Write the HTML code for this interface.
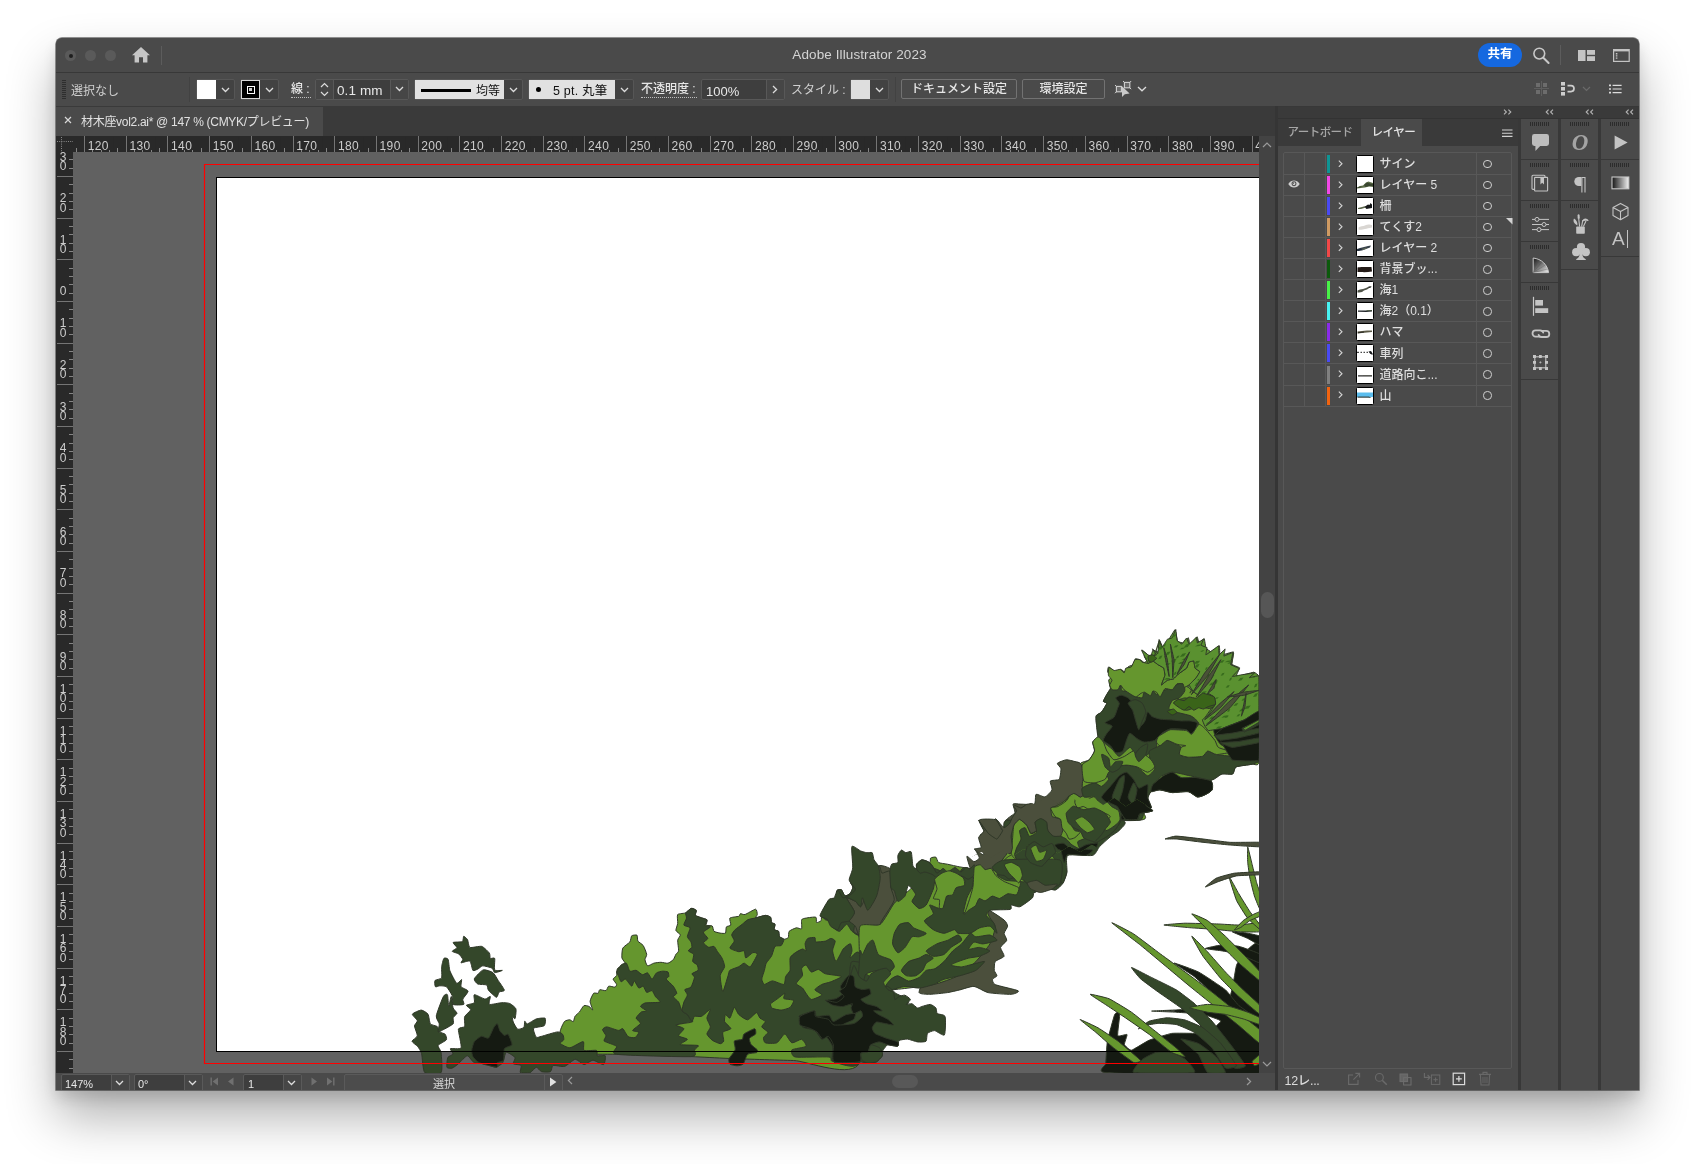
<!DOCTYPE html>
<html lang="ja"><head><meta charset="utf-8"><title>Adobe Illustrator 2023</title>
<style>
*{box-sizing:border-box;margin:0;padding:0}
html,body{width:1695px;height:1164px;overflow:hidden;background:#fff}
body{font-family:"Liberation Sans","Noto Sans CJK JP",sans-serif;color:#d8d8d8;font-size:12px;position:relative}
#win{position:absolute;left:56px;top:38px;width:1583px;height:1052px;border-radius:6px 6px 0 0;overflow:hidden;background:#4a4a4a}
#shadow{position:absolute;left:56px;top:38px;width:1583px;height:1052px;border-radius:6px 6px 0 0;box-shadow:0 27px 50px rgba(0,0,0,.31),0 8px 14px rgba(0,0,0,.12),0 0 0 .7px rgba(0,0,0,.55)}
#in{will-change:transform;position:absolute;left:-56px;top:-38px;width:1695px;height:1164px}
#in *{position:absolute}
.a{position:absolute}
/* title bar */
#title{left:56px;top:38px;width:1583px;height:34px;background:#4a4a4a}
#title .tl{width:11px;height:11px;border-radius:50%;background:#5a5a5a;top:12px}
#ttxt{left:12px;width:1583px;top:8.500px;text-align:center;font-size:13.500px;color:#d4d4d4;letter-spacing:.1px}
.hl{background:#383838;height:1px}
/* control bar */
#ctrl{left:56px;top:73px;width:1583px;height:33px;background:#4a4a4a}
.fld{border:1px solid #5c5c5c;border-radius:2px;background:#404040}
.lbl{color:#d2d2d2;font-size:12px;white-space:nowrap}
.btn{border:1px solid #727272;border-radius:2px;color:#e6e6e6;font-size:12px;text-align:center;font-weight:500}
/* doc tabs */
#tabs{left:56px;top:106px;width:1219px;height:30px;background:#3a3a3a}
#tab1{left:56px;top:107px;width:267px;height:29px;background:#4a4a4a}
/* rulers */
#hr{left:56px;top:136px;width:1203px;height:16px;background:#292929}
#vr{left:56px;top:152px;width:17px;height:921px;background:#292929}
.rt{font-family:"Liberation Sans",sans-serif;font-size:12px;fill:#cdcdcd;font-weight:400}
#canvas{left:73px;top:152px;width:1186px;height:921px;background:#616161;overflow:hidden}
#vs{left:1259px;top:136px;width:16px;height:954px;background:#434343}
#status{left:56px;top:1073px;width:1203px;height:17px;background:#4a4a4a}
/* dock */
#dock{left:1275px;top:106px;width:364px;height:984px;background:#383838}
.pn{background:#4a4a4a}
.lrow{left:1284px;width:228px;height:21.05px;border-bottom:1px solid #585858}
.lrow .eye{left:3.500px;top:5.300px}
.lrow .cb{left:42.900px;top:1px;width:3.400px;height:18px}
.lrow .chev{left:54px;top:5.900px}
.lrow .th{left:72px;top:1px;width:18px;height:18px;background:#fff;border:1px solid #000;border-radius:1.5px;overflow:hidden}
.lrow .th svg{left:0;top:0}
.lrow .ln{left:95.500px;top:1.100px;font-size:12px;color:#dedede;white-space:nowrap;line-height:18px;letter-spacing:0;font-weight:500}
.lrow .tc{left:199.300px;top:5.900px;width:8.400px;height:8.400px;border:1.100px solid #cfcfcf;border-radius:50%}
.grip{height:4px;width:19px;background:repeating-linear-gradient(90deg,#2c2c2c 0 1px,transparent 1px 2px)}

</style></head>
<body>
<div id="shadow"></div>
<div id="win"><div id="in">
<!-- title bar -->
<div id="title">
  <i class="tl" style="left:9px"></i><i class="tl" style="left:29px"></i><i class="tl" style="left:49px"></i>
  <i style="left:13px;top:16px;width:4px;height:4px;border-radius:50%;background:#1e1e1e"></i>
  <svg style="left:75px;top:8px" width="20" height="18" viewBox="0 0 20 18"><path d="M10 1L1 9.2H3.6V16.5H8V11.2H12V16.5H16.4V9.2H19Z" fill="#c6c6c6"/></svg>
  <i style="left:105px;top:8px;width:1px;height:19px;background:#5c5c5c"></i>
  <div id="ttxt">Adobe Illustrator 2023</div>
  <div style="left:1422px;top:5px;width:44px;height:24px;border-radius:12px;background:#1568e0;color:#fff;font-size:12.5px;font-weight:700;text-align:center;line-height:23px">共有</div>
  <svg style="left:1475px;top:8px" width="20" height="20" viewBox="0 0 20 20"><circle cx="8.3" cy="7.6" r="5.4" stroke="#c8c8c8" stroke-width="1.6" fill="none"/><path d="M12.3 11.7L17.6 17" stroke="#c8c8c8" stroke-width="2" stroke-linecap="round"/></svg>
  <i style="left:1504px;top:7px;width:1px;height:20px;background:#5c5c5c"></i>
  <svg style="left:1522px;top:12px" width="17" height="11" viewBox="0 0 17 11"><rect x="0" y="0" width="7.5" height="11" fill="#c4c4c4"/><rect x="9" y="0" width="8" height="4.8" fill="#c4c4c4"/><rect x="9" y="6.2" width="8" height="4.8" fill="#c4c4c4"/></svg>
  <svg style="left:1557px;top:11px" width="17" height="13" viewBox="0 0 17 13"><rect x=".6" y=".6" width="15.6" height="11.8" fill="none" stroke="#c4c4c4" stroke-width="1.2"/><path d="M.6 1.6H16" stroke="#c4c4c4" stroke-width="1.6"/><path d="M3.6 4v6" stroke="#c4c4c4" stroke-width="1.6" stroke-dasharray="1.4 .8"/></svg>
</div>
<div class="hl" style="left:56px;top:72px;width:1583px"></div>
<!-- control bar -->
<div id="ctrl">
<i style="left:6px;top:7px;width:4px;height:20px;background:repeating-linear-gradient(180deg,#2e2e2e 0 1px,transparent 1px 2px)"></i>
<div class="lbl" style="left:15px;top:8px;font-size:12px;color:#d0d0d0">選択なし</div>
<i style="left:133px;top:4px;width:1px;height:25px;background:#424242"></i>
<!-- fill -->
<div class="fld" style="left:140px;top:6px;width:39px;height:21px;background:#424242;border-color:#565656"></div>
<i style="left:141px;top:7px;width:19px;height:19px;background:#fff"></i>
<svg style="left:165px;top:14px" width="9" height="6" viewBox="0 0 9 6"><path d="M1 1L4.5 4.5L8 1" stroke="#dcdcdc" stroke-width="1.3" fill="none"/></svg>
<!-- stroke -->
<div class="fld" style="left:184px;top:6px;width:39px;height:21px;background:#424242;border-color:#565656"></div>
<i style="left:185px;top:7px;width:19px;height:19px;background:#000;border:1px solid #d8d8d8"></i>
<i style="left:190.5px;top:12.5px;width:8px;height:8px;border:1.5px solid #fff"></i>
<i style="left:193px;top:15px;width:3px;height:3px;background:#cfcfcf"></i>
<svg style="left:209px;top:14px" width="9" height="6" viewBox="0 0 9 6"><path d="M1 1L4.5 4.5L8 1" stroke="#dcdcdc" stroke-width="1.3" fill="none"/></svg>
<!-- stroke weight -->
<div class="lbl" style="left:235px;top:9px;font-size:12px;font-weight:500;color:#e6e6e6;border-bottom:1px dotted #bdbdbd;line-height:15px;width:19.500px">線 :</div>
<div class="fld" style="left:259px;top:6px;width:94px;height:21px;background:#3e3e3e;border-color:#585858"></div>
<i style="left:277px;top:7px;width:1px;height:19px;background:#585858"></i>
<i style="left:334px;top:7px;width:1px;height:19px;background:#585858"></i>
<i style="left:260px;top:7px;width:17px;height:19px;background:#464646"></i>
<i style="left:335px;top:7px;width:17px;height:19px;background:#464646"></i>
<svg style="left:264px;top:9px" width="9" height="15" viewBox="0 0 9 15"><path d="M1 5L4.5 1.5L8 5M1 10L4.5 13.5L8 10" stroke="#dcdcdc" stroke-width="1.2" fill="none"/></svg>
<div class="lbl" style="left:281px;top:10px;font-size:13.500px;color:#e8e8e8;letter-spacing:.1px">0.1 mm</div>
<svg style="left:339px;top:13px" width="9" height="6" viewBox="0 0 9 6"><path d="M1 1L4.5 4.5L8 1" stroke="#dcdcdc" stroke-width="1.3" fill="none"/></svg>
<!-- profile -->
<div class="fld" style="left:358px;top:6px;width:109px;height:21px;background:#424242;border-color:#565656"></div>
<i style="left:359px;top:7px;width:89px;height:19px;background:#e1e1e1"></i>
<i style="left:365px;top:15.500px;width:50px;height:3px;background:#000"></i>
<div class="lbl" style="left:420px;top:8px;font-size:12px;color:#111">均等</div>
<svg style="left:453px;top:14px" width="9" height="6" viewBox="0 0 9 6"><path d="M1 1L4.5 4.5L8 1" stroke="#dcdcdc" stroke-width="1.3" fill="none"/></svg>
<!-- brush -->
<div class="fld" style="left:472px;top:6px;width:106px;height:21px;background:#424242;border-color:#565656"></div>
<i style="left:473px;top:7px;width:86px;height:19px;background:#e1e1e1"></i>
<i style="left:480px;top:14px;width:5px;height:5px;border-radius:50%;background:#000"></i>
<div class="lbl" style="left:497px;top:7.300px;font-size:12.500px;color:#111;letter-spacing:.2px">5 pt. 丸筆</div>
<svg style="left:564px;top:14px" width="9" height="6" viewBox="0 0 9 6"><path d="M1 1L4.5 4.5L8 1" stroke="#dcdcdc" stroke-width="1.3" fill="none"/></svg>
<!-- opacity -->
<div class="lbl" style="left:585px;top:9px;font-size:12px;font-weight:500;color:#e6e6e6;border-bottom:1px dotted #bdbdbd;line-height:15px;width:55.500px">不透明度 :</div>
<div class="fld" style="left:645px;top:6px;width:84px;height:21px;background:#3e3e3e;border-color:#585858"></div>
<i style="left:710px;top:7px;width:1px;height:19px;background:#585858"></i>
<i style="left:711px;top:7px;width:17px;height:19px;background:#464646"></i>
<div class="lbl" style="left:650px;top:10.500px;font-size:13px;color:#e8e8e8">100%</div>
<svg style="left:716px;top:12px" width="6" height="9" viewBox="0 0 6 9"><path d="M1 1L4.6 4.5L1 8" stroke="#dcdcdc" stroke-width="1.3" fill="none"/></svg>
<!-- style -->
<div class="lbl" style="left:735px;top:7.300px;font-size:12px;color:#d0d0d0;letter-spacing:0">スタイル :</div>
<div class="fld" style="left:794px;top:6px;width:39px;height:21px;background:#424242;border-color:#565656"></div>
<i style="left:795px;top:7px;width:19px;height:19px;background:#dedede"></i>
<svg style="left:819px;top:14px" width="9" height="6" viewBox="0 0 9 6"><path d="M1 1L4.5 4.5L8 1" stroke="#dcdcdc" stroke-width="1.3" fill="none"/></svg>
<i style="left:839px;top:4px;width:1px;height:25px;background:#424242"></i>
<!-- buttons -->
<div class="btn" style="left:845px;top:6px;width:116px;height:20px;line-height:18px">ドキュメント設定</div>
<div class="btn" style="left:966px;top:6px;width:83px;height:20px;line-height:18px">環境設定</div>
<svg style="left:1058px;top:7px" width="18" height="18" viewBox="0 0 18 18"><rect x="2.4" y="6.4" width="5" height="5.4" fill="#6a6a6a" stroke="#d0d0d0" stroke-width="1.1"/><rect x="10.4" y="2.4" width="5.4" height="5.4" fill="#6a6a6a" stroke="#d0d0d0" stroke-width="1.1"/><path d="M1 5L2.4 6.4M1 13.2L2.4 11.8M9 1L10.4 2.4M17.2 1L15.8 2.4M17.2 9.2L15.8 7.8" stroke="#d0d0d0" stroke-width="1"/><path d="M8 6.2V17L10.8 14.2L15.6 13.4Z" fill="#c9c9c9"/></svg>
<svg style="left:1081px;top:13px" width="10" height="6" viewBox="0 0 10 6"><path d="M1 1L5 4.8L9 1" stroke="#dcdcdc" stroke-width="1.3" fill="none"/></svg>
<!-- right icons -->
<svg style="left:1478px;top:8px" width="15" height="15" viewBox="0 0 15 15"><path d="M7.5 0V15M0 7.5H15" stroke="#5e5e5e" stroke-width="1"/><rect x="2" y="2" width="4" height="4" fill="#6c6c6c"/><rect x="9" y="2" width="4" height="4" fill="#6c6c6c"/><rect x="2" y="9" width="4" height="4" fill="#6c6c6c"/><rect x="9" y="9" width="4" height="4" fill="#6c6c6c"/></svg>
<svg style="left:1504px;top:8px" width="16" height="16" viewBox="0 0 16 16"><rect x="1" y="1" width="4" height="3.6" fill="#cdcdcd"/><rect x="1" y="6" width="4" height="3.6" fill="#cdcdcd"/><rect x="1" y="11" width="4" height="3.6" fill="#cdcdcd"/><path d="M7.5 4.6H11A2.9 2.9 0 0 1 11 10.6H7.5" stroke="#cdcdcd" stroke-width="1.7" fill="none"/></svg>
<svg style="left:1526px;top:13px" width="9" height="6" viewBox="0 0 9 6"><path d="M1 1L4.5 4.5L8 1" stroke="#6a6a6a" stroke-width="1.2" fill="none"/></svg>
<svg style="left:1553px;top:11px" width="13" height="10" viewBox="0 0 13 10"><path d="M0 1.4H2M0 5H2M0 8.6H2" stroke="#dcdcdc" stroke-width="1.6"/><path d="M3.6 1.4H12.6M3.6 5H12.6M3.6 8.6H12.6" stroke="#dcdcdc" stroke-width="1.2"/></svg>

</div>
<div class="hl" style="left:56px;top:106px;width:1583px;background:#3a3a3a"></div>
<!-- doc tabs -->
<div id="tabs"></div>
<div id="tab1">
  <svg style="left:8px;top:9px" width="8" height="8" viewBox="0 0 8 8"><path d="M1 1L7 7M7 1L1 7" stroke="#d8d8d8" stroke-width="1.2"/></svg>
  <div style="left:25px;top:5px;font-size:12px;color:#e0e0e0;white-space:nowrap;letter-spacing:-.3px">材木座vol2.ai* @ 147 % (CMYK/プレビュー)</div>
</div>
<!-- rulers -->
<div id="hr"></div><div id="vr"></div>
<div id="canvas">
<svg style="left:0;top:0" width="1186" height="921" viewBox="73 152 1186 921">
<rect x="216" y="177" width="1100" height="875" fill="#000"/>
<rect x="217" y="178" width="1100" height="873" fill="#fff"/>
<path d="M560.0 1054.3C557.7 1052.1 559.6 1035.5 560.0 1032.2C560.4 1028.9 563.5 1022.8 564.4 1021.6C565.4 1020.4 568.8 1019.8 569.7 1019.8C570.6 1019.8 572.7 1021.9 573.3 1021.6C573.8 1021.2 574.4 1017.3 575.0 1016.3C575.7 1015.3 578.6 1012.9 579.5 1011.9C580.4 1010.8 582.9 1006.2 583.9 1005.7C584.9 1005.1 588.3 1006.1 589.2 1006.5C590.1 1007.0 592.7 1010.6 592.7 1010.1C592.8 1009.6 590.0 1002.9 590.1 1001.2C590.2 999.6 592.8 994.1 593.6 993.3C594.4 992.5 597.4 993.6 598.1 993.3C598.7 992.9 599.0 990.0 599.8 989.7C600.6 989.5 605.1 991.0 606.0 990.6C606.9 990.3 607.8 986.5 608.7 986.2C609.6 985.8 614.1 987.3 614.9 987.1C615.7 986.9 616.8 985.2 616.6 984.4C616.5 983.6 613.1 980.0 613.1 979.1C613.1 978.2 616.2 976.6 616.6 975.6C617.1 974.5 616.6 969.6 617.5 968.5C618.4 967.3 625.0 965.1 625.5 964.1C625.9 963.0 622.2 959.5 621.9 957.9C621.7 956.3 622.0 949.7 622.8 948.1C623.6 946.5 629.0 943.2 629.9 941.9C630.8 940.7 631.0 936.4 631.7 935.8C632.4 935.1 636.4 934.7 637.0 935.2C637.6 935.8 637.3 940.0 637.9 941.1C638.5 942.1 642.3 944.2 643.2 945.5C644.1 946.8 646.5 952.9 646.7 954.3C646.9 955.8 644.9 958.5 645.0 959.6C645.0 960.8 646.7 965.5 647.6 965.8C648.5 966.2 652.5 963.5 653.8 963.2C655.1 962.8 659.5 962.3 660.9 962.3C662.3 962.3 666.7 963.5 668.0 963.2C669.2 962.9 672.5 960.5 673.3 959.6C674.1 958.8 675.4 955.2 675.9 954.3C676.5 953.5 678.4 952.2 678.6 950.8C678.8 949.4 677.5 941.8 677.7 940.2C677.9 938.6 680.5 935.8 680.4 934.9C680.2 933.9 676.2 931.6 675.9 930.4C675.7 929.3 677.5 925.0 677.7 923.4C677.9 921.8 676.8 915.6 677.7 914.5C678.6 913.5 685.2 913.4 686.5 912.7C687.9 912.1 690.0 908.6 691.0 908.3C691.9 908.1 695.8 909.4 696.3 910.1C696.7 910.8 694.3 914.4 695.4 915.4C696.5 916.4 705.8 918.8 706.9 919.8C708.0 920.8 705.5 924.5 706.0 925.1C706.5 925.8 711.4 925.4 712.2 926.0C713.0 926.6 713.2 930.6 714.0 931.3C714.8 932.0 719.0 932.9 720.2 933.1C721.3 933.3 724.9 933.7 725.5 933.1C726.1 932.5 725.8 927.7 726.4 926.9C726.9 926.1 730.4 926.0 730.8 925.1C731.2 924.2 729.1 918.9 729.9 918.1C730.7 917.2 737.7 916.7 738.8 916.3C739.8 915.8 739.9 913.8 740.5 913.6C741.2 913.5 743.5 915.0 745.0 914.5C746.5 914.1 754.3 909.2 755.6 909.2C756.8 909.2 757.3 913.6 757.3 914.5C757.3 915.4 754.8 918.0 755.6 918.1C756.4 918.1 763.8 915.5 765.3 915.4C766.8 915.3 770.0 916.5 770.6 917.2C771.2 917.9 771.1 921.8 771.5 922.5C771.9 923.2 774.8 923.5 775.0 924.2C775.3 925.0 773.8 928.8 774.2 929.6C774.5 930.3 778.1 930.6 778.6 931.3C779.1 932.0 778.9 935.8 779.5 936.6C780.0 937.4 783.0 939.2 783.9 939.3C784.8 939.4 787.8 938.3 788.3 937.5C788.8 936.7 788.4 932.3 789.2 931.3C790.0 930.4 795.0 928.1 796.3 927.8C797.5 927.5 801.1 929.5 801.6 928.7C802.1 927.9 801.2 920.9 801.6 919.8C802.0 918.8 804.6 918.3 806.0 918.1C807.4 917.8 814.7 916.7 815.8 917.2C816.8 917.6 816.1 922.1 816.6 922.5C817.2 922.8 820.5 921.5 821.1 920.7C821.6 919.9 821.2 915.6 821.9 914.5C822.7 913.5 828.2 911.5 829.0 910.1C829.8 908.7 829.2 901.6 829.9 900.4C830.6 899.1 835.4 898.7 836.1 897.7C836.8 896.7 836.5 891.4 837.0 890.6C837.5 889.8 840.6 889.2 841.4 889.7C842.2 890.3 844.1 895.6 845.0 895.9C845.8 896.3 849.5 894.2 850.3 893.3C851.1 892.4 852.9 888.2 852.9 887.1C852.9 885.9 850.1 882.5 850.3 881.8C850.4 881.1 853.7 880.2 854.7 880.0C855.7 879.8 859.5 861.8 860.0 880.0C860.5 898.2 866.6 1043.9 860.0 1061.9C853.4 1080.0 806.8 1060.9 793.6 1060.5C780.4 1060.2 738.4 1058.8 728.1 1058.4C717.9 1058.0 702.1 1057.0 691.0 1056.6C679.8 1056.2 627.4 1054.6 616.6 1054.3C605.8 1054.1 588.7 1054.3 583.0 1054.3C577.3 1054.3 562.3 1056.5 560.0 1054.3Z" fill="#65962e" stroke="#2f3728" stroke-width="1"/>
<path d="M602.5 1029.6C602.6 1028.7 605.3 1026.8 606.9 1026.9C608.5 1027.0 616.8 1030.3 618.4 1030.4C620.0 1030.6 621.9 1028.1 622.8 1028.7C623.8 1029.3 626.9 1035.8 628.1 1036.6C629.4 1037.5 634.2 1038.0 635.2 1037.5C636.3 1037.1 639.0 1032.9 638.8 1032.2C638.5 1031.5 632.4 1031.3 632.6 1030.4C632.7 1029.6 640.2 1024.6 640.5 1023.4C640.9 1022.1 636.0 1019.2 636.1 1018.1C636.2 1016.9 640.4 1012.6 641.4 1011.9C642.5 1011.2 646.8 1011.5 646.7 1011.0C646.6 1010.4 640.7 1007.3 640.5 1006.5C640.4 1005.8 643.0 1003.5 645.0 1003.0C646.9 1002.6 658.9 1002.7 660.0 1002.1C661.1 1001.5 656.4 998.0 655.6 996.8C654.8 995.7 652.9 991.1 652.0 990.6C651.2 990.2 647.6 992.8 646.7 992.4C645.8 991.9 644.0 986.6 643.2 986.2C642.4 985.8 639.6 988.5 638.8 988.0C637.9 987.4 635.0 981.1 634.3 980.9C633.6 980.7 632.6 986.4 631.7 986.2C630.8 986.0 626.5 979.6 625.5 979.1C624.4 978.7 621.8 982.1 621.1 981.8C620.4 981.4 618.8 976.5 618.4 975.6C618.0 974.6 616.4 973.1 616.6 972.0C616.9 971.0 620.1 965.8 621.1 965.0C622.0 964.1 625.5 962.6 626.4 963.2C627.3 963.8 628.9 970.4 629.9 971.2C630.9 971.9 634.9 969.9 636.1 970.3C637.3 970.6 641.2 974.4 642.3 974.7C643.5 975.0 646.6 972.5 647.6 972.9C648.6 973.4 651.2 979.1 652.0 979.1C652.9 979.1 655.4 973.7 656.5 972.9C657.5 972.1 661.5 971.2 662.7 971.2C663.8 971.1 667.3 971.5 668.0 972.0C668.6 972.6 669.0 975.8 668.8 976.5C668.7 977.2 665.8 978.1 666.2 979.1C666.6 980.1 672.2 984.8 673.3 986.2C674.3 987.6 676.8 992.2 676.8 993.3C676.8 994.3 673.1 995.9 673.3 996.8C673.5 997.7 677.7 1000.7 678.6 1002.1C679.5 1003.5 681.2 1009.7 682.1 1011.0C683.0 1012.2 686.4 1013.5 687.4 1014.5C688.5 1015.6 693.1 1020.7 692.7 1021.6C692.4 1022.5 685.6 1023.0 683.9 1023.4C682.2 1023.7 675.9 1024.6 675.9 1025.1C675.9 1025.7 683.6 1027.6 683.9 1028.7C684.2 1029.7 678.2 1034.7 678.6 1035.8C678.9 1036.8 687.3 1038.4 687.4 1039.3C687.6 1040.2 679.3 1044.0 680.4 1044.6C681.4 1045.2 696.6 1045.0 698.1 1045.5C699.5 1046.0 695.2 1048.8 694.5 1049.9C693.8 1051.0 698.8 1056.2 691.0 1056.6C683.2 1057.1 624.1 1055.4 616.6 1054.3C609.2 1053.3 617.9 1047.7 616.6 1046.4C615.4 1045.0 605.3 1042.1 604.2 1041.1C603.2 1040.0 606.2 1036.9 606.0 1035.8C605.8 1034.6 602.4 1030.4 602.5 1029.6Z" fill="#34472a" stroke="#2f3728" stroke-width="1"/>
<path d="M682.1 1011.0C681.8 1009.7 683.4 1003.7 683.9 1002.1C684.4 1000.5 687.3 996.3 687.4 995.0C687.5 993.8 684.4 990.5 684.8 989.7C685.1 988.9 690.0 988.3 691.0 987.1C691.9 985.8 694.4 978.7 694.5 977.3C694.6 976.0 691.5 974.5 691.9 973.8C692.2 973.1 697.5 971.2 698.1 970.3C698.6 969.4 697.7 965.8 697.2 965.0C696.6 964.1 693.1 962.5 692.7 961.4C692.4 960.4 694.1 955.4 693.6 954.3C693.2 953.3 688.5 951.5 688.3 950.8C688.1 950.1 691.6 948.1 691.9 947.3C692.1 946.4 691.4 943.0 691.0 941.9C690.5 940.9 687.5 938.1 687.4 936.6C687.3 935.2 690.4 928.9 690.1 927.8C689.7 926.6 684.2 926.1 683.9 925.1C683.5 924.2 686.4 919.3 686.5 918.1C686.7 916.8 685.1 913.7 685.7 912.7C686.2 911.8 690.8 908.5 691.9 908.3C692.9 908.1 695.9 910.3 696.3 911.0C696.6 911.7 694.9 914.7 695.4 915.4C695.9 916.1 700.4 917.6 701.6 918.1C702.7 918.5 706.5 919.0 706.9 919.8C707.3 920.6 704.8 925.3 705.1 926.0C705.5 926.7 710.6 926.3 710.4 926.9C710.3 927.5 703.6 931.1 703.4 932.2C703.1 933.4 707.8 937.3 707.8 938.4C707.8 939.5 703.3 941.9 703.4 942.8C703.5 943.7 707.6 946.9 708.7 947.3C709.7 947.6 713.1 945.9 714.0 946.4C714.9 946.8 716.7 950.5 717.5 951.7C718.3 952.8 721.2 956.4 721.9 957.9C722.7 959.4 724.8 965.0 724.6 966.7C724.4 968.5 720.4 973.1 720.2 975.6C720.0 978.1 722.0 991.5 722.8 991.5C723.6 991.5 727.4 977.7 728.1 975.6C728.8 973.5 728.8 971.2 729.9 970.3C731.0 969.4 737.3 967.4 738.8 966.7C740.2 966.0 742.9 963.2 744.1 963.2C745.2 963.2 748.9 967.6 750.3 966.7C751.6 965.8 757.1 955.8 757.3 954.3C757.6 952.9 754.1 952.2 752.9 952.6C751.8 952.9 746.7 958.1 745.8 957.9C745.0 957.7 744.8 951.4 744.1 950.8C743.4 950.2 740.2 951.9 738.8 951.7C737.3 951.4 730.4 949.2 729.9 948.1C729.5 947.1 734.2 942.4 734.3 941.1C734.5 939.7 731.6 936.0 731.7 934.9C731.8 933.7 734.2 930.6 735.2 929.6C736.3 928.5 741.1 925.2 742.3 924.2C743.5 923.3 746.4 920.4 747.6 919.8C748.8 919.2 752.9 918.5 754.7 918.1C756.5 917.6 763.7 915.5 765.3 915.4C766.9 915.3 770.0 916.5 770.6 917.2C771.2 917.9 771.1 921.8 771.5 922.5C771.9 923.2 774.8 923.5 775.0 924.2C775.3 925.0 773.8 928.8 774.2 929.6C774.5 930.3 778.1 930.6 778.6 931.3C779.1 932.0 778.9 935.8 779.5 936.6C780.0 937.4 783.7 938.4 783.9 939.3C784.1 940.2 782.1 944.8 781.2 945.5C780.4 946.2 776.0 945.3 775.0 946.4C774.1 947.4 772.4 954.4 771.5 956.1C770.6 957.8 766.9 961.8 766.2 963.2C765.5 964.6 764.9 968.7 764.4 970.3C764.0 971.9 761.8 977.7 761.8 979.1C761.8 980.5 763.4 984.2 764.4 984.4C765.5 984.6 770.4 980.9 772.4 980.9C774.3 980.9 782.6 984.9 783.9 984.4C785.2 984.0 785.0 977.9 785.7 976.5C786.3 975.0 789.6 972.1 790.1 970.3C790.5 968.4 789.6 959.6 790.1 957.9C790.6 956.1 794.2 953.5 795.4 952.6C796.6 951.7 801.4 949.2 802.5 949.0C803.5 948.8 805.8 951.3 806.0 950.8C806.3 950.3 805.0 945.0 805.1 943.7C805.3 942.5 806.8 939.0 807.8 938.4C808.8 937.8 814.1 937.2 814.9 937.5C815.7 937.9 814.7 941.6 815.8 941.9C816.8 942.3 824.0 941.4 825.5 941.1C827.0 940.7 829.8 938.4 830.8 938.4C831.8 938.4 835.0 939.8 835.2 941.1C835.4 942.3 832.5 948.8 832.6 950.8C832.7 952.8 835.0 961.6 836.1 961.4C837.2 961.2 841.8 950.8 843.2 949.0C844.6 947.3 849.4 943.5 850.3 943.7C851.2 943.9 852.0 949.4 852.0 950.8C852.0 952.2 849.5 957.3 850.3 957.9C851.1 958.4 859.0 945.8 860.0 956.1C861.0 966.5 862.7 1050.9 860.0 1061.4C857.3 1071.9 835.7 1061.9 832.6 1061.4C829.5 1061.0 832.7 1057.4 829.0 1057.0C825.3 1056.5 799.1 1057.7 795.4 1057.0C791.7 1056.3 790.8 1051.0 791.9 1049.9C792.9 1048.8 805.0 1047.4 806.0 1046.4C807.0 1045.3 803.0 1039.6 801.6 1039.3C800.2 1038.9 793.5 1043.4 791.9 1042.8C790.2 1042.3 786.3 1034.0 784.8 1034.0C783.3 1034.0 778.8 1041.9 776.8 1042.8C774.9 1043.7 766.6 1043.4 765.3 1042.8C764.0 1042.3 763.3 1038.6 763.5 1037.5C763.8 1036.5 768.1 1033.3 768.0 1032.2C767.8 1031.2 762.0 1028.0 761.8 1026.9C761.5 1025.8 765.5 1022.5 765.3 1021.6C765.1 1020.7 760.9 1018.9 760.0 1018.1C759.1 1017.2 757.7 1012.6 756.5 1012.7C755.2 1012.9 749.4 1019.6 747.6 1019.8C745.8 1020.0 740.1 1015.8 738.8 1014.5C737.4 1013.3 735.2 1007.1 734.3 1007.4C733.5 1007.8 730.8 1017.3 729.9 1018.1C729.0 1018.8 726.0 1014.2 725.5 1014.5C725.0 1014.9 724.1 1020.2 724.6 1021.6C725.1 1023.0 731.0 1027.6 730.8 1028.7C730.6 1029.7 723.5 1031.0 722.8 1032.2C722.1 1033.5 724.0 1039.9 723.7 1041.1C723.5 1042.2 721.3 1043.8 720.2 1043.7C719.0 1043.6 713.5 1041.2 712.2 1040.2C710.9 1039.2 707.1 1035.3 706.9 1034.0C706.7 1032.7 710.4 1028.5 710.4 1026.9C710.4 1025.3 706.9 1019.8 706.9 1018.1C706.9 1016.3 711.0 1009.4 710.4 1009.2C709.9 1009.0 703.2 1015.6 701.6 1016.3C700.0 1017.0 695.5 1015.8 694.5 1016.3C693.5 1016.8 692.6 1021.8 691.9 1021.6C691.2 1021.4 688.4 1015.6 687.4 1014.5C686.5 1013.5 682.5 1012.2 682.1 1011.0Z" fill="#34472a" stroke="#2f3728" stroke-width="1"/>
<path d="M821.9 914.5C822.3 913.5 828.2 911.5 829.0 910.1C829.8 908.7 829.2 901.6 829.9 900.4C830.6 899.1 835.4 898.7 836.1 897.7C836.8 896.7 836.5 891.4 837.0 890.6C837.5 889.8 840.6 889.2 841.4 889.7C842.2 890.3 844.1 895.6 845.0 895.9C845.8 896.3 849.5 894.2 850.3 893.3C851.1 892.4 852.9 888.2 852.9 887.1C852.9 885.9 850.1 882.5 850.3 881.8C850.4 881.1 853.7 880.2 854.7 880.0C855.7 879.8 859.5 874.7 860.0 880.0C860.5 885.3 860.8 928.0 860.0 933.1C859.2 938.2 853.4 932.2 852.0 931.3C850.7 930.4 848.0 924.2 846.7 924.2C845.5 924.2 841.0 931.0 839.6 931.3C838.3 931.7 834.0 928.8 833.5 927.8C832.9 926.8 835.1 922.4 834.3 921.6C833.5 920.8 826.7 920.5 825.5 919.8C824.2 919.1 821.6 915.5 821.9 914.5Z" fill="#34472a" stroke="#2f3728" stroke-width="1"/>
<path d="M845.8 901.2C846.0 900.4 852.4 898.8 853.8 898.6C855.2 898.4 859.4 896.0 860.0 899.5C860.6 902.9 860.6 929.9 860.0 933.1C859.4 936.3 854.2 932.7 853.8 931.3C853.4 929.9 855.9 920.9 855.6 918.9C855.2 917.0 850.6 913.1 850.3 911.9C849.9 910.6 852.5 907.6 852.0 906.5C851.6 905.5 845.7 902.0 845.8 901.2Z" fill="#4b4f3c" stroke="#2f3728" stroke-width="1"/>
<path d="M796.3 983.5C796.3 982.3 801.9 977.1 802.5 975.6C803.0 974.1 801.2 969.6 801.6 968.5C801.9 967.4 805.0 964.6 806.0 965.0C807.0 965.3 810.1 971.6 811.3 972.0C812.6 972.5 817.0 969.2 818.4 969.4C819.8 969.6 823.2 973.1 825.5 973.8C827.8 974.5 840.9 975.7 841.4 976.5C841.9 977.3 832.7 981.0 830.8 981.8C828.8 982.6 823.5 983.6 821.9 984.4C820.4 985.2 814.9 988.7 814.9 989.7C814.9 990.8 822.3 994.1 821.9 995.0C821.6 996.0 812.9 999.6 811.3 999.5C809.7 999.3 806.9 994.4 806.0 993.3C805.1 992.1 803.5 988.9 802.5 988.0C801.5 987.0 796.3 984.8 796.3 983.5Z" fill="#65962e" stroke="#2f3728" stroke-width="1"/>
<path d="M770.6 1003.9C771.2 1002.9 776.3 999.6 777.7 998.6C779.1 997.5 784.2 993.3 784.8 993.3C785.4 993.3 783.0 997.9 783.9 998.6C784.8 999.3 793.0 999.5 793.6 1000.4C794.2 1001.2 791.3 1006.5 790.1 1007.4C788.8 1008.4 783.0 1010.0 781.2 1010.1C779.5 1010.2 773.5 1008.9 772.4 1008.3C771.3 1007.7 770.1 1004.9 770.6 1003.9Z" fill="#65962e" stroke="#2f3728" stroke-width="1"/>
<path d="M734.3 1041.1C735.0 1040.0 741.3 1040.0 742.3 1039.3C743.3 1038.6 742.8 1035.0 744.1 1034.0C745.3 1032.9 753.5 1028.7 754.7 1028.7C755.8 1028.7 756.1 1033.0 755.6 1034.0C755.0 1035.0 749.8 1037.3 749.4 1038.4C748.9 1039.5 750.4 1043.5 751.2 1044.6C751.9 1045.8 756.8 1049.1 757.3 1049.9C757.9 1050.7 757.4 1052.1 756.5 1052.6C755.5 1053.0 748.9 1053.2 747.6 1054.3C746.3 1055.5 744.2 1062.9 743.2 1064.1C742.1 1065.2 738.3 1065.8 737.0 1065.8C735.7 1065.8 730.7 1064.8 729.9 1064.1C729.1 1063.4 728.5 1060.2 729.0 1058.8C729.6 1057.3 734.7 1051.7 735.2 1049.9C735.8 1048.1 733.6 1042.1 734.3 1041.1Z" fill="#151a12" stroke="#2f3728" stroke-width="1"/>
<path d="M798.9 1016.3C798.9 1015.4 806.2 1013.3 807.8 1012.7C809.4 1012.2 814.0 1010.6 814.9 1011.0C815.8 1011.3 815.2 1015.8 816.6 1016.3C818.1 1016.7 827.3 1014.9 829.0 1015.4C830.7 1015.9 831.7 1021.7 833.5 1021.6C835.2 1021.5 844.1 1015.0 846.7 1014.5C849.4 1014.0 858.7 1011.6 860.0 1016.3C861.3 1021.0 862.7 1056.9 860.0 1061.4C857.3 1065.9 836.2 1062.9 833.5 1061.4C830.7 1059.9 833.4 1048.9 832.6 1046.4C831.8 1043.8 826.5 1036.5 825.5 1035.8C824.4 1035.0 823.0 1039.8 821.9 1039.3C820.9 1038.8 816.3 1031.5 814.9 1030.4C813.5 1029.4 809.0 1029.0 807.8 1028.7C806.5 1028.3 802.5 1027.6 802.5 1026.9C802.5 1026.2 808.1 1022.7 807.8 1021.6C807.4 1020.5 798.9 1017.2 798.9 1016.3Z" fill="#151a12" stroke="#2f3728" stroke-width="1"/>
<path d="M840.5 986.2C841.1 984.4 847.2 976.5 848.5 975.6C849.8 974.6 853.2 975.4 853.8 976.5C854.4 977.5 854.1 985.2 854.7 986.2C855.3 987.2 859.5 983.4 860.0 986.2C860.5 989.0 860.5 1011.9 860.0 1014.5C859.5 1017.2 855.7 1013.8 854.7 1012.7C853.7 1011.7 852.1 1004.8 850.3 1003.9C848.4 1003.0 838.4 1004.2 836.1 1003.9C833.8 1003.5 827.3 1000.9 827.3 1000.4C827.3 999.8 834.5 999.3 836.1 998.6C837.7 997.9 842.7 994.5 843.2 993.3C843.6 992.0 840.0 988.0 840.5 986.2Z" fill="#151a12" stroke="#2f3728" stroke-width="1"/>
<path d="M878.4 866.0C881.4 863.7 894.2 869.6 896.1 873.1C898.1 876.6 899.1 896.3 897.9 901.4C896.6 906.5 887.4 921.8 883.7 924.4C880.0 927.1 864.4 930.6 860.7 928.0C857.0 925.3 846.0 901.1 846.5 897.9C847.1 894.7 862.8 899.3 866.0 896.1C869.2 892.9 875.4 868.3 878.4 866.0Z" fill="#4b4f3c" stroke="#2f3728" stroke-width="1"/>
<path d="M851.9 961.6C854.2 960.4 870.8 964.6 873.1 966.9C875.4 969.2 876.3 982.5 874.9 984.6C873.5 986.7 861.4 988.7 858.9 988.1C856.5 987.6 850.8 981.9 850.1 979.3C849.4 976.6 849.6 962.8 851.9 961.6Z" fill="#34472a" stroke="#2f3728" stroke-width="1"/>
<path d="M966.9 856.3C967.3 855.6 972.7 861.4 974.0 861.6C975.2 861.8 979.1 859.2 979.3 858.1C979.5 856.9 975.3 850.4 975.8 850.1C976.2 849.7 983.3 856.0 983.7 854.5C984.2 853.0 980.0 837.1 980.2 835.0C980.4 833.0 985.6 835.7 985.5 834.2C985.4 832.7 978.1 821.4 979.3 820.0C980.4 818.6 994.7 818.9 997.0 820.0C999.3 821.1 1001.4 830.6 1002.3 830.6C1003.2 830.6 1004.6 821.1 1005.8 820.0C1007.1 818.9 1014.0 817.7 1014.7 820.0C1015.4 822.3 1013.8 839.5 1012.9 843.0C1012.0 846.5 1007.4 853.1 1005.8 855.4C1004.2 857.7 998.6 864.2 997.0 866.0C995.4 867.8 992.2 872.4 989.9 873.1C987.6 873.8 975.9 873.5 974.0 873.1C972.0 872.7 971.2 870.4 970.4 868.7C969.7 867.0 966.5 857.0 966.9 856.3Z" fill="#4b4f3c" stroke="#2f3728" stroke-width="1"/>
<path d="M986.4 909.4C988.3 908.8 1001.9 918.3 1004.1 920.0C1006.2 921.7 1007.6 924.9 1007.6 926.2C1007.6 927.5 1004.2 931.9 1004.1 933.3C1004.0 934.7 1007.1 938.9 1006.7 940.4C1006.4 941.8 1000.8 945.8 1000.5 947.4C1000.3 949.0 1004.6 954.9 1004.1 956.3C1003.5 957.7 996.2 960.2 995.2 961.6C994.2 963.0 994.2 969.0 994.3 970.4C994.5 971.9 997.2 974.9 997.0 975.8C996.8 976.6 992.7 978.4 992.6 979.3C992.4 980.2 992.7 983.5 995.2 984.6C997.8 985.8 1016.6 989.8 1018.2 990.8C1019.8 991.8 1014.2 994.2 1011.2 994.3C1008.1 994.5 991.9 993.4 988.1 992.6C984.4 991.8 976.8 986.6 974.0 986.4C971.2 986.1 962.5 989.3 959.8 989.9C957.2 990.5 950.4 992.1 947.4 992.6C944.4 993.0 932.6 994.3 929.7 994.3C926.9 994.3 919.5 994.1 919.1 992.6C918.8 991.1 921.9 981.5 926.2 979.3C930.4 977.1 956.3 974.0 961.6 970.4C966.9 966.9 977.0 948.3 979.3 943.9C981.6 939.5 983.9 929.6 984.6 926.2C985.3 922.7 984.4 910.0 986.4 909.4Z" fill="#4b4f3c" stroke="#2f3728" stroke-width="1"/>
<path d="M846.5 897.9C846.6 896.8 854.0 900.5 855.4 901.4C856.8 902.3 859.6 907.3 860.7 906.7C861.8 906.2 864.2 900.2 866.0 896.1C867.8 892.0 876.8 868.3 878.4 866.0C880.0 863.7 880.8 872.6 881.9 873.1C883.1 873.6 889.0 869.9 889.9 871.3C890.8 872.7 890.4 884.4 890.8 887.3C891.2 890.1 894.7 897.2 894.3 899.6C894.0 902.1 888.7 909.6 887.3 912.0C885.8 914.5 880.7 921.2 880.2 924.4C879.6 927.6 882.1 940.9 881.9 943.9C881.8 946.9 879.3 954.5 878.4 954.5C877.5 954.5 874.3 946.0 873.1 943.9C871.9 941.8 867.3 933.6 866.0 933.3C864.8 932.9 861.8 941.1 860.7 940.4C859.6 939.6 856.5 928.1 855.4 926.2C854.2 924.2 849.3 922.3 849.2 920.9C849.1 919.5 854.8 914.3 854.5 912.0C854.2 909.7 846.5 898.9 846.5 897.9Z" fill="#4b4f3c" stroke="#2f3728" stroke-width="1"/>
<path d="M1027.1 881.9C1027.8 880.9 1035.6 879.8 1037.7 880.2C1039.8 880.5 1046.5 884.5 1048.3 885.5C1050.1 886.5 1055.8 889.6 1055.4 889.9C1055.0 890.2 1046.9 887.9 1044.8 888.1C1042.7 888.4 1035.6 892.3 1034.2 892.6C1032.7 892.8 1031.3 891.9 1030.6 890.8C1029.9 889.7 1026.4 883.0 1027.1 881.9Z" fill="#4b4f3c" stroke="#2f3728" stroke-width="1"/>
<path d="M860.0 926.2C862.0 922.5 876.7 926.7 880.2 924.4C883.6 922.1 891.5 906.5 894.3 903.2C897.2 899.8 906.7 892.4 908.5 890.8C910.3 889.2 911.0 889.0 912.0 887.3C913.1 885.5 917.3 875.6 919.1 873.1C920.9 870.6 928.6 864.0 929.7 862.5C930.9 861.0 930.0 858.6 930.6 858.1C931.2 857.5 935.1 856.7 935.9 857.2C936.7 857.6 937.4 861.8 938.6 862.5C939.7 863.2 945.3 863.8 947.4 864.2C949.6 864.7 957.6 866.5 959.8 866.9C962.0 867.3 968.1 868.1 969.6 868.7C971.0 869.3 971.9 872.7 974.0 873.1C976.0 873.5 987.6 873.8 989.9 873.1C992.2 872.4 995.4 867.8 997.0 866.0C998.6 864.2 1004.2 857.7 1005.8 855.4C1007.4 853.1 1011.2 845.8 1012.9 843.0C1014.7 840.2 1020.7 828.8 1023.5 827.1C1026.4 825.3 1038.1 823.7 1041.2 825.3C1044.4 826.9 1053.6 840.0 1055.4 843.0C1057.2 846.0 1058.6 852.4 1058.9 855.4C1059.3 858.4 1062.8 869.6 1058.9 873.1C1055.0 876.6 1024.4 888.5 1020.0 890.8C1015.6 893.1 1017.9 894.0 1014.7 896.1C1011.5 898.2 990.1 909.0 988.1 912.0C986.2 915.0 995.0 923.0 995.2 926.2C995.4 929.4 991.9 940.4 989.9 943.9C988.0 947.4 978.9 958.4 975.8 961.6C972.6 964.8 962.3 973.5 958.1 975.8C953.8 978.1 940.0 983.2 933.3 984.6C926.5 986.0 895.8 989.7 890.8 989.9C885.8 990.1 886.4 988.1 883.7 986.4C881.1 984.6 866.6 974.7 864.2 972.2C861.9 969.7 860.4 966.2 860.0 961.6C859.6 957.0 858.0 929.9 860.0 926.2Z" fill="#65962e" stroke="#2f3728" stroke-width="1"/>
<path d="M820.0 915.6C820.2 913.6 827.4 901.4 828.8 899.6C830.3 897.9 833.3 898.8 834.2 897.9C835.0 896.9 836.8 889.9 837.7 889.9C838.6 889.9 841.7 897.4 843.0 897.9C844.3 898.3 849.7 895.2 851.0 894.3C852.2 893.5 855.6 890.4 855.4 889.0C855.2 887.6 849.5 882.3 849.2 880.2C848.9 878.1 852.5 871.2 852.7 867.8C853.0 864.4 851.1 848.2 851.9 846.5C852.7 844.9 859.2 850.4 860.7 851.0C862.2 851.6 865.8 852.6 866.9 852.7C868.1 852.9 871.5 852.0 872.2 852.7C872.9 853.5 873.4 858.5 874.0 859.8C874.6 861.2 877.8 864.2 878.4 866.0C879.0 867.9 880.4 875.4 880.2 878.4C880.0 881.4 877.9 892.9 876.6 896.1C875.4 899.3 869.2 910.1 867.8 910.3C866.4 910.4 863.2 898.2 862.5 897.9C861.8 897.5 861.4 906.4 860.7 906.7C860.0 907.1 856.8 902.3 855.4 901.4C854.0 900.5 846.6 896.8 846.5 897.9C846.5 898.9 854.2 909.7 854.5 912.0C854.8 914.3 850.5 919.8 849.2 920.9C847.9 921.9 842.4 921.8 841.2 922.7C840.1 923.5 838.8 929.4 837.7 929.7C836.6 930.1 831.7 927.3 830.6 926.2C829.6 925.1 828.1 920.2 827.1 919.1C826.0 918.1 819.8 917.5 820.0 915.6Z" fill="#34472a" stroke="#2f3728" stroke-width="1"/>
<path d="M889.9 871.3C890.0 869.0 890.9 865.1 891.7 864.2C892.5 863.4 897.3 863.4 897.9 862.5C898.5 861.6 897.5 856.6 897.9 855.4C898.2 854.2 900.6 850.4 901.4 850.1C902.2 849.8 904.9 852.6 905.8 852.7C906.8 852.9 910.4 850.5 911.2 851.9C911.9 853.2 912.4 864.3 912.9 866.0C913.5 867.7 916.1 868.8 916.5 868.7C916.8 868.5 915.9 865.1 916.5 864.2C917.0 863.4 920.4 860.0 921.8 859.8C923.1 859.6 928.6 861.7 929.7 862.5C930.9 863.3 932.2 866.9 933.3 867.8C934.3 868.7 940.2 870.1 940.4 871.3C940.5 872.6 935.8 878.4 935.0 880.2C934.3 881.9 934.2 886.5 933.3 889.0C932.4 891.5 927.6 903.0 926.2 905.0C924.8 906.9 920.5 908.8 919.1 908.5C917.7 908.1 912.4 902.8 912.0 901.4C911.7 900.0 915.9 895.9 915.6 894.3C915.2 892.7 909.6 885.3 908.5 885.5C907.4 885.7 906.0 894.5 905.0 896.1C903.9 897.7 898.9 901.9 897.9 901.4C896.8 900.9 895.0 892.2 894.3 890.8C893.6 889.4 891.2 889.2 890.8 887.3C890.4 885.3 889.8 873.6 889.9 871.3Z" fill="#34472a" stroke="#2f3728" stroke-width="1"/>
<path d="M924.4 920.9C924.4 919.3 932.7 915.4 933.3 913.8C933.8 912.2 929.0 905.5 929.7 905.0C930.4 904.4 938.9 909.2 940.4 908.5C941.8 907.8 942.8 899.3 943.9 897.9C945.0 896.5 949.9 895.4 951.0 894.3C952.0 893.3 953.1 888.5 954.5 887.3C955.9 886.0 964.6 883.4 965.1 881.9C965.7 880.5 960.0 874.5 959.8 873.1C959.6 871.7 962.4 868.2 963.4 867.8C964.3 867.3 968.5 867.8 969.6 868.7C970.6 869.6 973.7 874.8 974.0 876.6C974.2 878.5 972.9 885.1 972.2 887.3C971.5 889.4 967.8 895.2 966.9 897.9C966.0 900.5 962.7 913.6 963.4 913.8C964.1 914.0 972.4 901.6 974.0 899.6C975.6 897.7 978.1 895.0 979.3 894.3C980.5 893.6 985.0 893.3 986.4 892.6C987.8 891.9 991.7 887.6 993.5 887.3C995.2 886.9 1001.6 888.8 1004.1 889.0C1006.5 889.2 1016.6 889.7 1018.2 889.0C1019.8 888.3 1021.2 882.8 1020.0 881.9C1018.8 881.1 1008.1 880.9 1005.8 880.2C1003.5 879.5 997.2 875.9 997.0 874.9C996.8 873.8 1002.3 869.2 1004.1 869.6C1005.8 869.9 1012.7 877.2 1014.7 878.4C1016.6 879.6 1022.3 882.5 1023.5 881.9C1024.8 881.4 1027.1 874.9 1027.1 873.1C1027.1 871.3 1023.0 865.5 1023.5 864.2C1024.1 863.0 1030.3 860.2 1032.4 860.7C1034.5 861.2 1042.5 869.4 1044.8 869.6C1047.1 869.7 1054.0 863.9 1055.4 862.5C1056.8 861.1 1057.8 854.5 1058.9 855.4C1060.1 856.3 1066.5 868.5 1066.9 871.3C1067.3 874.2 1063.6 881.9 1062.5 883.7C1061.3 885.6 1057.2 889.5 1055.4 889.9C1053.6 890.4 1046.9 887.9 1044.8 888.1C1042.7 888.4 1035.4 891.6 1034.2 892.6C1032.9 893.5 1033.8 896.5 1032.4 897.9C1031.0 899.3 1022.1 906.0 1020.0 906.7C1017.9 907.4 1012.1 904.7 1011.2 905.0C1010.2 905.2 1012.4 908.8 1010.3 909.4C1008.1 909.9 992.3 909.6 989.9 910.3C987.5 910.9 986.0 914.3 986.4 915.6C986.7 916.8 992.4 920.9 993.5 922.7C994.5 924.4 997.3 932.9 997.0 933.3C996.6 933.6 991.7 926.7 989.9 926.2C988.1 925.7 981.2 927.3 979.3 928.0C977.3 928.7 972.6 932.7 970.4 933.3C968.3 933.8 959.6 933.6 958.1 933.3C956.5 932.9 955.9 929.7 954.5 929.7C953.1 929.7 946.0 933.3 943.9 933.3C941.8 933.3 935.2 931.0 933.3 929.7C931.3 928.5 924.4 922.5 924.4 920.9Z" fill="#34472a" stroke="#2f3728" stroke-width="1"/>
<path d="M970.4 933.3C971.9 932.6 973.8 936.6 975.8 936.8C977.7 937.0 987.8 934.7 989.9 935.0C992.0 935.4 997.7 939.5 997.0 940.4C996.3 941.2 985.1 943.7 982.8 943.9C980.5 944.1 975.4 941.6 974.0 942.1C972.6 942.7 968.1 948.7 968.7 949.2C969.2 949.7 977.2 947.3 979.3 947.4C981.4 947.6 989.9 950.1 989.9 951.0C989.9 951.9 981.4 955.6 979.3 956.3C977.2 957.0 970.8 957.5 968.7 958.1C966.5 958.6 959.8 960.9 958.1 961.6C956.3 962.3 950.6 964.6 951.0 965.1C951.3 965.7 959.1 967.1 961.6 966.9C964.1 966.7 973.5 963.9 975.8 963.4C978.1 962.8 984.6 960.9 984.6 961.6C984.6 962.3 978.2 969.0 975.8 970.4C973.3 971.9 963.0 974.9 959.8 975.8C956.6 976.6 946.5 978.4 943.9 979.3C941.2 980.2 935.8 983.7 933.3 984.6C930.8 985.5 921.9 988.0 919.1 988.1C916.3 988.3 907.8 986.2 905.0 986.4C902.1 986.5 892.7 989.9 890.8 989.9C888.8 989.9 885.5 987.4 885.5 986.4C885.5 985.3 889.6 980.4 890.8 979.3C892.0 978.2 896.1 975.6 897.9 975.8C899.6 975.9 906.4 980.9 908.5 981.1C910.6 981.2 917.3 978.6 919.1 977.5C920.9 976.5 924.6 971.3 926.2 970.4C927.8 969.6 933.3 969.6 935.0 968.7C936.8 967.8 942.1 963.4 943.9 961.6C945.7 959.8 951.0 952.7 952.7 951.0C954.5 949.2 959.8 945.7 961.6 943.9C963.4 942.1 969.0 934.0 970.4 933.3Z" fill="#34472a" stroke="#2f3728" stroke-width="1"/>
<path d="M892.6 943.9C892.2 941.9 893.6 935.2 894.3 933.3C895.0 931.3 898.2 925.5 899.6 924.4C901.1 923.4 907.1 922.3 908.5 922.7C909.9 923.0 912.0 926.9 913.8 928.0C915.6 929.0 925.7 932.4 926.2 933.3C926.7 934.2 920.5 936.5 919.1 936.8C917.7 937.2 913.5 935.8 912.0 936.8C910.6 937.9 906.4 945.8 905.0 947.4C903.5 949.0 899.1 953.1 897.9 952.7C896.6 952.4 892.9 945.8 892.6 943.9Z" fill="#34472a" stroke="#2f3728" stroke-width="1"/>
<path d="M860.0 952.7C860.2 946.2 861.7 955.4 862.5 954.5C863.3 953.6 866.7 945.3 867.8 943.9C868.8 942.5 872.0 939.3 873.1 940.4C874.2 941.4 876.6 952.6 878.4 954.5C880.2 956.5 889.2 958.6 890.8 959.8C892.4 961.1 894.7 965.5 894.3 966.9C894.0 968.3 888.8 973.6 887.3 974.0C885.7 974.3 880.5 970.4 878.4 970.4C876.3 970.4 867.4 972.7 866.0 974.0C864.6 975.2 863.5 981.2 864.2 982.8C865.0 984.4 870.8 989.6 873.1 989.9C875.4 990.3 885.0 986.0 887.3 986.4C889.6 986.7 894.5 992.4 896.1 993.5C897.7 994.5 901.9 996.1 903.2 997.0C904.4 997.9 908.3 1001.2 908.5 1002.3C908.7 1003.4 904.6 1006.7 905.0 1007.6C905.3 1008.5 911.0 1009.9 912.0 1011.2C913.1 1012.4 920.8 1019.1 915.6 1020.0C910.4 1020.9 865.6 1026.7 860.0 1020.0C854.4 1013.3 859.8 959.3 860.0 952.7Z" fill="#34472a" stroke="#2f3728" stroke-width="1"/>
<path d="M901.4 970.4C901.6 969.0 906.7 962.8 908.5 961.6C910.3 960.4 917.3 958.8 919.1 958.1C920.9 957.3 924.8 954.5 926.2 954.5C927.6 954.5 933.3 957.2 933.3 958.1C933.3 958.9 927.3 962.1 926.2 963.4C925.1 964.6 923.7 969.2 922.7 970.4C921.6 971.7 917.2 975.2 915.6 975.8C914.0 976.3 908.1 976.3 906.7 975.8C905.3 975.2 901.2 971.9 901.4 970.4Z" fill="#34472a" stroke="#2f3728" stroke-width="1"/>
<path d="M926.2 951.0C926.5 949.7 934.7 945.0 936.8 943.9C938.9 942.8 945.3 941.2 947.4 940.4C949.6 939.5 956.6 935.0 958.1 935.0C959.5 935.0 962.3 939.1 961.6 940.4C960.9 941.6 952.7 946.0 951.0 947.4C949.2 948.8 945.7 953.6 943.9 954.5C942.1 955.4 935.0 956.6 933.3 956.3C931.5 955.9 925.8 952.2 926.2 951.0Z" fill="#34472a" stroke="#2f3728" stroke-width="1"/>
<path d="M1007.6 820.0C1018.3 817.7 1108.8 819.0 1120.0 820.0C1131.2 821.0 1121.0 828.1 1120.0 829.7C1119.0 831.4 1112.3 835.1 1110.3 836.8C1108.2 838.5 1101.4 844.7 1099.6 846.5C1097.9 848.4 1095.8 854.5 1092.6 855.4C1089.4 856.3 1070.4 853.8 1067.8 855.4C1065.2 857.0 1067.4 868.5 1066.9 871.3C1066.4 874.2 1063.6 883.5 1062.5 883.7C1061.3 883.9 1058.4 873.6 1055.4 873.1C1052.4 872.6 1035.6 878.4 1032.4 878.4C1029.2 878.4 1025.3 875.4 1023.5 873.1C1021.8 870.8 1015.8 858.4 1014.7 855.4C1013.6 852.4 1013.6 846.5 1012.9 843.0C1012.2 839.5 996.9 822.3 1007.6 820.0Z" fill="#34472a" stroke="#2f3728" stroke-width="1"/>
<path d="M1025.3 846.5C1025.8 846.0 1030.8 849.9 1032.4 850.1C1034.0 850.3 1039.5 848.0 1041.2 848.3C1043.0 848.7 1048.7 852.4 1050.1 853.6C1051.5 854.9 1055.4 859.5 1055.4 860.7C1055.4 861.9 1051.2 865.8 1050.1 866.0C1049.0 866.2 1045.8 862.5 1044.8 862.5C1043.7 862.5 1040.7 866.2 1039.5 866.0C1038.2 865.8 1033.6 861.8 1032.4 860.7C1031.2 859.6 1027.8 856.8 1027.1 855.4C1026.4 854.0 1024.8 847.1 1025.3 846.5Z" fill="#65962e" stroke="#2f3728" stroke-width="1"/>
<path d="M1004.1 860.7C1004.4 859.3 1009.7 855.2 1011.2 855.4C1012.6 855.6 1017.0 860.9 1018.2 862.5C1019.5 864.1 1023.2 869.7 1023.5 871.3C1023.9 872.9 1022.7 878.2 1021.8 878.4C1020.9 878.6 1016.1 874.0 1014.7 873.1C1013.3 872.2 1008.7 870.8 1007.6 869.6C1006.5 868.3 1003.7 862.1 1004.1 860.7Z" fill="#65962e" stroke="#2f3728" stroke-width="1"/>
<path d="M1012.9 825.3C1013.9 823.7 1020.0 821.6 1021.8 821.8C1023.5 821.9 1030.1 825.7 1030.6 827.1C1031.2 828.5 1028.3 834.7 1027.1 835.9C1025.8 837.2 1019.5 838.2 1018.2 839.5C1017.0 840.7 1015.3 848.5 1014.7 848.3C1014.1 848.1 1012.2 840.0 1012.0 837.7C1011.9 835.4 1011.9 826.9 1012.9 825.3Z" fill="#65962e" stroke="#2f3728" stroke-width="1"/>
<path d="M1064.2 823.5C1065.0 822.8 1073.1 826.2 1074.9 827.1C1076.6 828.0 1081.9 831.3 1081.9 832.4C1081.9 833.5 1076.3 837.5 1074.9 837.7C1073.5 837.9 1068.8 835.6 1067.8 834.2C1066.7 832.7 1063.5 824.2 1064.2 823.5Z" fill="#65962e" stroke="#2f3728" stroke-width="1"/>
<path d="M1057.2 843.9C1057.9 843.4 1066.0 844.3 1067.8 844.8C1069.6 845.2 1072.4 847.8 1074.9 848.3C1077.3 848.8 1091.5 849.4 1092.6 850.1C1093.6 850.8 1088.0 855.0 1085.5 855.4C1083.0 855.8 1069.9 853.8 1067.8 854.5C1065.7 855.2 1065.0 862.9 1064.2 862.5C1063.5 862.0 1061.4 851.9 1060.7 850.1C1060.0 848.2 1056.5 844.4 1057.2 843.9Z" fill="#151a12" stroke="#2f3728" stroke-width="1"/>
<path d="M916.5 868.7C916.3 867.9 916.7 864.3 917.1 863.6C917.6 862.9 921.0 860.1 921.8 859.9C922.7 859.7 926.5 861.0 927.3 861.4C928.2 861.9 931.4 864.4 932.2 865.4C933.0 866.4 936.1 873.0 937.0 873.2C937.9 873.5 942.1 868.5 943.0 868.4C943.9 868.3 946.8 872.1 947.8 872.0C948.8 871.9 953.9 867.5 955.0 867.5C956.1 867.5 960.1 872.0 961.0 872.0C961.9 872.0 965.1 867.7 965.8 867.5C966.6 867.2 969.3 869.2 970.0 869.0C970.7 868.8 973.8 864.4 974.3 864.8C974.7 865.3 976.0 873.2 975.5 874.4C975.0 875.6 969.2 879.0 968.2 879.2C967.2 879.4 964.4 877.2 963.4 876.8C962.4 876.4 957.4 874.7 956.2 874.4C955.0 874.1 950.2 873.2 949.0 873.2C947.8 873.2 942.8 874.0 941.8 874.4C940.8 874.8 937.8 878.0 937.0 878.0C936.2 878.0 933.2 874.9 932.2 874.4C931.2 873.9 925.9 872.1 924.9 872.0C923.9 871.9 920.8 873.5 920.1 873.2C919.4 872.9 916.8 869.5 916.5 868.7Z" fill="#34472a" stroke="#2f3728" stroke-width="1"/>
<path d="M974.3 867.2C974.9 865.4 979.4 864.6 980.3 864.8C981.2 865.0 984.2 869.3 985.1 869.6C986.0 869.9 990.2 867.9 991.1 868.4C992.0 868.9 994.8 874.5 995.9 875.6C997.0 876.7 1002.4 880.6 1004.3 881.6C1006.2 882.6 1017.7 886.6 1018.7 887.7C1019.8 888.8 1017.2 894.4 1016.3 894.9C1015.4 895.4 1009.3 893.4 1007.9 893.7C1006.5 894.0 1000.8 898.3 999.5 898.5C998.2 898.7 993.5 895.9 992.3 896.1C991.1 896.3 986.2 900.7 985.1 900.9C984.0 901.1 979.9 898.1 979.1 898.5C978.3 898.9 976.4 904.7 975.5 905.7C974.6 906.7 969.1 909.8 968.2 910.5C967.3 911.2 964.5 915.0 964.6 914.1C964.7 913.2 968.7 902.0 969.4 899.7C970.1 897.4 972.6 889.2 973.0 886.5C973.4 883.8 973.7 869.0 974.3 867.2Z" fill="#65962e" stroke="#2f3728" stroke-width="1"/>
<path d="M934.6 879.2C935.0 877.9 940.6 873.9 941.8 873.2C943.0 872.5 947.8 870.8 949.0 870.8C950.2 870.8 955.0 872.6 956.2 873.2C957.4 873.8 962.7 877.0 963.4 878.0C964.1 879.0 965.2 884.5 964.6 885.3C964.0 886.1 957.2 886.9 956.2 887.7C955.2 888.5 953.4 894.2 952.6 894.9C951.8 895.6 947.4 895.0 946.6 896.1C945.8 897.2 943.6 907.1 943.0 908.1C942.4 909.1 939.7 908.8 939.4 908.1C939.1 907.4 939.9 900.5 939.4 899.7C938.9 898.9 933.6 899.4 933.4 898.5C933.2 897.6 936.9 890.5 937.0 888.9C937.1 887.3 934.2 880.5 934.6 879.2Z" fill="#65962e" stroke="#2f3728" stroke-width="1"/>
<path d="M992.3 867.2C992.8 866.0 998.7 860.6 1004.3 860.0C1010.0 859.4 1055.4 858.0 1060.0 860.0C1064.6 862.0 1061.0 881.7 1060.0 884.1C1059.0 886.4 1049.4 887.9 1047.6 887.7C1045.8 887.5 1039.6 881.9 1038.0 881.6C1036.4 881.3 1029.6 884.2 1028.4 884.1C1027.2 884.0 1024.6 881.0 1023.6 880.4C1022.6 879.8 1017.5 876.9 1016.3 876.8C1015.1 876.7 1010.1 879.3 1009.1 879.2C1008.1 879.1 1005.2 876.0 1004.3 875.6C1003.4 875.2 999.3 875.1 998.3 874.4C997.3 873.7 991.8 868.4 992.3 867.2Z" fill="#34472a" stroke="#2f3728" stroke-width="1"/>
<path d="M1004.3 864.8C1004.5 863.9 1010.2 862.2 1011.5 862.4C1012.8 862.6 1019.0 866.1 1020.0 867.2C1020.9 868.3 1022.5 874.3 1022.4 875.6C1022.3 876.9 1019.5 882.6 1018.7 882.9C1018.0 883.1 1014.7 878.8 1013.9 878.0C1013.1 877.2 1009.9 874.3 1009.1 873.2C1008.3 872.1 1004.1 865.7 1004.3 864.8Z" fill="#65962e" stroke="#2f3728" stroke-width="1"/>
<path d="M1027.2 882.9C1027.7 882.1 1035.3 880.2 1036.8 880.4C1038.3 880.6 1043.5 885.0 1045.2 885.3C1046.9 885.6 1056.6 883.8 1057.2 884.1C1057.8 884.4 1053.8 888.2 1052.4 888.9C1051.0 889.6 1042.2 892.5 1040.4 892.5C1038.6 892.5 1031.9 889.7 1030.8 888.9C1029.7 888.1 1026.7 883.6 1027.2 882.9Z" fill="#4b4f3c" stroke="#2f3728" stroke-width="1"/>
<path d="M853.8 965.5C854.9 964.5 858.2 975.3 859.5 976.8C860.7 978.4 865.4 981.3 866.5 981.1C867.7 980.8 869.5 975.1 870.8 974.0C872.1 972.8 877.7 970.3 879.3 969.7C880.8 969.2 885.2 967.9 886.4 968.3C887.5 968.7 890.9 972.6 890.6 974.0C890.3 975.4 883.8 980.9 883.5 982.5C883.3 984.0 886.8 988.6 887.8 989.6C888.8 990.5 892.7 991.4 893.5 992.4C894.2 993.4 894.3 999.0 894.9 999.5C895.4 999.9 898.1 997.1 899.1 996.6C900.1 996.2 903.6 994.9 904.8 995.2C905.9 995.5 910.3 998.5 910.4 999.5C910.6 1000.4 906.1 1004.0 906.2 1004.4C906.3 1004.8 910.7 1003.4 911.9 1003.7C913.0 1004.1 916.5 1007.7 917.5 1008.0C918.5 1008.2 920.5 1006.9 921.8 1006.5C923.0 1006.2 928.8 1004.3 930.3 1004.4C931.7 1004.6 935.2 1007.0 935.9 1008.0C936.6 1008.9 936.4 1012.8 937.3 1013.6C938.3 1014.5 944.4 1014.3 945.1 1016.5C945.8 1018.6 945.5 1033.5 944.4 1034.9C943.4 1036.3 936.2 1030.8 934.5 1030.6C932.8 1030.5 928.3 1032.4 927.4 1033.5C926.6 1034.5 927.0 1040.4 926.0 1041.2C925.0 1042.1 919.4 1042.2 917.5 1041.9C915.7 1041.7 909.5 1039.3 907.6 1039.1C905.8 1039.0 900.1 1039.8 899.1 1040.5C898.1 1041.2 898.8 1045.8 897.7 1046.2C896.6 1046.6 889.1 1044.6 887.8 1044.8C886.5 1044.9 885.5 1046.9 885.0 1047.6C884.4 1048.3 882.4 1051.0 882.1 1051.9C881.8 1052.7 882.7 1055.1 882.1 1056.1C881.6 1057.1 877.9 1061.1 876.5 1061.8C875.0 1062.5 869.7 1063.2 868.0 1063.2C866.3 1063.2 862.0 1061.8 859.5 1061.8C856.9 1061.8 845.0 1063.2 842.5 1063.2C839.9 1063.2 834.8 1064.2 834.0 1061.8C833.1 1059.4 833.1 1042.8 834.0 1039.1C834.8 1035.4 840.5 1026.9 842.5 1025.0C844.5 1023.0 852.4 1021.0 853.8 1019.3C855.2 1017.6 856.6 1010.2 856.6 1008.0C856.6 1005.7 854.7 998.8 853.8 996.6C853.0 994.5 848.1 989.8 848.1 986.7C848.1 983.6 852.7 966.5 853.8 965.5Z" fill="#34472a" stroke="#2f3728" stroke-width="1"/>
<path d="M849.6 975.4C850.4 974.4 853.2 975.7 853.8 976.8C854.4 977.9 854.4 985.5 855.2 986.7C856.1 988.0 860.9 989.3 862.3 989.6C863.7 989.8 868.5 988.4 869.4 988.8C870.2 989.3 871.1 993.0 870.8 993.8C870.5 994.6 867.5 996.1 866.5 996.6C865.6 997.2 860.9 998.8 860.9 999.5C860.9 1000.2 865.0 1003.0 866.5 1003.7C868.1 1004.4 874.9 1005.8 876.5 1006.5C878.0 1007.3 882.4 1010.4 882.1 1010.8C881.8 1011.2 873.9 1010.4 873.6 1010.8C873.3 1011.2 877.9 1014.2 879.3 1015.0C880.7 1015.9 886.4 1018.3 887.8 1019.3C889.2 1020.3 893.7 1024.5 893.5 1025.0C893.2 1025.4 886.7 1023.8 885.0 1023.5C883.3 1023.3 877.7 1021.7 876.5 1022.1C875.2 1022.5 872.4 1026.7 872.2 1027.8C872.1 1028.9 873.8 1032.5 875.0 1033.5C876.3 1034.4 882.7 1036.8 885.0 1037.7C887.2 1038.5 896.4 1041.1 897.7 1041.9C899.0 1042.8 898.7 1045.9 897.7 1046.2C896.7 1046.5 889.6 1045.2 887.8 1044.8C885.9 1044.4 881.0 1041.9 879.3 1041.9C877.6 1041.9 871.9 1043.8 870.8 1044.8C869.7 1045.8 869.0 1051.0 868.0 1051.9C867.0 1052.7 861.7 1052.3 860.9 1053.3C860.0 1054.3 862.2 1060.9 859.5 1061.8C856.8 1062.6 836.6 1063.5 834.0 1061.8C831.4 1060.1 833.8 1047.3 833.3 1044.8C832.7 1042.2 829.4 1036.8 828.3 1036.3C827.3 1035.7 823.8 1039.5 822.7 1039.1C821.5 1038.7 818.4 1033.2 817.0 1032.0C815.6 1030.9 810.2 1028.5 808.5 1027.8C806.8 1027.1 800.8 1026.1 800.0 1025.0C799.2 1023.8 798.6 1017.9 800.0 1016.5C801.4 1015.0 812.6 1010.8 814.2 1010.8C815.7 1010.8 814.2 1015.6 815.6 1016.5C817.0 1017.3 826.5 1018.4 828.3 1019.3C830.2 1020.1 831.4 1024.5 834.0 1025.0C836.5 1025.4 851.0 1024.4 853.8 1023.5C856.6 1022.7 861.6 1017.7 862.3 1016.5C863.0 1015.2 861.7 1011.1 860.9 1010.8C860.0 1010.5 854.8 1013.9 853.8 1013.6C852.8 1013.3 851.1 1009.0 851.0 1008.0C850.8 1007.0 853.2 1003.9 852.4 1003.7C851.5 1003.6 844.5 1006.4 842.5 1006.5C840.5 1006.7 834.3 1005.8 832.6 1005.1C830.9 1004.5 825.1 1000.5 825.5 1000.2C825.9 999.9 835.0 1002.7 836.8 1002.3C838.7 1001.9 843.6 997.8 843.9 996.6C844.2 995.5 839.5 992.0 839.6 991.0C839.8 990.0 844.3 988.3 845.3 986.7C846.3 985.2 848.7 976.4 849.6 975.4Z" fill="#151a12" stroke="#2f3728" stroke-width="1"/>
<path d="M860.9 1053.3C861.5 1052.4 867.0 1052.7 868.0 1051.9C869.0 1051.0 869.7 1045.2 870.8 1044.8C871.9 1044.4 878.2 1046.9 879.3 1047.6C880.4 1048.3 881.8 1051.0 882.1 1051.9C882.4 1052.7 882.7 1055.1 882.1 1056.1C881.6 1057.1 877.9 1061.1 876.5 1061.8C875.0 1062.5 869.4 1063.3 868.0 1063.2C866.5 1063.0 863.0 1061.3 862.3 1060.4C861.6 1059.4 860.3 1054.1 860.9 1053.3Z" fill="#34472a" stroke="#2f3728" stroke-width="1"/>
<path d="M1108.7 666.9C1109.4 666.8 1113.6 671.1 1114.9 671.3C1116.1 671.6 1119.9 669.4 1121.1 669.6C1122.2 669.7 1125.7 673.4 1126.4 673.1C1127.1 672.8 1127.3 667.8 1128.1 666.9C1128.9 666.0 1133.6 665.0 1134.3 664.2C1135.0 663.5 1134.6 659.4 1135.2 658.9C1135.8 658.5 1139.6 659.5 1140.5 659.8C1141.4 660.2 1143.4 662.4 1144.1 662.5C1144.8 662.6 1146.5 660.7 1147.6 660.7C1148.7 660.7 1153.3 662.1 1154.7 662.5C1156.1 662.8 1160.9 663.2 1161.8 664.2C1162.7 665.3 1162.5 671.9 1163.5 673.1C1164.6 674.3 1169.9 675.2 1172.4 676.6C1174.9 678.1 1184.8 685.8 1188.3 687.3C1191.9 688.7 1200.7 688.7 1207.8 690.8C1214.9 692.9 1254.0 701.4 1259.1 708.5C1264.2 715.6 1259.8 756.0 1259.1 761.6C1258.4 767.2 1254.3 763.7 1252.0 764.2C1249.7 764.8 1238.1 765.9 1236.1 766.9C1234.2 767.9 1234.0 773.3 1232.6 774.0C1231.2 774.7 1224.1 773.4 1221.9 774.0C1219.8 774.6 1212.3 778.6 1211.3 780.2C1210.4 781.8 1212.9 788.4 1212.2 789.9C1211.5 791.4 1205.8 794.5 1204.2 795.2C1202.7 795.9 1198.8 797.3 1197.2 797.0C1195.6 796.6 1190.8 792.1 1188.3 791.7C1185.8 791.2 1175.2 792.7 1172.4 792.6C1169.6 792.4 1162.1 790.0 1160.0 789.9C1157.9 789.8 1152.4 790.8 1151.2 791.7C1149.9 792.6 1147.6 797.2 1147.6 798.8C1147.6 800.4 1151.5 806.2 1151.2 807.6C1150.8 809.0 1145.1 811.7 1144.1 812.9C1143.0 814.2 1150.1 819.3 1140.5 820.0C1131.0 820.7 1056.6 821.6 1048.5 820.0C1040.4 818.4 1056.6 806.7 1059.1 804.1C1061.6 801.4 1071.2 794.2 1073.3 793.5C1075.4 792.7 1078.9 797.2 1080.4 797.0C1081.8 796.8 1087.3 792.7 1087.4 791.7C1087.6 790.6 1082.5 788.3 1082.1 786.4C1081.8 784.4 1084.1 774.5 1083.9 772.2C1083.7 769.9 1079.8 764.6 1080.4 763.4C1080.9 762.1 1087.8 761.1 1089.2 759.8C1090.6 758.6 1094.2 752.7 1094.5 751.0C1094.9 749.2 1092.4 743.5 1092.7 742.1C1093.1 740.7 1097.7 738.8 1098.1 736.8C1098.4 734.9 1096.5 724.8 1096.3 722.7C1096.1 720.5 1095.8 716.6 1096.3 715.6C1096.8 714.5 1100.5 713.3 1101.6 712.0C1102.7 710.8 1106.7 704.2 1106.9 703.2C1107.1 702.1 1103.4 702.3 1103.4 701.4C1103.4 700.5 1106.2 695.6 1106.9 694.3C1107.6 693.1 1110.3 690.4 1110.4 689.0C1110.6 687.6 1108.5 681.4 1108.7 680.2C1108.8 678.9 1112.3 677.4 1112.2 676.6C1112.1 675.8 1108.1 673.2 1107.8 672.2C1107.4 671.2 1108.0 667.0 1108.7 666.9Z" fill="#65962e" stroke="#2f3728" stroke-width="1"/>
<path d="M1013.1 804.1C1013.6 803.2 1018.1 804.1 1020.2 804.1C1022.3 804.1 1032.7 805.0 1034.3 804.1C1035.9 803.1 1035.0 795.0 1036.1 794.3C1037.2 793.6 1043.4 797.4 1045.0 797.0C1046.5 796.5 1051.5 791.5 1052.0 789.9C1052.6 788.3 1049.6 782.1 1050.3 781.1C1051.0 780.0 1058.1 780.5 1059.1 779.3C1060.2 778.1 1061.1 770.3 1060.9 768.7C1060.7 767.1 1056.8 764.2 1057.3 763.4C1057.9 762.5 1064.4 760.0 1066.2 759.8C1068.0 759.6 1073.6 761.2 1075.0 761.6C1076.5 761.9 1079.5 762.3 1080.4 763.4C1081.2 764.4 1083.7 769.9 1083.9 772.2C1084.1 774.5 1081.8 784.4 1082.1 786.4C1082.5 788.3 1087.6 790.6 1087.4 791.7C1087.3 792.7 1081.8 796.8 1080.4 797.0C1078.9 797.2 1075.4 792.7 1073.3 793.5C1071.2 794.2 1061.2 802.1 1059.1 804.1C1057.0 806.0 1053.1 811.3 1052.0 812.9C1051.0 814.5 1052.9 819.3 1048.5 820.0C1044.1 820.7 1011.2 820.7 1007.8 820.0C1004.4 819.3 1014.3 814.5 1014.9 812.9C1015.4 811.3 1012.6 805.0 1013.1 804.1Z" fill="#4b4f3c" stroke="#2f3728" stroke-width="1"/>
<path d="M1142.3 650.1C1142.4 650.0 1149.9 657.2 1150.3 657.2C1150.6 657.2 1152.7 650.3 1152.9 650.1C1153.2 649.9 1158.0 652.2 1158.2 651.9C1158.4 651.5 1158.9 639.6 1159.1 639.5C1159.3 639.4 1163.2 648.3 1163.5 648.3C1163.9 648.3 1168.5 640.1 1168.8 639.5C1169.2 638.8 1174.7 629.7 1175.0 629.7C1175.3 629.8 1177.4 640.8 1177.7 641.2C1178.0 641.7 1182.7 643.1 1183.0 643.0C1183.4 642.9 1188.1 637.6 1188.3 637.7C1188.6 637.8 1189.8 644.8 1190.1 644.8C1190.4 644.7 1196.9 636.9 1197.2 636.8C1197.5 636.8 1198.7 642.9 1198.9 643.0C1199.2 643.1 1204.0 638.4 1204.2 638.6C1204.5 638.8 1205.8 647.9 1206.0 648.3C1206.3 648.8 1210.9 651.9 1211.3 651.9C1211.8 651.8 1219.0 645.5 1219.3 645.7C1219.6 645.8 1219.7 655.2 1220.2 655.4C1220.6 655.6 1233.1 651.6 1233.5 651.9C1233.8 652.2 1231.5 663.7 1231.7 664.2C1231.9 664.8 1239.5 667.4 1239.6 667.8C1239.8 668.2 1235.6 676.5 1236.1 676.6C1236.6 676.8 1253.0 672.2 1253.8 672.2C1254.6 672.2 1258.9 675.1 1259.1 676.6C1259.3 678.2 1259.9 717.5 1259.1 719.1C1258.3 720.8 1237.6 725.9 1236.1 726.2C1234.6 726.5 1215.9 728.2 1214.9 728.0C1213.8 727.7 1204.4 719.8 1204.2 719.1C1204.1 718.5 1210.9 709.2 1211.3 708.5C1211.7 707.8 1216.8 698.5 1216.6 697.9C1216.5 697.3 1208.4 690.9 1207.8 690.8C1207.1 690.7 1197.8 694.5 1197.2 694.3C1196.5 694.2 1188.8 688.0 1188.3 687.3C1187.8 686.5 1181.8 673.5 1181.2 673.1C1180.7 672.7 1173.0 676.6 1172.4 676.6C1171.8 676.6 1163.9 673.5 1163.5 673.1C1163.2 672.7 1162.1 664.6 1161.8 664.2C1161.5 663.9 1155.2 662.6 1154.7 662.5C1154.2 662.4 1148.0 661.1 1147.6 660.7C1147.2 660.3 1142.2 650.2 1142.3 650.1Z" fill="#5a9130" stroke="#2f3728" stroke-width="1"/>
<path d="M1163.5 673.1L1168.8 643.0M1168.0 674.0L1175.0 632.4M1179.5 671.3L1190.1 650.1M1193.6 690.8L1216.6 655.4M1190.1 692.6L1211.3 658.9M1207.8 719.1L1236.1 678.4M1221.9 722.7L1259.1 687.3M1239.6 708.5L1259.1 696.1M1214.9 726.2L1243.2 697.9M1204.2 694.3L1218.4 666.0M1229.0 678.4L1233.5 653.6M1152.9 660.7L1159.1 641.2M1183.0 669.6L1197.2 639.5" stroke="#3a4a2a" stroke-width="1.3" fill="none" stroke-linecap="round"/>
<path d="M1175.9 701.4C1176.5 700.5 1182.8 698.1 1184.8 697.9C1186.7 697.7 1193.6 700.0 1195.4 699.6C1197.2 699.3 1201.2 695.0 1202.5 694.3C1203.7 693.6 1206.5 692.4 1207.8 692.6C1209.0 692.7 1214.1 694.9 1214.9 696.1C1215.7 697.3 1216.3 703.7 1215.8 705.0C1215.2 706.2 1211.2 708.3 1209.6 708.5C1207.9 708.7 1201.2 706.5 1198.9 706.7C1196.6 706.9 1188.5 710.3 1186.5 710.3C1184.6 710.3 1180.5 707.6 1179.5 706.7C1178.4 705.8 1175.4 702.3 1175.9 701.4Z" fill="#3a6419" stroke="#2f3728" stroke-width="1"/>
<path d="M1144.1 655.4C1144.4 655.0 1150.1 657.3 1151.2 658.1C1152.2 658.8 1155.0 662.1 1154.7 662.5C1154.3 662.8 1148.7 662.3 1147.6 661.6C1146.5 660.9 1143.7 655.8 1144.1 655.4Z" fill="#3a6419" stroke="#2f3728" stroke-width="1"/>
<path d="M1110.4 689.0C1111.8 688.0 1119.0 683.5 1120.2 683.7C1121.3 683.9 1121.0 690.1 1121.9 690.8C1122.9 691.5 1128.7 690.3 1129.9 690.8C1131.2 691.3 1133.1 695.4 1134.3 696.1C1135.6 696.8 1141.3 698.2 1142.3 697.9C1143.3 697.5 1143.0 693.3 1144.1 692.6C1145.1 691.9 1151.7 690.6 1152.9 690.8C1154.2 691.0 1155.4 694.3 1156.5 694.3C1157.5 694.3 1161.8 691.7 1163.5 690.8C1165.3 689.9 1172.2 686.3 1174.2 685.5C1176.1 684.7 1181.9 682.3 1183.0 682.8C1184.1 683.4 1185.1 689.3 1184.8 690.8C1184.4 692.3 1180.7 696.9 1179.5 697.9C1178.2 698.8 1173.5 699.5 1172.4 700.5C1171.3 701.6 1168.5 707.3 1168.8 708.5C1169.2 709.6 1173.8 711.3 1175.9 712.0C1178.1 712.7 1188.1 714.9 1190.1 715.6C1192.0 716.3 1194.5 718.2 1195.4 719.1C1196.3 720.0 1199.3 723.0 1198.9 724.4C1198.6 725.8 1193.1 732.7 1191.9 733.3C1190.6 733.8 1188.7 730.1 1186.5 729.7C1184.4 729.4 1172.9 729.4 1170.6 729.7C1168.3 730.1 1165.0 732.2 1163.5 733.3C1162.1 734.3 1157.2 738.9 1156.5 740.4C1155.8 741.8 1157.3 746.0 1156.5 747.4C1155.6 748.8 1149.2 753.1 1147.6 754.5C1146.0 755.9 1141.8 761.6 1140.5 761.6C1139.3 761.6 1136.3 755.9 1135.2 754.5C1134.2 753.1 1131.5 747.3 1129.9 747.4C1128.3 747.6 1121.1 756.1 1119.3 756.3C1117.5 756.5 1113.8 750.6 1112.2 749.2C1110.6 747.8 1104.8 743.4 1103.4 742.1C1101.9 740.9 1098.8 738.8 1098.1 736.8C1097.3 734.9 1096.5 724.8 1096.3 722.7C1096.1 720.5 1095.8 716.6 1096.3 715.6C1096.8 714.5 1100.5 713.3 1101.6 712.0C1102.7 710.8 1106.7 704.2 1106.9 703.2C1107.1 702.1 1103.4 702.3 1103.4 701.4C1103.4 700.5 1106.2 695.6 1106.9 694.3C1107.6 693.1 1109.1 690.1 1110.4 689.0Z" fill="#34472a" stroke="#2f3728" stroke-width="1"/>
<path d="M1115.8 697.9C1115.9 697.1 1119.8 695.2 1121.1 695.2C1122.3 695.2 1127.0 697.1 1128.1 697.9C1129.3 698.7 1131.9 701.8 1132.6 703.2C1133.3 704.6 1134.6 710.4 1135.2 712.0C1135.8 713.6 1138.2 717.7 1138.8 719.1C1139.3 720.5 1139.9 726.0 1140.5 726.2C1141.2 726.4 1144.2 722.3 1145.0 720.9C1145.7 719.5 1146.9 712.5 1147.6 712.0C1148.3 711.6 1150.8 715.8 1152.0 716.5C1153.3 717.2 1158.0 718.8 1160.0 719.1C1162.0 719.5 1170.3 719.8 1172.4 720.0C1174.5 720.2 1179.5 720.8 1181.2 720.9C1183.0 721.0 1188.5 720.7 1190.1 720.9C1191.7 721.1 1196.6 721.8 1197.2 722.7C1197.7 723.5 1196.1 728.6 1195.4 729.7C1194.7 730.9 1191.0 734.2 1190.1 734.2C1189.2 734.2 1188.5 730.3 1186.5 729.7C1184.6 729.2 1173.1 728.5 1170.6 728.8C1168.1 729.2 1163.4 732.1 1161.8 733.3C1160.2 734.4 1156.5 739.5 1154.7 740.4C1152.9 741.2 1145.8 742.3 1144.1 742.1C1142.3 741.9 1138.4 739.5 1137.0 738.6C1135.6 737.7 1131.0 733.1 1129.9 733.3C1128.8 733.5 1127.1 738.6 1126.4 740.4C1125.7 742.1 1123.9 749.7 1122.8 751.0C1121.8 752.2 1117.0 753.3 1115.8 752.7C1114.5 752.2 1111.7 746.9 1110.4 745.7C1109.2 744.4 1103.7 741.6 1103.4 740.4C1103.0 739.1 1106.0 734.7 1106.9 733.3C1107.8 731.9 1112.4 727.3 1112.2 726.2C1112.0 725.1 1105.0 723.5 1105.1 722.7C1105.3 721.8 1112.7 718.8 1114.0 717.3C1115.2 715.9 1117.0 709.9 1117.5 708.5C1118.1 707.1 1119.5 704.2 1119.3 703.2C1119.1 702.1 1115.6 698.7 1115.8 697.9Z" fill="#151a12" stroke="#2f3728" stroke-width="1"/>
<path d="M1128.1 703.2C1128.4 702.1 1133.8 699.6 1135.2 699.6C1136.6 699.6 1141.2 701.9 1142.3 703.2C1143.4 704.4 1145.8 710.3 1145.8 712.0C1145.8 713.8 1143.0 719.1 1142.3 720.9C1141.6 722.7 1139.5 729.9 1138.8 729.7C1138.1 729.6 1135.8 721.1 1135.2 719.1C1134.6 717.2 1133.3 711.9 1132.6 710.3C1131.9 708.7 1127.9 704.2 1128.1 703.2Z" fill="#34472a" stroke="#2f3728" stroke-width="1"/>
<path d="M1149.4 751.0C1150.4 749.6 1158.2 746.7 1160.0 745.7C1161.8 744.6 1165.5 740.5 1167.1 740.4C1168.7 740.2 1174.5 743.2 1175.9 743.9C1177.3 744.6 1180.9 746.4 1181.2 747.4C1181.6 748.5 1178.8 753.5 1179.5 754.5C1180.2 755.5 1186.0 757.0 1188.3 757.2C1190.6 757.3 1200.5 756.9 1202.5 756.3C1204.4 755.7 1206.4 751.2 1207.8 751.0C1209.2 750.8 1214.2 754.0 1216.6 754.5C1219.1 755.0 1229.9 756.3 1232.6 756.3C1235.2 756.3 1240.5 754.2 1243.2 754.5C1245.8 754.9 1257.5 759.1 1259.1 759.8C1260.7 760.5 1259.8 761.2 1259.1 761.6C1258.4 762.0 1254.3 763.7 1252.0 764.2C1249.7 764.8 1238.1 765.9 1236.1 766.9C1234.2 767.9 1234.0 773.3 1232.6 774.0C1231.2 774.7 1224.1 773.4 1221.9 774.0C1219.8 774.6 1214.5 780.0 1211.3 780.2C1208.1 780.4 1194.0 776.5 1190.1 775.8C1186.2 775.0 1175.2 772.2 1172.4 772.2C1169.6 772.2 1163.5 774.7 1161.8 775.8C1160.0 776.8 1155.8 781.4 1154.7 782.8C1153.6 784.2 1151.9 788.3 1151.2 789.9C1150.4 791.5 1147.6 797.0 1147.6 798.8C1147.6 800.5 1151.5 806.2 1151.2 807.6C1150.8 809.0 1145.1 811.7 1144.1 812.9C1143.0 814.2 1143.0 819.3 1140.5 820.0C1138.1 820.7 1122.3 820.9 1119.3 820.0C1116.3 819.1 1112.2 812.6 1110.4 811.2C1108.7 809.7 1103.2 807.3 1101.6 805.8C1100.0 804.4 1096.3 797.9 1094.5 797.0C1092.7 796.1 1085.1 797.9 1083.9 797.0C1082.7 796.1 1081.1 789.6 1082.1 788.1C1083.2 786.7 1092.6 783.0 1094.5 782.8C1096.5 782.7 1100.2 786.7 1101.6 786.4C1103.0 786.0 1108.3 780.7 1108.7 779.3C1109.0 777.9 1104.6 773.5 1105.1 772.2C1105.7 771.0 1112.0 767.6 1114.0 766.9C1115.9 766.2 1122.3 765.1 1124.6 765.1C1126.9 765.1 1134.7 765.8 1137.0 766.9C1139.3 768.0 1145.8 775.6 1147.6 775.8C1149.4 775.9 1154.4 770.3 1154.7 768.7C1155.0 767.1 1150.8 761.6 1150.3 759.8C1149.7 758.1 1148.4 752.4 1149.4 751.0Z" fill="#34472a" stroke="#2f3728" stroke-width="1"/>
<path d="M1152.9 784.6C1154.2 783.0 1161.6 777.0 1163.5 775.8C1165.5 774.5 1170.6 772.0 1172.4 772.2C1174.2 772.4 1178.9 777.0 1181.2 777.5C1183.5 778.1 1192.4 777.2 1195.4 777.5C1198.4 777.9 1209.6 779.8 1211.3 781.1C1213.0 782.3 1212.9 788.5 1212.2 789.9C1211.5 791.3 1205.8 794.5 1204.2 795.2C1202.7 795.9 1198.8 797.3 1197.2 797.0C1195.6 796.6 1190.8 792.1 1188.3 791.7C1185.8 791.2 1175.2 792.7 1172.4 792.6C1169.6 792.4 1162.1 790.0 1160.0 789.9C1157.9 789.8 1151.9 792.2 1151.2 791.7C1150.4 791.2 1151.7 786.2 1152.9 784.6Z" fill="#151a12" stroke="#2f3728" stroke-width="1"/>
<path d="M1101.6 797.0C1101.8 795.2 1108.7 788.5 1110.4 786.4C1112.2 784.2 1117.7 777.2 1119.3 775.8C1120.9 774.3 1125.0 771.9 1126.4 772.2C1127.8 772.6 1132.2 777.7 1133.5 779.3C1134.7 780.9 1137.3 787.6 1138.8 788.1C1140.2 788.7 1146.7 783.7 1147.6 784.6C1148.5 785.5 1147.3 794.7 1147.6 797.0C1148.0 799.3 1151.5 806.0 1151.2 807.6C1150.8 809.2 1145.5 812.9 1144.1 812.9C1142.7 812.9 1138.4 807.6 1137.0 807.6C1135.6 807.6 1131.3 811.7 1129.9 812.9C1128.5 814.2 1124.2 820.2 1122.8 820.0C1121.4 819.8 1117.2 812.7 1115.8 811.2C1114.3 809.6 1110.1 805.5 1108.7 804.1C1107.3 802.7 1101.4 798.8 1101.6 797.0Z" fill="#151a12" stroke="#2f3728" stroke-width="1"/>
<path d="M1112.2 797.0C1112.4 794.5 1118.1 781.4 1119.3 779.3C1120.5 777.2 1124.2 774.7 1124.6 775.8C1125.0 776.8 1123.5 787.1 1122.8 789.9C1122.1 792.7 1118.6 803.4 1117.5 804.1C1116.5 804.8 1112.0 799.5 1112.2 797.0Z" fill="#34472a" stroke="#2f3728" stroke-width="1"/>
<path d="M1128.1 797.0C1128.1 794.9 1132.6 783.5 1133.5 782.8C1134.3 782.1 1137.0 787.8 1137.0 789.9C1137.0 792.0 1134.3 803.4 1133.5 804.1C1132.6 804.8 1128.1 799.1 1128.1 797.0Z" fill="#34472a" stroke="#2f3728" stroke-width="1"/>
<path d="M1158.2 736.8C1158.9 735.9 1162.3 734.0 1163.5 733.3C1164.8 732.6 1168.3 730.0 1170.6 729.7C1172.9 729.5 1184.4 730.2 1186.5 730.6C1188.7 731.1 1190.6 734.8 1191.9 734.2C1193.1 733.5 1197.5 724.9 1198.9 724.4C1200.4 724.0 1204.4 728.1 1206.0 729.7C1207.6 731.3 1213.6 738.6 1214.9 740.4C1216.1 742.1 1216.8 746.3 1218.4 747.4C1220.0 748.6 1231.0 751.2 1230.8 751.9C1230.6 752.6 1218.9 754.6 1216.6 754.5C1214.3 754.4 1209.2 750.8 1207.8 751.0C1206.4 751.2 1204.4 755.7 1202.5 756.3C1200.5 756.9 1190.6 757.3 1188.3 757.2C1186.0 757.0 1180.2 755.5 1179.5 754.5C1178.8 753.5 1180.6 748.3 1181.2 747.4C1181.9 746.5 1185.8 745.9 1185.7 745.7C1185.5 745.4 1180.4 745.0 1179.5 744.8C1178.5 744.6 1177.2 744.3 1175.9 743.9C1174.7 743.5 1168.7 740.2 1167.1 740.4C1165.5 740.5 1161.1 745.5 1160.0 745.7C1158.9 745.8 1156.6 743.0 1156.5 742.1C1156.3 741.2 1157.5 737.7 1158.2 736.8Z" fill="#65962e" stroke="#2f3728" stroke-width="1"/>
<path d="M1082.1 765.1C1082.7 763.0 1088.0 761.2 1089.2 759.8C1090.4 758.4 1094.2 752.7 1094.5 751.0C1094.9 749.2 1092.4 743.5 1092.7 742.1C1093.1 740.7 1097.0 736.8 1098.1 736.8C1099.1 736.8 1102.5 740.7 1103.4 742.1C1104.2 743.5 1105.8 749.2 1106.9 751.0C1108.0 752.7 1112.2 759.3 1114.0 759.8C1115.8 760.4 1122.7 757.2 1124.6 756.3C1126.5 755.4 1132.2 750.8 1133.5 751.0C1134.7 751.2 1135.9 757.7 1137.0 758.1C1138.1 758.4 1142.7 754.3 1144.1 754.5C1145.5 754.7 1150.1 758.6 1151.2 759.8C1152.2 761.1 1155.0 765.7 1154.7 766.9C1154.3 768.1 1149.4 772.2 1147.6 772.2C1145.8 772.2 1139.1 767.6 1137.0 766.9C1134.9 766.2 1128.5 765.1 1126.4 765.1C1124.2 765.1 1117.5 766.2 1115.8 766.9C1114.0 767.6 1109.7 771.0 1108.7 772.2C1107.6 773.5 1106.5 778.2 1105.1 779.3C1103.7 780.4 1096.6 782.7 1094.5 782.8C1092.4 783.0 1085.1 782.8 1083.9 781.1C1082.7 779.3 1081.6 767.3 1082.1 765.1Z" fill="#65962e" stroke="#2f3728" stroke-width="1"/>
<path d="M1101.6 754.5C1101.9 753.6 1107.8 756.8 1108.7 758.1C1109.6 759.3 1109.7 766.5 1110.4 766.9C1111.2 767.3 1114.5 762.1 1115.8 761.6C1117.0 761.1 1122.5 760.9 1122.8 761.6C1123.2 762.3 1120.4 767.6 1119.3 768.7C1118.2 769.7 1113.6 772.4 1112.2 772.2C1110.8 772.0 1106.2 768.7 1105.1 766.9C1104.1 765.1 1101.2 755.4 1101.6 754.5Z" fill="#34472a" stroke="#2f3728" stroke-width="1"/>
<path d="M1135.2 754.5C1135.4 753.1 1139.3 748.5 1140.5 747.4C1141.8 746.4 1147.1 743.2 1147.6 743.9C1148.1 744.6 1146.7 752.7 1145.8 754.5C1145.0 756.3 1139.8 761.6 1138.8 761.6C1137.7 761.6 1135.0 755.9 1135.2 754.5Z" fill="#34472a" stroke="#2f3728" stroke-width="1"/>
<path d="M1214.9 728.0C1217.0 726.4 1231.7 720.7 1236.1 719.1C1240.5 717.5 1256.8 708.0 1259.1 712.0C1261.4 716.1 1260.7 755.6 1259.1 759.8C1257.5 764.1 1245.8 755.4 1243.2 754.5C1240.5 753.6 1234.9 752.0 1232.6 751.0C1230.3 749.9 1221.9 745.5 1220.2 743.9C1218.4 742.3 1215.4 736.6 1214.9 735.0C1214.3 733.5 1212.7 729.6 1214.9 728.0Z" fill="#151a12" stroke="#2f3728" stroke-width="1"/>
<path d="M1216.6 733.3C1217.0 732.9 1234.7 730.0 1236.1 729.7C1237.5 729.5 1258.3 726.1 1259.1 726.2C1259.9 726.3 1259.8 732.9 1259.1 733.3C1258.5 733.6 1240.8 736.6 1239.6 736.8C1238.5 737.1 1226.3 740.5 1225.5 740.4C1224.7 740.2 1216.3 733.6 1216.6 733.3Z" fill="#34472a" stroke="#2f3728" stroke-width="1"/>
<path d="M1221.9 743.9C1221.9 743.7 1241.9 742.2 1243.2 742.1C1244.4 742.0 1258.6 740.2 1259.1 740.4C1259.6 740.5 1259.6 747.1 1259.1 747.4C1258.6 747.7 1244.4 749.3 1243.2 749.2C1241.9 749.1 1221.9 744.1 1221.9 743.9Z" fill="#34472a" stroke="#2f3728" stroke-width="1"/>
<path d="M1204.2 719.1C1204.6 718.6 1224.1 712.7 1225.5 712.0C1226.9 711.3 1245.6 698.5 1246.7 697.9C1247.8 697.3 1258.7 693.9 1259.1 694.3C1259.5 694.8 1259.9 711.2 1259.1 712.0C1258.3 712.9 1237.6 718.6 1236.1 719.1C1234.6 719.6 1215.9 728.0 1214.9 728.0C1213.8 728.0 1203.9 719.6 1204.2 719.1Z" fill="#5a9130" stroke="#2f3728" stroke-width="1"/>
<path d="M1207.8 724.4L1259.1 699.6M1211.3 719.1L1250.3 690.8" stroke="#3a4a2a" stroke-width="1.2" fill="none" stroke-linecap="round"/>
<path d="M1109.0 667.5C1109.4 667.2 1113.7 670.4 1114.4 670.5C1115.2 670.6 1119.8 669.2 1120.5 669.3C1121.1 669.5 1123.7 673.0 1124.1 672.9C1124.4 672.9 1125.4 668.5 1125.9 668.1C1126.3 667.7 1130.7 667.5 1131.3 666.9C1131.9 666.4 1134.3 660.2 1134.9 659.7C1135.4 659.2 1139.2 659.5 1139.7 659.7C1140.2 659.9 1141.5 661.9 1142.1 662.1C1142.7 662.3 1147.4 663.4 1148.1 663.3C1148.8 663.2 1152.3 660.8 1152.9 660.9C1153.6 661.0 1157.0 664.0 1157.7 664.5C1158.5 665.0 1163.3 667.4 1163.8 668.1C1164.2 668.8 1165.1 674.2 1165.0 675.3C1164.8 676.5 1161.2 684.6 1161.4 685.0C1161.5 685.3 1166.6 680.6 1167.4 680.2C1168.2 679.7 1172.7 679.3 1173.4 678.9C1174.1 678.5 1177.3 674.9 1178.2 674.1C1179.1 673.4 1185.9 668.9 1186.6 668.1C1187.3 667.3 1188.5 662.6 1189.0 662.1C1189.5 661.6 1193.4 660.5 1193.8 660.9C1194.2 661.3 1194.6 667.4 1195.0 668.1C1195.4 668.8 1199.8 671.1 1199.8 671.7C1199.9 672.4 1197.0 676.9 1196.2 677.7C1195.5 678.6 1189.8 684.3 1189.0 685.0C1188.2 685.6 1184.6 687.4 1184.2 687.4C1183.8 687.3 1183.5 684.0 1183.0 683.8C1182.5 683.5 1177.7 683.4 1177.0 683.8C1176.3 684.2 1173.0 689.5 1172.2 689.8C1171.4 690.1 1165.8 688.1 1165.0 688.6C1164.2 689.1 1160.7 696.8 1160.2 697.0C1159.6 697.2 1157.0 692.6 1156.5 692.2C1156.1 691.8 1153.3 690.7 1152.9 691.0C1152.5 691.2 1151.1 695.7 1150.5 695.8C1150.0 695.9 1145.2 692.3 1144.5 692.2C1143.9 692.0 1141.5 693.1 1140.9 693.4C1140.3 693.7 1136.7 696.9 1136.1 697.0C1135.4 697.1 1132.1 695.1 1131.3 694.6C1130.5 694.1 1124.8 690.4 1124.1 689.8C1123.3 689.1 1120.9 685.0 1120.5 685.0C1120.1 685.0 1118.6 689.5 1118.0 689.8C1117.5 690.1 1112.6 690.1 1112.0 689.8C1111.5 689.5 1109.6 685.6 1109.6 685.0C1109.6 684.3 1112.1 680.8 1112.0 680.2C1111.9 679.5 1108.6 676.2 1108.4 675.3C1108.2 674.5 1108.6 667.8 1109.0 667.5Z" fill="#65962e" stroke="#2f3728" stroke-width="1"/>
<path d="M1141.5 650.1C1141.5 649.9 1147.9 654.8 1148.1 654.9C1148.3 655.0 1151.6 656.1 1151.7 656.1C1151.9 656.1 1156.5 655.0 1156.5 654.9C1156.6 654.8 1152.3 648.9 1152.3 648.9C1152.4 648.9 1157.6 653.8 1157.7 653.7C1157.9 653.5 1159.5 640.6 1159.5 640.5C1159.6 640.4 1161.8 647.7 1162.0 647.7C1162.1 647.6 1167.2 639.4 1167.4 639.2C1167.5 639.1 1172.0 638.2 1172.2 638.0C1172.3 637.9 1175.7 629.6 1175.8 629.6C1175.9 629.7 1176.9 640.2 1177.0 640.5C1177.1 640.7 1181.6 644.1 1181.8 644.1C1182.0 644.0 1186.5 638.0 1186.6 638.0C1186.7 638.0 1188.9 644.1 1189.0 644.1C1189.2 644.1 1196.1 637.5 1196.2 637.4C1196.4 637.4 1197.3 642.8 1197.4 642.9C1197.6 642.9 1203.4 639.2 1203.5 639.2C1203.5 639.3 1201.0 645.1 1201.1 645.3C1201.1 645.4 1207.0 647.5 1207.1 647.7C1207.1 647.8 1205.7 654.9 1205.9 654.9C1206.1 654.9 1218.3 645.9 1218.5 645.9C1218.7 645.9 1219.0 654.8 1219.1 654.9C1219.2 654.9 1225.0 648.9 1225.1 648.9C1225.2 648.9 1223.8 656.0 1223.9 656.1C1224.0 656.2 1232.8 652.3 1232.9 652.5C1233.0 652.6 1230.4 664.2 1230.5 664.5C1230.6 664.8 1239.5 668.5 1239.5 668.7C1239.6 668.9 1232.3 676.4 1232.3 676.5C1232.4 676.6 1241.6 674.8 1242.0 674.7C1242.3 674.7 1254.5 672.9 1254.6 672.9C1254.7 673.0 1249.1 677.7 1249.2 677.7C1249.2 677.8 1258.6 675.4 1258.8 675.9C1259.0 676.5 1259.0 710.7 1258.8 711.4C1258.6 712.2 1245.0 719.6 1244.4 719.8C1243.8 720.1 1223.3 728.1 1222.7 728.3C1222.1 728.5 1208.6 730.7 1208.3 730.7C1208.0 730.6 1204.8 726.0 1204.7 725.9C1204.6 725.7 1202.2 720.0 1202.3 719.8C1202.3 719.7 1208.1 715.3 1208.3 715.0C1208.5 714.8 1215.4 704.5 1215.5 704.2C1215.6 703.9 1214.4 697.2 1214.3 697.0C1214.2 696.8 1208.5 693.4 1208.3 693.4C1208.1 693.4 1202.5 697.0 1202.3 697.0C1202.0 697.0 1194.1 692.4 1193.8 692.2C1193.6 692.0 1189.0 685.2 1189.0 685.0C1189.1 684.7 1196.1 678.0 1196.2 677.7C1196.4 677.5 1199.9 671.9 1199.8 671.7C1199.8 671.6 1195.1 668.3 1195.0 668.1C1194.9 667.9 1193.9 661.0 1193.8 660.9C1193.7 660.8 1189.1 662.0 1189.0 662.1C1188.9 662.2 1186.8 667.9 1186.6 668.1C1186.4 668.3 1178.4 674.0 1178.2 674.1C1178.0 674.3 1173.6 678.8 1173.4 678.9C1173.2 679.0 1167.6 680.1 1167.4 680.2C1167.2 680.3 1161.4 685.0 1161.4 685.0C1161.3 684.9 1164.9 675.6 1165.0 675.3C1165.0 675.1 1163.9 668.3 1163.8 668.1C1163.6 667.9 1157.9 664.6 1157.7 664.5C1157.6 664.4 1153.1 660.9 1152.9 660.9C1152.8 660.9 1148.3 663.5 1148.1 663.3C1147.9 663.1 1141.5 650.2 1141.5 650.1Z" fill="#5a9130" stroke="#2f3728" stroke-width="1"/>
<clipPath id="ctuft"><path d="M1141.5 650.1L1148.1 654.9L1151.7 656.1L1156.5 654.9L1152.3 648.9L1157.7 653.7L1159.5 640.5L1162.0 647.7L1167.4 639.2L1172.2 638.0L1175.8 629.6L1177.0 640.5L1181.8 644.1L1186.6 638.0L1189.0 644.1L1196.2 637.4L1197.4 642.9L1203.5 639.2L1201.1 645.3L1207.1 647.7L1205.9 654.9L1218.5 645.9L1219.1 654.9L1225.1 648.9L1223.9 656.1L1232.9 652.5L1230.5 664.5L1239.5 668.7L1232.3 676.5L1242.0 674.7L1254.6 672.9L1249.2 677.7L1258.8 675.9L1258.8 711.4L1244.4 719.8L1222.7 728.3L1208.3 730.7L1204.7 725.9L1202.3 719.8L1208.3 715.0L1215.5 704.2L1214.3 697.0L1208.3 693.4L1202.3 697.0L1193.8 692.2L1189.0 685.0L1196.2 677.7L1199.8 671.7L1195.0 668.1L1193.8 660.9L1189.0 662.1L1186.6 668.1L1178.2 674.1L1173.4 678.9L1167.4 680.2L1161.4 685.0L1165.0 675.3L1163.8 668.1L1157.7 664.5L1152.9 660.9L1148.1 663.3Z"/></clipPath><g clip-path="url(#ctuft)">
<path d="M1179.5 649.4L1181.8 647.8L1185.1 647.4L1183.1 649.1Z" fill="#376b1d"/>
<path d="M1205.0 669.9L1206.0 667.5L1207.7 667.0L1206.7 669.4Z" fill="#376b1d"/>
<path d="M1148.6 675.9L1149.7 674.4L1151.4 674.0L1150.4 675.6Z" fill="#376b1d"/>
<path d="M1192.3 713.0L1193.5 711.1L1195.3 710.7L1194.2 712.6Z" fill="#376b1d"/>
<path d="M1214.0 724.4L1216.1 722.3L1219.2 721.8L1217.4 724.1Z" fill="#376b1d"/>
<path d="M1252.9 639.8L1255.4 637.8L1259.4 637.4L1257.1 639.4Z" fill="#376b1d"/>
<path d="M1160.0 646.9L1161.6 643.9L1164.0 643.3L1162.6 646.3Z" fill="#376b1d"/>
<path d="M1163.4 690.1L1165.6 688.0L1168.9 687.5L1167.0 689.7Z" fill="#376b1d"/>
<path d="M1206.3 641.3L1207.4 639.4L1209.0 639.0L1208.0 640.9Z" fill="#376b1d"/>
<path d="M1220.7 675.8L1222.2 673.3L1224.6 672.8L1223.2 675.3Z" fill="#376b1d"/>
<path d="M1193.8 663.9L1196.4 661.1L1200.1 660.7L1197.9 663.4Z" fill="#376b1d"/>
<path d="M1170.9 689.9L1172.8 686.8L1175.8 686.2L1174.1 689.3Z" fill="#376b1d"/>
<path d="M1224.6 662.3L1227.5 660.7L1231.7 660.3L1229.3 662.0Z" fill="#376b1d"/>
<path d="M1191.4 706.6L1192.6 704.3L1194.6 703.8L1193.5 706.3Z" fill="#376b1d"/>
<path d="M1147.2 698.4L1149.6 695.9L1153.2 695.3L1151.0 698.0Z" fill="#376b1d"/>
<path d="M1241.8 665.1L1244.1 662.6L1247.6 662.1L1245.6 664.6Z" fill="#376b1d"/>
<path d="M1208.0 678.8L1210.7 675.6L1214.5 675.0L1212.2 678.2Z" fill="#376b1d"/>
<path d="M1197.9 698.2L1199.0 695.3L1200.7 694.8L1199.7 697.6Z" fill="#376b1d"/>
<path d="M1215.7 728.6L1218.3 726.6L1222.1 726.2L1219.8 728.3Z" fill="#376b1d"/>
<path d="M1188.1 698.3L1189.1 696.0L1190.6 695.5L1189.7 697.8Z" fill="#376b1d"/>
<path d="M1163.4 646.8L1164.5 643.9L1166.0 643.3L1165.1 646.3Z" fill="#376b1d"/>
<path d="M1158.2 659.2L1159.9 656.1L1162.4 655.5L1161.0 658.6Z" fill="#376b1d"/>
<path d="M1152.3 678.1L1154.4 675.0L1157.4 674.4L1155.6 677.5Z" fill="#376b1d"/>
<path d="M1236.5 716.6L1238.0 714.4L1240.3 714.0L1238.9 716.2Z" fill="#376b1d"/>
<path d="M1182.8 718.3L1185.5 716.5L1189.7 716.2L1187.3 717.9Z" fill="#376b1d"/>
<path d="M1163.9 657.4L1165.3 655.0L1167.4 654.5L1166.2 656.9Z" fill="#376b1d"/>
<path d="M1211.2 660.2L1212.1 658.0L1213.6 657.5L1212.7 659.8Z" fill="#376b1d"/>
<path d="M1184.0 688.9L1186.7 686.2L1190.9 685.7L1188.5 688.5Z" fill="#376b1d"/>
<path d="M1201.2 693.1L1203.5 691.6L1206.8 691.3L1204.9 692.9Z" fill="#376b1d"/>
<path d="M1244.1 709.1L1246.8 706.1L1250.7 705.5L1248.5 708.5Z" fill="#376b1d"/>
<path d="M1188.7 673.2L1189.7 670.5L1191.5 670.0L1190.5 672.7Z" fill="#376b1d"/>
<path d="M1151.0 641.7L1152.5 639.8L1154.5 639.5L1153.3 641.3Z" fill="#376b1d"/>
<path d="M1183.0 640.2L1184.0 638.5L1185.4 638.2L1184.6 639.8Z" fill="#376b1d"/>
<path d="M1155.9 670.2L1156.9 667.0L1158.5 666.3L1157.6 669.4Z" fill="#376b1d"/>
<path d="M1213.3 649.5L1214.8 647.3L1216.9 646.9L1215.7 649.0Z" fill="#376b1d"/>
<path d="M1183.6 647.7L1186.3 644.3L1190.1 643.6L1187.8 646.9Z" fill="#376b1d"/>
<path d="M1197.0 680.6L1198.2 679.1L1199.8 678.7L1198.9 680.3Z" fill="#376b1d"/>
<path d="M1181.3 660.2L1183.8 658.4L1187.7 658.0L1185.4 659.8Z" fill="#376b1d"/>
<path d="M1145.8 724.5L1147.9 722.9L1150.8 722.5L1149.1 724.2Z" fill="#376b1d"/>
<path d="M1204.7 638.6L1206.6 635.3L1209.6 634.7L1207.9 637.9Z" fill="#376b1d"/>
<path d="M1241.5 700.8L1242.9 698.7L1245.2 698.3L1243.9 700.4Z" fill="#376b1d"/>
<path d="M1162.1 708.3L1164.1 705.4L1167.1 704.8L1165.3 707.7Z" fill="#376b1d"/>
<path d="M1179.9 657.1L1182.4 653.7L1186.1 653.1L1184.0 656.3Z" fill="#376b1d"/>
<path d="M1238.9 711.5L1241.5 708.7L1245.3 708.1L1243.0 710.9Z" fill="#376b1d"/>
<path d="M1169.3 683.8L1171.0 682.3L1173.4 682.0L1171.9 683.4Z" fill="#376b1d"/>
<path d="M1147.0 662.0L1148.5 659.2L1150.6 658.7L1149.4 661.5Z" fill="#376b1d"/>
<path d="M1250.4 678.1L1253.1 674.7L1257.4 674.0L1254.9 677.4Z" fill="#376b1d"/>
<path d="M1251.9 669.6L1253.4 667.8L1255.4 667.3L1254.2 669.2Z" fill="#376b1d"/>
<path d="M1165.2 655.2L1167.4 652.0L1170.6 651.4L1168.8 654.5Z" fill="#376b1d"/>
<path d="M1238.0 680.9L1240.2 678.0L1243.5 677.4L1241.6 680.3Z" fill="#376b1d"/>
<path d="M1151.8 698.0L1154.6 694.9L1158.7 694.3L1156.3 697.4Z" fill="#376b1d"/>
<path d="M1229.0 680.8L1230.2 677.9L1232.2 677.3L1231.0 680.2Z" fill="#376b1d"/>
<path d="M1179.8 710.7L1182.6 708.4L1186.9 708.1L1184.3 710.2Z" fill="#376b1d"/>
<path d="M1188.2 724.2L1190.5 722.4L1194.1 722.0L1192.0 723.8Z" fill="#376b1d"/>
<path d="M1156.7 650.1L1159.4 647.1L1163.5 646.5L1161.1 649.5Z" fill="#376b1d"/>
<path d="M1158.7 713.4L1161.5 710.6L1165.8 710.1L1163.3 712.8Z" fill="#376b1d"/>
<path d="M1183.8 686.6L1185.1 685.2L1186.9 684.8L1185.8 686.4Z" fill="#376b1d"/>
<path d="M1253.0 697.0L1255.1 693.7L1258.0 693.1L1256.3 696.4Z" fill="#376b1d"/>
<path d="M1191.5 717.2L1194.1 715.3L1197.9 714.9L1195.8 716.8Z" fill="#376b1d"/>
<path d="M1172.4 663.2L1173.9 660.7L1176.0 660.2L1174.7 662.7Z" fill="#376b1d"/>
<path d="M1173.5 675.3L1174.7 672.2L1176.5 671.5L1175.5 674.7Z" fill="#376b1d"/>
<path d="M1183.1 679.1L1185.2 675.8L1188.3 675.2L1186.5 678.3Z" fill="#376b1d"/>
<path d="M1190.8 721.8L1192.8 719.4L1195.6 718.8L1194.0 721.3Z" fill="#376b1d"/>
<path d="M1202.6 637.1L1204.4 635.3L1207.2 634.9L1205.6 636.7Z" fill="#376b1d"/>
<path d="M1144.5 710.6L1145.8 708.3L1147.8 707.8L1146.7 710.1Z" fill="#376b1d"/>
<path d="M1225.7 687.8L1227.3 685.4L1229.7 685.0L1228.4 687.4Z" fill="#376b1d"/>
<path d="M1207.1 709.3L1208.3 706.7L1210.0 706.3L1209.0 708.8Z" fill="#376b1d"/>
<path d="M1170.7 661.6L1173.1 659.2L1176.9 658.7L1174.7 661.1Z" fill="#376b1d"/>
<path d="M1205.9 706.9L1208.5 704.6L1212.6 704.1L1210.3 706.5Z" fill="#376b1d"/>
<path d="M1212.6 683.3L1214.5 680.5L1217.4 679.9L1215.7 682.7Z" fill="#376b1d"/>
<path d="M1194.6 686.0L1196.4 682.8L1199.2 682.2L1197.6 685.4Z" fill="#376b1d"/>
<path d="M1221.3 717.7L1224.0 715.8L1228.2 715.3L1225.8 717.3Z" fill="#376b1d"/>
<path d="M1205.7 723.8L1208.4 722.1L1212.2 721.8L1210.0 723.5Z" fill="#376b1d"/>
<path d="M1158.1 676.9L1159.2 675.0L1160.9 674.6L1159.9 676.5Z" fill="#376b1d"/>
<path d="M1150.9 698.8L1153.4 695.7L1157.0 695.1L1154.9 698.2Z" fill="#376b1d"/>
<path d="M1160.4 702.5L1162.7 700.7L1165.9 700.5L1164.0 702.2Z" fill="#376b1d"/>
<path d="M1243.8 726.8L1245.2 723.6L1247.2 723.0L1246.0 726.2Z" fill="#376b1d"/>
<path d="M1187.2 681.7L1190.0 678.6L1194.3 678.0L1191.8 681.1Z" fill="#376b1d"/>
<path d="M1161.5 675.9L1163.5 673.9L1166.4 673.4L1164.7 675.6Z" fill="#376b1d"/>
<path d="M1165.0 665.1L1167.2 663.5L1170.7 663.3L1168.7 664.8Z" fill="#376b1d"/>
<path d="M1207.1 676.8L1208.2 674.7L1209.6 674.3L1208.8 676.4Z" fill="#376b1d"/>
<path d="M1214.9 684.1L1216.0 680.9L1217.7 680.2L1216.7 683.5Z" fill="#376b1d"/>
<path d="M1233.4 726.6L1234.6 724.7L1236.3 724.3L1235.3 726.2Z" fill="#376b1d"/>
<path d="M1148.4 708.4L1149.8 706.7L1152.1 706.4L1150.8 708.1Z" fill="#376b1d"/>
<path d="M1190.3 720.9L1192.9 719.0L1196.6 718.6L1194.4 720.6Z" fill="#376b1d"/>
<path d="M1160.0 722.1L1162.1 719.2L1165.2 718.8L1163.4 721.5Z" fill="#376b1d"/>
<path d="M1152.9 640.9L1155.2 638.6L1158.7 638.3L1156.7 640.6Z" fill="#376b1d"/>
<path d="M1151.1 723.9L1153.4 720.9L1156.7 720.5L1154.7 723.3Z" fill="#376b1d"/>
<path d="M1153.8 716.4L1154.9 713.2L1156.5 712.6L1155.6 715.8Z" fill="#376b1d"/>
<path d="M1194.4 667.9L1196.5 664.6L1199.6 664.0L1197.8 667.3Z" fill="#376b1d"/>
<path d="M1173.5 647.5L1175.5 645.6L1178.4 645.3L1176.8 647.2Z" fill="#376b1d"/>
<path d="M1156.8 650.6L1157.9 648.6L1159.4 648.3L1158.5 650.1Z" fill="#376b1d"/>
<path d="M1178.0 664.0L1180.4 662.1L1184.0 661.6L1181.9 663.7Z" fill="#376b1d"/>
<path d="M1200.2 651.9L1201.9 650.4L1204.3 650.1L1202.9 651.5Z" fill="#376b1d"/>
<path d="M1171.1 637.1L1173.4 634.7L1177.0 634.1L1174.9 636.6Z" fill="#376b1d"/>
<path d="M1163.6 679.8L1166.4 678.1L1170.6 677.9L1168.2 679.4Z" fill="#376b1d"/>
<path d="M1235.9 676.5L1237.9 673.4L1240.8 672.8L1239.1 675.9Z" fill="#376b1d"/>
<path d="M1187.3 683.6L1189.6 680.3L1193.0 679.7L1191.1 683.0Z" fill="#376b1d"/>
<path d="M1181.6 713.8L1183.8 711.2L1187.3 710.7L1185.3 713.4Z" fill="#376b1d"/>
<path d="M1190.1 667.9L1191.2 666.2L1192.9 665.8L1191.9 667.5Z" fill="#376b1d"/>
<path d="M1151.8 704.8L1153.3 703.1L1155.6 702.8L1154.3 704.5Z" fill="#376b1d"/>
<path d="M1152.0 714.8L1154.6 712.0L1158.6 711.4L1156.3 714.2Z" fill="#376b1d"/>
<path d="M1175.7 658.4L1177.2 656.0L1179.5 655.5L1178.2 657.9Z" fill="#376b1d"/>
<path d="M1161.7 677.9L1163.2 674.6L1165.3 674.0L1164.1 677.3Z" fill="#376b1d"/>
<path d="M1253.9 687.4L1255.3 684.1L1257.5 683.5L1256.3 686.8Z" fill="#376b1d"/>
<path d="M1179.5 669.0L1180.5 666.8L1181.9 666.3L1181.1 668.6Z" fill="#376b1d"/>
<path d="M1197.7 682.8L1199.0 680.4L1201.1 679.9L1199.8 682.3Z" fill="#376b1d"/>
<path d="M1144.9 660.3L1146.0 658.1L1147.6 657.7L1146.7 659.9Z" fill="#376b1d"/>
<path d="M1148.5 637.4L1150.0 635.6L1152.3 635.3L1151.0 637.1Z" fill="#376b1d"/>
<path d="M1208.9 685.4L1211.3 682.8L1214.9 682.2L1212.8 685.0Z" fill="#376b1d"/>
<path d="M1224.5 717.9L1226.2 715.9L1228.8 715.5L1227.3 717.6Z" fill="#376b1d"/>
<path d="M1254.1 649.8L1256.5 647.1L1260.0 646.6L1258.0 649.2Z" fill="#376b1d"/>
<path d="M1147.3 714.2L1150.0 711.5L1154.0 710.9L1151.7 713.6Z" fill="#376b1d"/>
<path d="M1227.2 711.9L1228.4 709.4L1230.3 708.9L1229.2 711.4Z" fill="#376b1d"/>
<path d="M1199.6 714.3L1202.1 711.3L1205.9 710.7L1203.7 713.7Z" fill="#376b1d"/>
<path d="M1208.9 719.6L1211.2 716.8L1214.6 716.2L1212.6 719.0Z" fill="#376b1d"/>
<path d="M1170.1 638.4L1171.5 636.2L1173.3 635.9L1172.2 638.0Z" fill="#376b1d"/>
<path d="M1155.0 714.2L1157.0 711.5L1160.2 711.1L1158.3 713.7Z" fill="#376b1d"/>
<path d="M1214.2 699.0L1216.1 697.6L1218.9 697.2L1217.3 698.8Z" fill="#376b1d"/>
<path d="M1233.5 705.9L1235.5 703.4L1238.3 702.9L1236.7 705.4Z" fill="#376b1d"/>
<path d="M1217.3 641.7L1219.7 639.7L1223.2 639.2L1221.1 641.2Z" fill="#376b1d"/>
<path d="M1151.1 660.3L1153.5 658.4L1157.1 658.0L1155.0 659.9Z" fill="#376b1d"/>
<path d="M1227.0 727.1L1228.8 724.9L1231.7 724.4L1230.0 726.7Z" fill="#376b1d"/>
<path d="M1196.8 699.9L1199.2 697.2L1203.0 696.8L1200.8 699.4Z" fill="#376b1d"/>
<path d="M1216.8 642.6L1218.1 640.7L1219.9 640.3L1218.9 642.3Z" fill="#376b1d"/>
<path d="M1227.2 663.8L1229.2 662.2L1232.3 662.0L1230.5 663.4Z" fill="#376b1d"/>
<path d="M1149.8 661.0L1152.0 658.3L1155.3 657.7L1153.4 660.5Z" fill="#376b1d"/>
<path d="M1219.7 662.9L1221.6 660.5L1224.5 660.1L1222.8 662.5Z" fill="#376b1d"/>
<path d="M1195.0 646.5L1197.8 644.7L1201.8 644.3L1199.5 646.1Z" fill="#376b1d"/>
<path d="M1255.1 723.5L1256.0 721.2L1257.6 720.7L1256.8 723.0Z" fill="#376b1d"/>
</g>
<path d="M1163.8 647.7C1163.7 647.7 1165.4 658.7 1165.6 659.7C1165.7 660.7 1169.1 676.5 1169.2 676.5C1169.2 676.5 1167.5 660.7 1167.4 659.7C1167.2 658.7 1163.8 647.7 1163.8 647.7Z" fill="#4a5138" stroke="#2f3728" stroke-width="1"/>
<path d="M1170.4 644.1C1170.3 644.1 1172.1 658.6 1172.2 659.7C1172.3 660.8 1172.7 677.7 1172.8 677.7C1172.8 677.7 1174.1 660.8 1174.0 659.7C1173.9 658.6 1170.4 644.1 1170.4 644.1Z" fill="#4a5138" stroke="#2f3728" stroke-width="1"/>
<path d="M1177.0 674.1C1177.0 674.1 1182.6 662.8 1183.0 662.1C1183.4 661.4 1189.6 651.8 1189.6 651.9C1189.7 652.0 1184.6 663.8 1184.2 664.5C1183.8 665.3 1177.0 674.2 1177.0 674.1Z" fill="#4a5138" stroke="#2f3728" stroke-width="1"/>
<path d="M1191.4 694.6C1191.3 694.5 1203.7 674.3 1204.7 672.9C1205.6 671.6 1219.6 654.2 1219.7 654.3C1219.8 654.4 1208.0 675.2 1207.1 676.5C1206.1 677.9 1191.5 694.7 1191.4 694.6Z" fill="#4a5138" stroke="#2f3728" stroke-width="1"/>
<path d="M1196.2 697.0C1196.2 696.9 1207.4 677.8 1208.3 676.5C1209.1 675.3 1220.8 659.6 1220.9 659.7C1221.0 659.8 1211.5 678.9 1210.7 680.2C1209.9 681.4 1196.3 697.1 1196.2 697.0Z" fill="#4a5138" stroke="#2f3728" stroke-width="1"/>
<path d="M1207.7 693.4C1207.6 693.3 1211.6 686.6 1211.9 686.2C1212.2 685.7 1216.0 679.5 1216.1 679.5C1216.2 679.6 1214.0 688.1 1213.7 688.6C1213.4 689.0 1207.7 693.5 1207.7 693.4Z" fill="#4a5138" stroke="#2f3728" stroke-width="1"/>
<path d="M1204.7 719.8C1204.6 719.7 1218.1 705.2 1219.1 704.2C1220.1 703.3 1234.1 691.5 1234.1 691.6C1234.2 691.7 1221.3 706.9 1220.3 707.8C1219.3 708.8 1204.7 720.0 1204.7 719.8Z" fill="#4a5138" stroke="#2f3728" stroke-width="1"/>
<path d="M1205.9 725.9C1205.7 725.7 1224.9 705.6 1226.3 704.2C1227.7 702.8 1248.5 684.8 1248.6 685.0C1248.7 685.1 1231.3 706.5 1229.9 707.8C1228.5 709.2 1206.0 726.0 1205.9 725.9Z" fill="#4a5138" stroke="#2f3728" stroke-width="1"/>
<path d="M1227.5 697.0C1227.5 696.9 1242.1 692.4 1243.2 692.2C1244.2 692.0 1258.8 690.3 1258.8 690.4C1258.8 690.5 1245.4 695.0 1244.4 695.2C1243.3 695.4 1227.6 697.1 1227.5 697.0Z" fill="#4a5138" stroke="#2f3728" stroke-width="1"/>
<path d="M1241.4 716.2C1241.3 716.2 1243.6 705.0 1243.8 704.2C1243.9 703.4 1246.1 693.3 1246.2 693.4C1246.2 693.5 1245.1 705.9 1245.0 706.6C1244.8 707.4 1241.4 716.3 1241.4 716.2Z" fill="#4a5138" stroke="#2f3728" stroke-width="1"/>
<path d="M1242.0 728.3C1241.9 728.2 1249.8 722.6 1250.4 722.3C1250.9 721.9 1258.8 718.0 1258.8 718.0C1258.8 718.1 1252.1 724.3 1251.6 724.7C1251.0 725.0 1242.0 728.4 1242.0 728.3Z" fill="#4a5138" stroke="#2f3728" stroke-width="1"/>
<path d="M1173.4 703.0C1173.3 702.3 1177.3 699.6 1178.2 699.4C1179.1 699.2 1183.3 700.8 1184.2 700.6C1185.1 700.4 1188.0 697.2 1189.0 697.0C1190.0 696.8 1195.1 698.5 1196.2 698.2C1197.3 697.9 1201.3 693.7 1202.3 693.4C1203.3 693.1 1207.3 694.3 1208.3 694.6C1209.3 694.9 1213.7 696.2 1214.3 697.0C1214.9 697.8 1216.0 703.4 1215.5 704.2C1215.0 705.0 1209.3 706.2 1208.3 706.6C1207.3 707.0 1204.3 708.9 1203.5 709.0C1202.7 709.1 1199.4 707.7 1198.6 707.8C1197.8 707.9 1194.6 710.3 1193.8 710.2C1193.0 710.1 1189.8 706.6 1189.0 706.6C1188.2 706.6 1185.0 710.1 1184.2 710.2C1183.4 710.3 1180.3 708.4 1179.4 707.8C1178.5 707.2 1173.5 703.7 1173.4 703.0Z" fill="#3a6419" stroke="#2f3728" stroke-width="1"/>
<path d="M1148.1 656.1C1148.5 655.6 1152.2 654.7 1152.9 654.9C1153.6 655.1 1156.6 657.9 1156.5 658.5C1156.4 659.1 1152.4 661.9 1151.7 662.1C1151.1 662.3 1149.0 661.4 1148.7 660.9C1148.4 660.4 1147.8 656.6 1148.1 656.1Z" fill="#3a6419" stroke="#2f3728" stroke-width="1"/>
<path d="M1167.4 711.4C1167.5 710.9 1172.6 708.9 1173.4 709.0C1174.2 709.1 1177.1 712.1 1177.0 712.6C1176.9 713.1 1173.0 715.1 1172.2 715.0C1171.4 714.9 1167.3 711.9 1167.4 711.4Z" fill="#3a6419" stroke="#2f3728" stroke-width="1"/>
<path d="M1222.7 728.3C1223.7 727.7 1243.2 720.4 1244.4 719.8C1245.6 719.3 1258.3 710.1 1258.8 711.4C1259.3 712.8 1259.7 758.4 1258.8 760.0C1257.9 761.7 1233.6 760.7 1232.3 760.0C1231.0 759.4 1220.9 741.1 1220.3 740.3C1219.7 739.5 1214.2 735.9 1214.3 735.5C1214.4 735.1 1221.7 728.8 1222.7 728.3Z" fill="#151a12" stroke="#2f3728" stroke-width="1"/>
<path d="M1214.3 735.5C1214.7 735.2 1230.8 733.3 1232.3 733.1C1233.8 732.8 1257.9 728.3 1258.8 728.3C1259.7 728.3 1259.5 732.8 1258.8 733.1C1258.1 733.4 1239.6 737.7 1238.3 737.9C1237.1 738.1 1221.1 740.4 1220.3 740.3C1219.5 740.2 1213.9 735.7 1214.3 735.5Z" fill="#34472a" stroke="#2f3728" stroke-width="1"/>
<path d="M1220.3 742.7C1220.5 742.5 1237.1 741.7 1238.3 741.5C1239.6 741.3 1258.1 737.9 1258.8 737.9C1259.5 737.9 1259.7 742.4 1258.8 742.7C1257.9 743.0 1233.6 747.5 1232.3 747.5C1231.0 747.5 1220.1 742.9 1220.3 742.7Z" fill="#34472a" stroke="#2f3728" stroke-width="1"/>
<path d="M1242.0 728.3C1242.4 727.9 1258.2 721.2 1258.8 721.1C1259.4 720.9 1259.3 724.3 1258.8 724.7C1258.3 725.0 1244.9 731.8 1244.4 731.9C1243.8 732.0 1241.5 728.6 1242.0 728.3Z" fill="#34472a" stroke="#2f3728" stroke-width="1"/>
<path d="M1243.2 728.3C1243.6 727.9 1258.3 720.1 1258.8 719.8C1259.3 719.6 1259.2 721.9 1258.8 722.3C1258.4 722.6 1246.1 729.9 1245.6 730.1C1245.0 730.3 1242.7 728.6 1243.2 728.3Z" fill="#5a9130" stroke="#2f3728" stroke-width="1"/>
<clipPath id="c6"><path d="M970.0 806.5L981.3 800.9L991.2 808.0L1002.6 799.5L1012.5 806.5L1023.8 798.1L1035.1 805.1L1046.5 796.6L1057.8 803.7L1069.1 795.2L1080.4 803.7L1091.8 796.6L1103.1 805.1L1114.4 798.1L1125.8 806.5L1137.1 799.5L1148.4 806.5L1159.7 800.9L1171.1 808.0L1182.4 802.3L1196.5 806.5L1210.0 802.3L1210.0 839.1L1196.5 844.8L1182.4 839.1L1171.1 846.2L1159.7 840.5L1148.4 847.6L1137.1 841.9L1125.8 849.0L1114.4 843.4L1103.1 850.4L1091.8 844.8L1080.4 851.9L1069.1 846.2L1057.8 853.3L1046.5 847.6L1035.1 854.7L1023.8 849.0L1012.5 856.1L1002.6 850.4L991.2 857.5L981.3 851.9L970.0 857.5Z"/></clipPath><g clip-path="url(#c6)">
<path d="M970.0 867.4C970.8 863.8 975.9 863.6 978.5 863.2C981.0 862.8 992.4 863.8 995.5 863.2C998.6 862.6 1007.9 859.9 1009.6 857.5C1011.3 855.1 1012.1 842.4 1012.5 839.1C1012.9 835.9 1013.2 826.9 1013.9 825.0C1014.6 823.0 1018.3 819.3 1019.6 819.3C1020.8 819.3 1025.5 823.5 1026.6 825.0C1027.8 826.4 1029.9 832.9 1030.9 833.5C1031.9 834.0 1034.6 833.2 1036.5 830.6C1038.5 828.1 1047.7 811.1 1050.7 808.0C1053.7 804.8 1063.3 801.3 1066.3 799.5C1069.3 797.6 1078.7 792.1 1080.4 789.6C1082.1 787.0 1083.4 776.3 1083.3 774.0C1083.1 771.6 1078.3 767.5 1079.0 766.2C1079.7 764.9 1089.1 762.5 1090.4 761.2C1091.6 760.0 1091.1 754.7 1091.8 753.5C1092.5 752.2 1097.3 749.4 1097.4 748.5C1097.6 747.6 1093.5 745.1 1093.2 744.2C1092.9 743.4 1082.9 740.4 1094.6 740.0C1106.3 739.6 1198.5 734.8 1210.0 740.0C1221.5 745.2 1211.1 786.0 1210.0 791.7C1208.9 797.3 1201.7 796.6 1199.4 796.6C1197.0 796.7 1189.0 792.7 1186.6 792.4C1184.2 792.1 1177.4 793.8 1175.3 793.8C1173.2 793.8 1167.7 792.4 1165.4 792.4C1163.1 792.4 1154.5 793.4 1152.7 793.8C1150.8 794.2 1147.1 795.9 1147.0 796.6C1146.8 797.3 1151.4 800.0 1151.2 800.9C1151.1 801.7 1145.4 804.1 1145.6 805.1C1145.7 806.1 1153.2 809.9 1152.7 810.8C1152.1 811.6 1141.5 812.8 1139.9 813.6C1138.4 814.5 1138.5 818.7 1137.1 819.3C1135.7 819.9 1127.3 819.9 1125.8 819.3C1124.2 818.7 1122.1 813.3 1121.5 813.6C1120.9 813.9 1120.8 820.4 1120.1 822.1C1119.4 823.8 1115.7 829.2 1114.4 830.6C1113.2 832.0 1109.0 835.2 1107.3 836.3C1105.6 837.4 1098.7 840.5 1097.4 841.9C1096.2 843.4 1095.7 849.2 1094.6 850.4C1093.5 851.7 1088.2 854.4 1086.1 854.7C1084.0 855.0 1075.3 853.0 1073.4 853.3C1071.4 853.6 1067.0 856.2 1066.3 857.5C1065.6 858.8 1066.6 864.5 1066.3 866.0C1066.0 867.6 1063.5 872.1 1063.5 873.1C1063.5 874.1 1066.6 874.9 1066.3 875.9C1066.0 876.9 1064.6 882.3 1060.6 883.0C1056.7 883.7 1029.9 882.3 1026.6 883.0C1023.4 883.7 1027.5 888.7 1028.1 890.1C1028.6 891.5 1032.4 896.2 1032.3 897.2C1032.2 898.2 1032.9 899.7 1026.6 900.0C1020.4 900.3 975.7 903.3 970.0 900.0C964.3 896.7 969.2 871.1 970.0 867.4Z" fill="#65962e" stroke="#2f3728" stroke-width="1"/>
<path d="M970.0 858.9C970.4 858.2 978.3 853.8 978.5 853.3C978.7 852.8 974.1 849.3 974.2 849.0C974.4 848.7 981.1 848.2 981.3 847.6C981.5 847.0 978.4 838.5 978.5 837.7C978.6 836.8 984.2 831.5 984.2 830.6C984.2 829.7 978.3 819.9 978.5 820.0C978.7 820.1 987.5 832.5 988.4 833.5C989.3 834.4 996.2 839.3 996.9 839.1C997.6 839.0 1002.6 831.6 1002.6 830.6C1002.5 829.6 995.4 818.7 995.5 818.6C995.6 818.4 1003.3 827.5 1004.0 827.8C1004.7 828.0 1009.2 824.1 1009.6 823.5C1010.1 823.0 1012.1 817.8 1012.5 817.2C1012.8 816.5 1016.7 811.4 1016.7 810.8C1016.7 810.2 1012.3 804.6 1012.5 804.4C1012.7 804.3 1020.3 808.0 1021.0 808.0C1021.7 808.0 1025.9 804.7 1026.6 804.4C1027.4 804.1 1036.1 802.8 1036.5 802.3C1037.0 801.8 1034.8 794.8 1035.1 794.5C1035.4 794.2 1041.6 796.6 1042.2 796.6C1042.8 796.7 1046.7 795.6 1047.2 795.2C1047.6 794.8 1050.6 788.8 1050.7 788.1C1050.8 787.5 1049.1 782.9 1049.3 782.5C1049.5 782.1 1054.4 779.6 1055.0 779.6C1055.5 779.6 1060.3 782.7 1060.6 782.5C1061.0 782.3 1062.1 776.7 1062.0 776.1C1061.9 775.5 1058.7 771.0 1058.5 770.4C1058.3 769.8 1057.5 764.6 1057.8 764.1C1058.1 763.5 1064.0 760.0 1064.9 759.8C1065.7 759.7 1074.1 760.9 1074.8 761.2C1075.5 761.6 1078.6 765.6 1079.0 766.2C1079.5 766.8 1083.1 773.2 1083.3 774.0C1083.5 774.8 1083.4 781.7 1083.3 782.5C1083.1 783.3 1081.0 789.1 1080.4 789.6C1079.9 790.1 1072.7 791.9 1071.9 792.4C1071.2 792.9 1066.8 798.9 1066.3 799.5C1065.7 800.0 1061.2 803.4 1060.6 803.7C1060.1 804.1 1055.5 806.3 1055.0 806.5C1054.5 806.8 1050.8 807.5 1050.7 808.0C1050.6 808.5 1051.6 815.9 1052.1 816.5C1052.6 817.0 1060.1 818.7 1060.6 819.3C1061.2 819.9 1063.5 826.9 1063.5 827.8C1063.5 828.6 1061.1 835.9 1060.6 836.3C1060.1 836.7 1054.2 836.6 1053.5 836.3C1052.9 836.0 1048.2 831.3 1047.9 830.6C1047.5 829.9 1046.8 822.7 1046.5 822.1C1046.1 821.6 1041.4 819.3 1040.8 819.3C1040.2 819.3 1035.3 821.6 1035.1 822.1C1034.9 822.7 1036.8 830.1 1036.5 830.6C1036.3 831.2 1031.4 833.7 1030.9 833.5C1030.4 833.2 1027.2 825.7 1026.6 825.0C1026.1 824.2 1020.2 819.3 1019.6 819.3C1018.9 819.3 1014.3 824.1 1013.9 825.0C1013.5 825.8 1011.1 835.2 1011.1 836.3C1011.0 837.4 1012.5 846.5 1012.5 847.6C1012.4 848.7 1010.1 856.8 1009.6 857.5C1009.2 858.2 1003.3 861.5 1002.6 861.8C1001.9 862.1 996.3 863.0 995.5 863.2C994.7 863.3 987.8 864.6 987.0 864.6C986.1 864.6 979.2 863.0 978.5 863.2C977.8 863.3 973.3 867.2 972.8 867.4C972.4 867.6 970.1 867.9 970.0 867.4C969.9 867.0 969.6 859.6 970.0 858.9Z" fill="#4b4f3c" stroke="#2f3728" stroke-width="1"/>
<path d="M1026.6 883.0C1027.3 882.2 1033.7 881.2 1035.1 881.6C1036.5 882.0 1039.4 886.5 1040.8 887.3C1042.2 888.0 1047.9 889.0 1049.3 888.7C1050.7 888.4 1053.8 885.0 1055.0 884.4C1056.1 883.9 1060.9 882.4 1060.6 883.0C1060.3 883.6 1053.8 889.0 1052.1 890.1C1050.4 891.2 1045.3 894.1 1043.6 894.3C1041.9 894.6 1036.7 893.3 1035.1 892.9C1033.6 892.5 1028.9 891.1 1028.1 890.1C1027.2 889.1 1025.9 883.9 1026.6 883.0Z" fill="#4b4f3c" stroke="#2f3728" stroke-width="1"/>
<path d="M1016.7 847.6C1017.4 845.9 1020.7 840.8 1021.0 839.1C1021.3 837.4 1019.1 831.8 1019.6 830.6C1020.0 829.5 1024.2 827.2 1025.2 827.8C1026.2 828.4 1028.3 835.9 1029.5 836.3C1030.6 836.7 1036.0 833.5 1036.5 832.0C1037.1 830.6 1034.7 823.5 1035.1 822.1C1035.6 820.8 1039.7 818.6 1040.8 818.6C1041.9 818.6 1045.8 820.9 1046.5 822.1C1047.2 823.3 1047.2 829.2 1047.9 830.6C1048.6 832.0 1052.3 835.7 1053.5 836.3C1054.8 836.8 1059.3 836.0 1060.6 836.3C1061.9 836.6 1065.2 838.3 1066.3 839.1C1067.4 840.0 1070.5 843.8 1071.9 844.8C1073.4 845.8 1078.7 849.0 1080.4 849.0C1082.1 849.0 1087.2 845.5 1088.9 844.8C1090.6 844.1 1096.9 841.4 1097.4 841.9C1098.0 842.5 1095.7 849.2 1094.6 850.4C1093.5 851.7 1088.2 854.4 1086.1 854.7C1084.0 855.0 1075.3 853.0 1073.4 853.3C1071.4 853.6 1067.0 856.2 1066.3 857.5C1065.6 858.8 1066.6 864.5 1066.3 866.0C1066.0 867.6 1063.5 872.1 1063.5 873.1C1063.5 874.1 1066.6 874.9 1066.3 875.9C1066.0 876.9 1061.8 882.2 1060.6 883.0C1059.5 883.9 1056.1 883.9 1055.0 884.4C1053.8 885.0 1050.7 888.4 1049.3 888.7C1047.9 889.0 1042.2 888.0 1040.8 887.3C1039.4 886.5 1036.5 882.0 1035.1 881.6C1033.7 881.2 1027.8 883.6 1026.6 883.0C1025.5 882.4 1024.7 877.1 1023.8 875.9C1023.0 874.8 1019.3 872.5 1018.1 871.7C1017.0 870.8 1013.8 867.6 1012.5 867.4C1011.2 867.3 1006.8 869.4 1005.4 870.3C1004.0 871.1 999.6 874.8 998.3 875.9C997.0 877.1 992.7 880.5 992.7 881.6C992.7 882.7 996.9 886.8 998.3 887.3C999.7 887.7 1005.0 885.7 1006.8 885.8C1008.7 886.0 1014.7 888.2 1016.7 888.7C1018.7 889.1 1025.1 889.2 1026.6 890.1C1028.2 890.9 1032.3 896.2 1032.3 897.2C1032.3 898.2 1028.1 899.7 1026.6 900.0C1025.2 900.3 1019.6 900.6 1018.1 900.0C1016.7 899.4 1013.9 894.8 1012.5 894.3C1011.1 893.9 1005.1 896.2 1004.0 895.8C1002.8 895.3 1002.1 890.9 1001.2 890.1C1000.2 889.2 995.1 888.2 994.1 887.3C993.1 886.3 991.1 881.6 991.2 880.2C991.4 878.8 994.4 874.4 995.5 873.1C996.6 871.8 1001.2 868.6 1002.6 867.4C1004.0 866.3 1008.5 862.9 1009.6 861.8C1010.8 860.6 1013.2 857.5 1013.9 856.1C1014.6 854.7 1016.0 849.3 1016.7 847.6Z" fill="#34472a" stroke="#2f3728" stroke-width="1"/>
<path d="M1066.3 825.0C1066.7 823.8 1071.7 820.7 1071.9 819.3C1072.2 817.9 1068.8 812.1 1069.1 810.8C1069.4 809.5 1073.9 806.3 1074.8 806.5C1075.6 806.8 1076.8 812.6 1077.6 813.6C1078.5 814.6 1082.0 816.5 1083.3 816.5C1084.5 816.5 1088.9 813.6 1090.4 813.6C1091.8 813.6 1096.2 815.3 1097.4 816.5C1098.7 817.6 1102.2 823.5 1103.1 825.0C1103.9 826.4 1105.1 830.3 1105.9 830.6C1106.8 830.9 1110.5 828.5 1111.6 827.8C1112.7 827.1 1116.4 824.4 1117.3 823.5C1118.1 822.7 1119.9 820.6 1120.1 819.3C1120.2 818.0 1119.5 812.1 1118.7 810.8C1117.8 809.5 1112.9 807.5 1111.6 806.5C1110.3 805.6 1107.1 801.3 1105.9 800.9C1104.8 800.5 1101.4 802.7 1100.3 802.3C1099.1 801.9 1095.7 797.1 1094.6 796.6C1093.5 796.2 1090.1 798.6 1088.9 798.1C1087.8 797.5 1083.4 792.2 1083.3 791.0C1083.1 789.7 1086.4 785.7 1087.5 785.3C1088.7 784.9 1093.0 787.0 1094.6 786.7C1096.2 786.4 1101.5 783.3 1103.1 782.5C1104.7 781.6 1108.8 778.9 1110.2 778.2C1111.6 777.5 1115.7 776.0 1117.3 775.4C1118.8 774.8 1124.1 773.3 1125.8 772.6C1127.5 771.9 1132.5 767.9 1134.2 768.3C1135.9 768.7 1141.0 775.4 1142.7 776.8C1144.4 778.2 1150.1 782.8 1151.2 782.5C1152.4 782.2 1153.2 775.4 1154.1 774.0C1154.9 772.6 1158.3 769.2 1159.7 768.3C1161.2 767.5 1166.5 766.5 1168.2 765.5C1169.9 764.5 1174.7 759.3 1176.7 758.4C1178.7 757.6 1185.8 757.4 1188.1 757.0C1190.3 756.6 1197.2 754.3 1199.4 754.2C1201.6 754.0 1208.9 753.3 1210.0 755.6C1211.1 757.8 1211.3 774.7 1210.0 776.8C1208.7 778.9 1199.3 777.0 1196.5 776.8C1193.8 776.7 1184.7 775.8 1182.4 775.4C1180.1 775.0 1175.6 772.6 1173.9 772.6C1172.2 772.6 1167.4 774.3 1165.4 775.4C1163.4 776.5 1155.5 782.6 1154.1 783.9C1152.7 785.2 1151.9 786.9 1151.2 788.1C1150.5 789.4 1147.0 795.4 1147.0 796.6C1147.0 797.9 1151.4 800.0 1151.2 800.9C1151.1 801.7 1145.4 804.1 1145.6 805.1C1145.7 806.1 1153.2 809.9 1152.7 810.8C1152.1 811.6 1141.5 812.8 1139.9 813.6C1138.4 814.5 1138.5 818.7 1137.1 819.3C1135.7 819.9 1127.3 819.9 1125.8 819.3C1124.2 818.7 1122.1 813.3 1121.5 813.6C1120.9 813.9 1120.8 820.4 1120.1 822.1C1119.4 823.8 1115.7 829.2 1114.4 830.6C1113.2 832.0 1109.0 835.2 1107.3 836.3C1105.6 837.4 1099.3 841.1 1097.4 841.9C1095.6 842.8 1090.6 844.1 1088.9 844.8C1087.2 845.5 1081.6 849.3 1080.4 849.0C1079.3 848.7 1077.3 842.9 1077.6 841.9C1077.9 841.0 1082.1 839.7 1083.3 839.1C1084.4 838.5 1088.9 837.1 1088.9 836.3C1088.9 835.4 1084.4 831.2 1083.3 830.6C1082.1 830.1 1078.7 830.3 1077.6 830.6C1076.5 830.9 1072.9 833.5 1071.9 833.5C1071.0 833.5 1068.3 831.5 1067.7 830.6C1067.1 829.8 1065.9 826.1 1066.3 825.0Z" fill="#34472a" stroke="#2f3728" stroke-width="1"/>
<path d="M1101.7 758.4C1102.0 757.3 1107.2 754.3 1108.8 754.2C1110.3 754.0 1115.6 757.0 1117.3 757.0C1119.0 757.0 1124.1 755.0 1125.8 754.2C1127.5 753.3 1132.5 749.5 1134.2 748.5C1135.9 747.5 1141.0 744.4 1142.7 744.2C1144.4 744.1 1149.5 747.2 1151.2 747.1C1152.9 746.9 1158.0 743.4 1159.7 742.8C1161.4 742.3 1166.5 741.1 1168.2 741.4C1169.9 741.7 1175.0 745.4 1176.7 745.7C1178.4 745.9 1184.7 743.7 1185.2 744.2C1185.8 744.8 1183.2 749.9 1182.4 751.3C1181.5 752.7 1178.1 757.0 1176.7 758.4C1175.3 759.8 1169.9 764.5 1168.2 765.5C1166.5 766.5 1161.2 767.5 1159.7 768.3C1158.3 769.2 1155.2 774.0 1154.1 774.0C1152.9 774.0 1149.8 769.2 1148.4 768.3C1147.0 767.5 1141.3 765.5 1139.9 765.5C1138.5 765.5 1135.7 767.6 1134.2 768.3C1132.8 769.0 1127.5 771.9 1125.8 772.6C1124.1 773.3 1118.8 774.8 1117.3 775.4C1115.7 776.0 1111.5 778.5 1110.2 778.2C1108.9 777.9 1104.9 773.8 1104.5 772.6C1104.1 771.3 1106.2 766.9 1105.9 765.5C1105.6 764.1 1101.4 759.5 1101.7 758.4Z" fill="#34472a" stroke="#2f3728" stroke-width="1"/>
<path d="M1101.7 740.0C1106.9 739.4 1151.7 739.4 1156.9 740.0C1162.1 740.6 1155.2 745.2 1154.1 745.7C1152.9 746.1 1147.0 744.0 1145.6 744.2C1144.2 744.5 1141.3 748.2 1139.9 748.5C1138.5 748.8 1132.8 746.7 1131.4 747.1C1130.0 747.5 1126.9 752.5 1125.8 752.7C1124.6 753.0 1121.2 749.8 1120.1 749.9C1119.0 750.1 1115.6 754.3 1114.4 754.2C1113.3 754.0 1109.8 749.3 1108.8 748.5C1107.8 747.6 1105.2 746.5 1104.5 745.7C1103.8 744.8 1096.4 740.6 1101.7 740.0Z" fill="#151a12" stroke="#2f3728" stroke-width="1"/>
<path d="M1151.2 788.1C1151.4 787.2 1152.7 785.2 1154.1 783.9C1155.5 782.6 1163.4 776.5 1165.4 775.4C1167.4 774.3 1172.2 772.6 1173.9 772.6C1175.6 772.6 1180.1 775.0 1182.4 775.4C1184.7 775.8 1193.8 776.2 1196.5 776.8C1199.3 777.4 1208.7 779.6 1210.0 781.1C1211.3 782.5 1211.1 790.1 1210.0 791.7C1208.9 793.2 1201.7 796.6 1199.4 796.6C1197.0 796.7 1189.0 792.7 1186.6 792.4C1184.2 792.1 1177.4 793.8 1175.3 793.8C1173.2 793.8 1167.7 792.4 1165.4 792.4C1163.1 792.4 1154.1 794.2 1152.7 793.8C1151.2 793.4 1151.1 789.1 1151.2 788.1Z" fill="#151a12" stroke="#2f3728" stroke-width="1"/>
<path d="M1097.4 796.6C1097.6 795.9 1101.7 793.2 1103.1 792.4C1104.5 791.5 1110.2 789.4 1111.6 788.1C1113.0 786.9 1116.1 779.8 1117.3 779.6C1118.4 779.5 1122.1 787.0 1122.9 786.7C1123.8 786.4 1125.0 777.2 1125.8 776.8C1126.5 776.4 1129.2 782.8 1130.0 782.5C1130.8 782.2 1133.5 774.0 1134.2 774.0C1135.0 774.0 1135.9 781.9 1137.1 782.5C1138.2 783.0 1145.0 779.1 1145.6 779.6C1146.1 780.2 1143.6 786.7 1142.7 788.1C1141.9 789.6 1136.9 793.0 1137.1 793.8C1137.2 794.7 1142.7 795.9 1144.2 796.6C1145.6 797.3 1151.1 800.0 1151.2 800.9C1151.4 801.7 1145.4 804.1 1145.6 805.1C1145.7 806.1 1153.2 809.9 1152.7 810.8C1152.1 811.6 1141.5 812.8 1139.9 813.6C1138.4 814.5 1138.5 818.7 1137.1 819.3C1135.7 819.9 1127.3 819.9 1125.8 819.3C1124.2 818.7 1122.4 814.9 1121.5 813.6C1120.7 812.4 1118.2 807.5 1117.3 806.5C1116.3 805.6 1112.7 804.3 1111.6 803.7C1110.5 803.2 1106.9 801.3 1105.9 800.9C1104.9 800.5 1102.5 799.9 1101.7 799.5C1100.8 799.0 1097.3 797.3 1097.4 796.6Z" fill="#151a12" stroke="#2f3728" stroke-width="1"/>
<path d="M1055.0 844.8C1055.5 844.2 1062.0 843.1 1063.5 843.4C1064.9 843.6 1067.7 847.0 1069.1 847.6C1070.5 848.2 1075.9 849.3 1077.6 849.0C1079.3 848.7 1084.1 845.3 1086.1 844.8C1088.1 844.2 1096.6 842.8 1097.4 843.4C1098.3 843.9 1095.7 849.3 1094.6 850.4C1093.5 851.6 1088.2 854.4 1086.1 854.7C1084.0 855.0 1075.3 853.0 1073.4 853.3C1071.4 853.6 1067.3 857.7 1066.3 857.5C1065.3 857.4 1064.3 852.7 1063.5 851.9C1062.6 851.0 1058.6 849.7 1057.8 849.0C1056.9 848.3 1054.4 845.3 1055.0 844.8Z" fill="#151a12" stroke="#2f3728" stroke-width="1"/>
<path d="M1050.7 808.0C1051.0 807.0 1056.2 807.3 1057.8 806.5C1059.3 805.8 1064.9 802.3 1066.3 800.9C1067.7 799.5 1071.0 793.1 1071.9 792.4C1072.9 791.7 1075.9 792.8 1076.2 793.8C1076.5 794.8 1074.6 800.9 1074.8 802.3C1074.9 803.7 1076.8 807.5 1077.6 808.0C1078.5 808.4 1082.1 806.4 1083.3 806.5C1084.4 806.7 1087.5 809.0 1088.9 809.4C1090.4 809.8 1095.7 810.4 1097.4 810.8C1099.1 811.2 1104.7 813.1 1105.9 813.6C1107.2 814.2 1110.2 815.6 1110.2 816.5C1110.2 817.3 1106.6 821.0 1105.9 822.1C1105.2 823.3 1103.7 827.8 1103.1 827.8C1102.5 827.8 1101.1 823.0 1100.3 822.1C1099.4 821.3 1095.7 819.9 1094.6 819.3C1093.5 818.7 1090.1 816.5 1088.9 816.5C1087.8 816.5 1084.4 818.7 1083.3 819.3C1082.1 819.9 1078.7 821.6 1077.6 822.1C1076.5 822.7 1072.2 824.1 1071.9 825.0C1071.7 825.8 1073.9 829.9 1074.8 830.6C1075.6 831.3 1080.4 831.3 1080.4 832.0C1080.4 832.7 1075.9 837.0 1074.8 837.7C1073.6 838.4 1070.0 839.5 1069.1 839.1C1068.3 838.7 1067.0 834.6 1066.3 833.5C1065.6 832.3 1062.6 829.2 1062.0 827.8C1061.5 826.4 1061.3 820.4 1060.6 819.3C1059.9 818.2 1055.9 817.6 1055.0 816.5C1054.0 815.3 1050.4 809.0 1050.7 808.0Z" fill="#65962e" stroke="#2f3728" stroke-width="1"/>
<path d="M1026.6 847.6C1026.8 846.3 1028.6 844.2 1029.5 844.8C1030.3 845.3 1033.7 852.6 1035.1 853.3C1036.5 854.0 1042.2 852.4 1043.6 851.9C1045.0 851.3 1048.4 847.5 1049.3 847.6C1050.1 847.8 1052.4 852.1 1052.1 853.3C1051.8 854.4 1046.7 857.5 1046.5 858.9C1046.2 860.4 1049.6 866.3 1049.3 867.4C1049.0 868.6 1044.5 870.7 1043.6 870.3C1042.8 869.8 1041.6 864.0 1040.8 863.2C1039.9 862.3 1036.1 861.6 1035.1 861.8C1034.1 861.9 1031.6 865.0 1030.9 864.6C1030.2 864.2 1028.5 859.2 1028.1 857.5C1027.6 855.8 1026.5 848.9 1026.6 847.6Z" fill="#65962e" stroke="#2f3728" stroke-width="1"/>
<path d="M970.0 870.3C970.8 866.7 977.1 864.3 978.5 864.6C979.9 864.9 982.7 872.0 984.2 873.1C985.6 874.2 991.2 875.1 992.7 875.9C994.1 876.8 997.0 880.9 998.3 881.6C999.6 882.3 1005.4 882.3 1005.4 883.0C1005.4 883.7 997.0 888.2 998.3 888.7C999.6 889.1 1016.3 887.0 1018.1 887.3C1020.0 887.5 1017.9 890.8 1016.7 891.5C1015.6 892.2 1008.7 893.5 1006.8 894.3C1005.0 895.2 1002.0 899.4 998.3 900.0C994.6 900.6 972.8 903.0 970.0 900.0C967.2 897.0 969.2 873.8 970.0 870.3Z" fill="#65962e" stroke="#2f3728" stroke-width="1"/>
<path d="M1005.4 856.1C1006.1 855.0 1010.2 852.7 1011.1 853.3C1011.9 853.8 1013.0 860.4 1013.9 861.8C1014.7 863.2 1018.6 866.3 1019.6 867.4C1020.5 868.6 1023.8 872.0 1023.8 873.1C1023.8 874.2 1020.4 877.9 1019.6 878.8C1018.7 879.6 1016.0 882.0 1015.3 881.6C1014.6 881.2 1013.2 875.9 1012.5 874.5C1011.8 873.1 1009.1 868.4 1008.2 867.4C1007.4 866.4 1004.3 865.7 1004.0 864.6C1003.7 863.5 1004.7 857.2 1005.4 856.1Z" fill="#65962e" stroke="#2f3728" stroke-width="1"/>
<path d="M1111.6 762.7C1112.2 761.7 1118.2 759.4 1120.1 758.4C1121.9 757.4 1128.7 752.6 1130.0 752.7C1131.3 752.9 1131.8 759.4 1132.8 759.8C1133.8 760.2 1138.4 757.4 1139.9 757.0C1141.5 756.6 1147.3 754.9 1148.4 755.6C1149.5 756.3 1150.5 762.9 1151.2 764.1C1151.9 765.2 1155.2 765.9 1155.5 766.9C1155.8 767.9 1154.5 773.8 1154.1 774.0C1153.6 774.1 1152.2 769.0 1151.2 768.3C1150.2 767.6 1145.3 766.5 1144.2 766.9C1143.0 767.3 1140.9 772.4 1139.9 772.6C1138.9 772.7 1135.7 768.7 1134.2 768.3C1132.8 767.9 1127.2 768.0 1125.8 768.3C1124.3 768.6 1121.2 771.2 1120.1 771.2C1119.0 771.2 1115.3 769.2 1114.4 768.3C1113.6 767.5 1111.0 763.6 1111.6 762.7Z" fill="#65962e" stroke="#2f3728" stroke-width="1"/>
</g>
<path d="M1066.2 813.3C1066.6 811.9 1071.8 806.5 1073.3 806.2C1074.7 805.9 1082.1 809.6 1083.9 809.7C1085.7 809.9 1092.7 807.7 1094.5 808.0C1096.3 808.3 1103.8 812.1 1105.1 813.3C1106.5 814.5 1110.4 820.8 1110.4 822.1C1110.4 823.5 1105.9 828.2 1105.1 829.2C1104.4 830.2 1102.5 833.5 1101.6 834.5C1100.7 835.5 1096.0 841.3 1094.5 841.6C1093.0 841.9 1085.1 838.9 1083.9 838.1C1082.7 837.2 1081.2 831.9 1080.4 831.0C1079.5 830.1 1074.3 828.2 1073.3 827.4C1072.2 826.7 1068.6 823.3 1068.0 822.1C1067.4 820.9 1065.8 814.6 1066.2 813.3Z" fill="#34472a" stroke="#2f3728" stroke-width="1"/>
<path d="M1027.3 846.9C1028.0 845.7 1033.0 841.6 1034.3 841.6C1035.7 841.6 1041.7 846.8 1043.2 846.9C1044.7 847.1 1051.0 842.9 1052.0 843.4C1053.1 843.8 1055.9 850.9 1055.6 852.2C1055.3 853.5 1049.7 858.1 1048.5 859.3C1047.3 860.5 1042.9 866.1 1041.4 866.4C1039.9 866.7 1032.1 863.7 1030.8 862.8C1029.5 861.9 1025.8 857.1 1025.5 855.8C1025.2 854.4 1026.5 848.1 1027.3 846.9Z" fill="#34472a" stroke="#2f3728" stroke-width="1"/>
<path d="M1030.8 848.7C1030.8 847.3 1035.4 844.8 1036.1 845.1C1036.8 845.4 1038.8 851.8 1039.6 852.2C1040.5 852.7 1046.4 849.9 1046.7 850.4C1047.0 851.0 1044.1 858.4 1043.2 859.3C1042.3 860.2 1037.1 861.9 1036.1 861.1C1035.1 860.2 1030.8 850.0 1030.8 848.7Z" fill="#65962e" stroke="#2f3728" stroke-width="1"/>
<path d="M1075.0 820.4C1075.2 819.5 1080.9 816.7 1082.1 816.8C1083.3 817.0 1088.2 821.1 1089.2 822.1C1090.2 823.2 1094.7 828.3 1094.5 829.2C1094.4 830.1 1088.6 832.9 1087.4 832.7C1086.3 832.6 1081.4 828.5 1080.4 827.4C1079.3 826.4 1074.9 821.2 1075.0 820.4Z" fill="#65962e" stroke="#2f3728" stroke-width="1"/>
<path d="M1105.8 1063.6C1105.9 1061.5 1106.8 1044.5 1107.4 1041.2C1108.0 1038.0 1113.9 1016.3 1114.7 1014.4C1115.6 1012.5 1119.7 1011.2 1119.9 1012.6C1120.1 1014.0 1117.2 1034.2 1117.7 1035.6C1118.1 1037.1 1126.6 1033.9 1127.0 1034.5C1127.5 1035.1 1124.1 1043.5 1124.4 1044.6C1124.7 1045.6 1129.8 1050.5 1131.5 1050.2C1133.2 1049.9 1146.7 1041.2 1149.4 1040.1C1152.1 1039.0 1168.8 1033.9 1171.7 1033.4C1174.7 1033.0 1191.8 1033.3 1194.1 1033.4C1196.3 1033.5 1203.5 1035.3 1205.3 1034.5C1207.0 1033.7 1221.0 1022.5 1220.9 1021.1C1220.7 1019.8 1206.0 1015.0 1203.0 1014.4C1200.0 1013.8 1179.6 1012.4 1176.2 1012.2C1172.8 1012.0 1151.6 1011.2 1151.6 1011.1C1151.6 1010.9 1172.8 1010.2 1176.2 1009.9C1179.6 1009.7 1199.4 1008.6 1203.0 1007.7C1206.6 1006.8 1227.6 999.4 1229.8 996.5C1232.1 993.7 1235.5 968.2 1236.5 965.3C1237.6 962.3 1243.9 953.2 1245.5 951.8C1247.0 950.5 1259.0 937.1 1260.0 945.1C1261.0 953.2 1270.3 1064.0 1260.0 1072.5C1249.7 1081.0 1116.1 1073.1 1105.8 1072.5C1095.5 1071.9 1105.7 1065.7 1105.8 1063.6Z" fill="#151a12" stroke="#2f3728" stroke-width="1"/>
<path d="M1174.0 963.0C1174.3 962.7 1195.1 970.2 1198.5 972.0C1202.0 973.7 1222.7 987.6 1225.4 989.8C1228.0 992.1 1236.5 1003.4 1238.8 1005.5C1241.1 1007.6 1258.6 1019.2 1260.0 1021.1C1261.4 1023.1 1261.7 1035.1 1260.0 1034.5C1258.3 1033.9 1237.2 1014.7 1234.3 1012.2C1231.4 1009.6 1219.1 998.9 1216.4 996.5C1213.7 994.2 1196.9 978.7 1194.1 976.4C1191.2 974.2 1173.7 963.3 1174.0 963.0Z" fill="#151a12" stroke="#2f3728" stroke-width="1"/>
<path d="M1205.3 948.5C1205.3 948.1 1218.7 945.3 1220.9 945.1C1223.1 945.0 1236.2 945.7 1238.8 946.3C1241.4 946.9 1258.6 953.0 1260.0 954.1C1261.4 955.2 1261.4 963.0 1260.0 963.0C1258.6 963.0 1241.4 954.9 1238.8 954.1C1236.2 953.3 1223.1 951.1 1220.9 950.7C1218.7 950.4 1205.3 948.9 1205.3 948.5Z" fill="#151a12" stroke="#2f3728" stroke-width="1"/>
<path d="M1232.1 931.7C1231.9 931.4 1243.6 932.6 1245.5 932.8C1247.3 933.1 1259.0 935.4 1260.0 936.2C1261.0 937.0 1260.8 945.0 1260.0 945.1C1259.2 945.3 1249.6 939.3 1247.7 938.4C1245.8 937.5 1232.2 932.1 1232.1 931.7Z" fill="#151a12" stroke="#2f3728" stroke-width="1"/>
<path d="M1131.5 967.5C1132.1 967.3 1146.4 974.9 1149.4 976.4C1152.4 977.9 1173.2 988.0 1176.2 989.8C1179.2 991.6 1191.7 1001.2 1194.1 1003.2C1196.5 1005.3 1209.6 1018.4 1212.0 1021.1C1214.3 1023.8 1227.6 1040.5 1229.8 1043.5C1232.1 1046.4 1245.2 1064.2 1245.5 1065.8C1245.8 1067.4 1236.2 1069.5 1234.3 1068.0C1232.4 1066.6 1218.8 1046.4 1216.4 1043.5C1214.0 1040.5 1200.9 1025.7 1198.5 1023.4C1196.2 1021.0 1183.4 1009.8 1180.7 1007.7C1178.0 1005.6 1161.0 994.0 1158.3 992.1C1155.6 990.1 1142.2 980.3 1140.4 978.7C1138.7 977.0 1130.9 967.6 1131.5 967.5Z" fill="#34472a" stroke="#2f3728" stroke-width="1"/>
<path d="M1138.2 1028.9C1138.5 1028.6 1147.4 1021.9 1149.4 1021.1C1151.3 1020.4 1164.9 1017.8 1167.3 1017.8C1169.6 1017.7 1182.8 1019.3 1185.1 1020.0C1187.5 1020.7 1200.6 1026.3 1203.0 1027.8C1205.4 1029.4 1218.7 1040.9 1220.9 1043.5C1223.1 1046.0 1236.2 1064.2 1236.5 1065.8C1236.8 1067.4 1227.0 1069.2 1225.4 1068.0C1223.7 1066.9 1214.0 1050.3 1212.0 1047.9C1209.9 1045.5 1196.5 1033.9 1194.1 1032.3C1191.7 1030.7 1178.6 1025.1 1176.2 1024.5C1173.8 1023.9 1160.4 1023.3 1158.3 1023.4C1156.2 1023.4 1146.3 1025.2 1144.9 1025.6C1143.6 1026.0 1137.9 1029.2 1138.2 1028.9Z" fill="#34472a" stroke="#2f3728" stroke-width="1"/>
<path d="M1133.7 1072.5C1130.3 1071.6 1141.2 1060.4 1142.7 1059.1C1144.2 1057.8 1154.2 1052.8 1156.1 1052.4C1158.0 1052.0 1169.8 1052.0 1171.7 1052.4C1173.7 1052.8 1183.6 1057.8 1185.1 1059.1C1186.6 1060.4 1197.5 1071.6 1194.1 1072.5C1190.7 1073.4 1137.2 1073.4 1133.7 1072.5Z" fill="#34472a" stroke="#2f3728" stroke-width="1"/>
<path d="M1180.7 1039.0C1180.7 1038.2 1196.2 1042.3 1198.5 1043.5C1200.9 1044.7 1214.6 1054.9 1216.4 1056.9C1218.2 1058.8 1226.0 1071.5 1225.4 1072.5C1224.8 1073.6 1209.3 1073.7 1207.5 1072.5C1205.7 1071.3 1200.3 1056.9 1198.5 1054.6C1196.8 1052.4 1180.7 1039.7 1180.7 1039.0Z" fill="#34472a" stroke="#2f3728" stroke-width="1"/>
<path d="M1111.8 922.8C1111.4 922.0 1130.5 931.9 1133.7 934.0C1137.0 936.1 1157.1 951.5 1160.6 954.1C1164.0 956.6 1181.7 969.4 1185.1 972.0C1188.6 974.5 1208.7 989.5 1212.0 992.1C1215.2 994.6 1231.1 1007.4 1234.3 1009.9C1237.5 1012.5 1258.3 1027.8 1260.0 1030.1C1261.7 1032.3 1261.4 1043.8 1260.0 1043.5C1258.6 1043.2 1241.7 1028.0 1238.8 1025.6C1235.9 1023.2 1219.4 1010.1 1216.4 1007.7C1213.4 1005.3 1197.4 992.5 1194.1 989.8C1190.8 987.2 1170.8 970.5 1167.3 967.5C1163.7 964.5 1144.1 948.1 1140.4 945.1C1136.8 942.2 1112.3 923.5 1111.8 922.8Z" fill="#65962e" stroke="#2f3728" stroke-width="1"/>
<path d="M1090.2 994.3C1090.3 993.9 1106.4 997.6 1109.2 998.8C1111.9 1000.0 1128.5 1010.1 1131.5 1012.2C1134.5 1014.3 1150.9 1027.7 1153.9 1030.1C1156.8 1032.4 1174.1 1046.1 1176.2 1047.9C1178.3 1049.7 1185.4 1056.6 1185.1 1056.9C1184.8 1057.2 1174.1 1053.9 1171.7 1052.4C1169.3 1050.9 1152.4 1036.8 1149.4 1034.5C1146.4 1032.3 1129.9 1020.8 1127.0 1018.9C1124.2 1016.9 1109.4 1007.1 1106.9 1005.5C1104.5 1003.8 1090.0 994.7 1090.2 994.3Z" fill="#65962e" stroke="#2f3728" stroke-width="1"/>
<path d="M1080.1 1019.6C1080.3 1019.3 1095.5 1026.4 1098.0 1027.8C1100.5 1029.3 1115.3 1039.1 1118.1 1041.2C1120.9 1043.4 1139.4 1058.8 1140.4 1060.2C1141.5 1061.6 1135.5 1063.3 1133.7 1062.5C1132.0 1061.6 1116.2 1049.9 1113.6 1047.9C1111.1 1045.9 1098.0 1034.2 1095.8 1032.3C1093.5 1030.4 1080.0 1019.9 1080.1 1019.6Z" fill="#65962e" stroke="#2f3728" stroke-width="1"/>
<path d="M1163.9 925.0C1163.6 924.7 1181.6 923.3 1185.1 923.2C1188.6 923.2 1212.8 923.8 1216.4 923.9C1220.0 924.0 1235.9 925.1 1238.8 925.0C1241.7 925.0 1258.6 922.3 1260.0 922.8C1261.4 923.2 1261.4 931.1 1260.0 931.7C1258.6 932.3 1241.7 931.9 1238.8 931.7C1235.9 931.6 1219.7 929.8 1216.4 929.5C1213.1 929.2 1193.1 928.0 1189.6 927.7C1186.1 927.4 1164.2 925.3 1163.9 925.0Z" fill="#65962e" stroke="#2f3728" stroke-width="1"/>
<path d="M1191.8 913.9C1192.0 913.4 1205.3 919.1 1207.5 920.6C1209.7 922.0 1223.0 934.0 1225.4 936.2C1227.7 938.4 1240.9 951.7 1243.2 954.1C1245.5 956.5 1258.9 970.2 1260.0 972.0C1261.1 973.7 1261.4 981.5 1260.0 980.9C1258.6 980.3 1241.4 965.4 1238.8 963.0C1236.2 960.6 1223.1 947.5 1220.9 945.1C1218.7 942.8 1207.2 929.3 1205.3 927.3C1203.3 925.2 1191.7 914.3 1191.8 913.9Z" fill="#65962e" stroke="#2f3728" stroke-width="1"/>
<path d="M1191.8 936.2C1192.1 935.9 1205.3 949.5 1207.5 951.8C1209.7 954.2 1223.0 969.4 1225.4 972.0C1227.7 974.5 1240.9 987.6 1243.2 989.8C1245.5 992.1 1258.9 1003.8 1260.0 1005.5C1261.1 1007.1 1261.4 1015.0 1260.0 1014.4C1258.6 1013.8 1241.4 998.9 1238.8 996.5C1236.2 994.2 1223.3 981.3 1220.9 978.7C1218.5 976.0 1205.0 959.1 1203.0 956.3C1201.1 953.5 1191.5 936.5 1191.8 936.2Z" fill="#65962e" stroke="#2f3728" stroke-width="1"/>
<path d="M1189.6 1007.7C1189.6 1007.2 1204.8 1004.4 1207.5 1004.4C1210.2 1004.3 1227.2 1006.1 1229.8 1006.6C1232.5 1007.1 1245.7 1011.4 1247.7 1012.2C1249.7 1012.9 1259.2 1016.9 1260.0 1017.8C1260.8 1018.6 1261.1 1024.4 1260.0 1024.5C1258.9 1024.5 1245.5 1019.6 1243.2 1018.9C1240.9 1018.2 1227.7 1014.9 1225.4 1014.4C1223.0 1014.0 1209.9 1012.6 1207.5 1012.2C1205.1 1011.7 1189.6 1008.2 1189.6 1007.7Z" fill="#65962e" stroke="#2f3728" stroke-width="1"/>
<path d="M1247.7 846.8C1248.0 847.0 1251.6 862.3 1252.2 864.7C1252.8 867.1 1256.1 880.6 1256.6 882.6C1257.2 884.5 1259.8 892.0 1260.0 893.7C1260.2 895.5 1260.4 909.2 1260.0 909.4C1259.6 909.5 1255.1 898.1 1254.4 896.0C1253.7 893.9 1250.4 880.3 1249.9 878.1C1249.5 875.9 1247.9 864.5 1247.7 862.5C1247.6 860.4 1247.4 846.7 1247.7 846.8Z" fill="#65962e" stroke="#2f3728" stroke-width="1"/>
<path d="M1228.7 875.9C1228.9 875.4 1237.4 891.4 1238.8 893.7C1240.2 896.1 1248.5 909.5 1249.9 911.6C1251.4 913.7 1259.3 923.8 1260.0 925.0C1260.7 926.2 1260.8 929.9 1260.0 929.5C1259.2 929.1 1249.3 920.3 1247.7 918.3C1246.1 916.4 1237.8 903.3 1236.5 900.4C1235.3 897.6 1228.6 876.3 1228.7 875.9Z" fill="#65962e" stroke="#2f3728" stroke-width="1"/>
<path d="M1234.3 929.9C1234.5 929.5 1242.0 921.6 1243.2 920.6C1244.4 919.6 1251.1 915.6 1252.2 915.0C1253.3 914.4 1259.5 911.5 1260.0 911.6C1260.5 911.7 1260.7 915.5 1260.0 916.1C1259.3 916.7 1251.2 919.8 1249.9 920.6C1248.7 921.3 1242.0 926.6 1241.0 927.3C1240.0 927.9 1234.2 930.4 1234.3 929.9Z" fill="#65962e" stroke="#2f3728" stroke-width="1"/>
<path d="M1252.2 1061.3C1252.6 1060.6 1259.5 1054.5 1260.0 1054.6C1260.5 1054.8 1260.4 1062.8 1260.0 1063.6C1259.6 1064.3 1254.9 1066.0 1254.4 1065.8C1253.9 1065.7 1251.8 1062.1 1252.2 1061.3Z" fill="#65962e" stroke="#2f3728" stroke-width="1"/>
<path d="M1165.0 839.0C1165.0 838.8 1173.7 836.1 1176.2 836.1C1178.7 836.1 1199.4 838.6 1203.0 839.0C1206.6 839.4 1226.0 842.1 1229.8 842.3C1233.6 842.6 1258.0 842.0 1260.0 842.3C1262.0 842.6 1262.0 846.6 1260.0 846.8C1258.0 847.0 1233.6 845.3 1229.8 845.0C1226.0 844.7 1206.6 842.7 1203.0 842.3C1199.4 841.9 1178.7 839.2 1176.2 839.0C1173.7 838.8 1165.0 839.2 1165.0 839.0Z" fill="#4b4f3c" stroke="#2f3728" stroke-width="1"/>
<path d="M1205.3 887.0C1205.1 886.8 1214.5 879.0 1216.4 878.1C1218.4 877.2 1231.4 873.6 1234.3 873.2C1237.2 872.8 1258.3 871.7 1260.0 871.8C1261.7 871.9 1261.6 874.5 1260.0 874.7C1258.4 875.0 1239.3 875.4 1236.5 875.9C1233.8 876.3 1220.7 880.7 1218.7 881.5C1216.6 882.2 1205.4 887.3 1205.3 887.0Z" fill="#4b4f3c" stroke="#2f3728" stroke-width="1"/>
<path d="M412.4 1014.2C412.8 1013.1 419.7 1010.1 421.2 1010.1C422.8 1010.1 427.0 1012.8 428.0 1014.2C428.9 1015.5 429.5 1022.7 430.4 1023.9C431.4 1025.1 436.3 1025.8 437.2 1026.5C438.1 1027.3 438.5 1031.1 439.3 1031.9C440.1 1032.6 444.4 1033.4 445.1 1034.2C445.8 1035.0 447.1 1038.7 446.4 1039.8C445.7 1041.0 438.6 1044.2 438.1 1045.5C437.5 1046.8 440.8 1049.9 441.1 1052.6C441.4 1055.3 442.7 1070.6 441.1 1072.6C439.4 1074.6 426.7 1074.5 424.8 1072.6C422.8 1070.7 422.3 1056.2 421.6 1053.6C420.9 1051.0 418.7 1047.8 417.7 1046.5C416.7 1045.3 412.1 1042.3 412.0 1041.2C412.0 1040.2 417.1 1037.5 417.3 1035.9C417.6 1034.4 414.5 1027.5 414.5 1026.0C414.5 1024.5 417.6 1021.9 417.3 1020.7C417.1 1019.5 412.0 1015.2 412.4 1014.2Z" fill="#34472a" stroke="#2f3728" stroke-width="1"/>
<path d="M436.3 1015.9C436.7 1013.2 442.2 998.6 443.4 996.5C444.5 994.3 446.9 993.7 447.4 994.7C448.0 995.7 448.3 1006.0 448.7 1006.2C449.1 1006.4 450.9 996.3 451.3 996.5C451.8 996.6 452.5 1006.3 453.1 1008.0C453.7 1009.6 457.0 1012.3 457.0 1013.3C457.0 1014.2 453.5 1016.6 453.1 1017.7C452.7 1018.8 454.2 1022.7 453.1 1023.9C452.0 1025.1 444.0 1029.3 442.5 1030.1C441.0 1030.9 438.4 1032.5 438.1 1031.9C437.7 1031.2 439.5 1025.5 439.3 1023.9C439.1 1022.3 435.9 1018.7 436.3 1015.9Z" fill="#34472a" stroke="#2f3728" stroke-width="1"/>
<path d="M435.0 980.5C435.7 979.6 440.9 979.2 441.6 977.9C442.2 976.5 441.4 969.2 441.6 967.3C441.8 965.3 443.2 959.2 443.9 958.4C444.5 957.6 447.5 958.1 448.1 959.3C448.7 960.5 449.1 968.4 449.9 970.8C450.8 973.2 455.5 982.3 456.6 983.2C457.8 984.1 461.2 979.3 461.6 979.6C462.0 980.0 460.4 985.6 461.1 986.7C461.7 987.9 468.0 989.9 468.1 991.2C468.3 992.4 463.3 997.8 462.8 999.1C462.4 1000.4 464.7 1003.9 463.7 1004.4C462.7 1005.0 454.2 1005.3 453.1 1004.4C451.9 1003.5 452.9 997.3 452.2 995.6C451.5 993.8 447.6 987.7 446.4 986.7C445.1 985.8 440.9 985.8 439.8 985.8C438.7 985.8 435.9 987.3 435.4 986.7C434.9 986.2 434.4 981.4 435.0 980.5Z" fill="#34472a" stroke="#2f3728" stroke-width="1"/>
<path d="M453.1 942.5C453.6 941.9 461.2 942.2 462.3 941.6C463.4 941.0 463.2 936.5 463.7 936.3C464.2 936.1 467.0 938.7 467.6 939.8C468.2 940.9 468.5 946.8 469.9 947.4C471.3 948.1 479.8 945.8 481.8 946.4C483.7 946.9 488.5 951.9 489.4 953.1C490.2 954.3 489.7 957.9 490.3 958.4C490.8 958.9 494.2 957.3 494.7 958.4C495.1 959.6 493.9 968.7 494.7 969.9C495.5 971.1 502.3 970.2 502.3 970.4C502.3 970.7 495.7 972.8 494.7 972.6C493.7 972.3 493.2 968.8 492.0 968.1C490.8 967.5 484.2 965.8 482.8 965.8C481.4 965.9 478.9 968.6 477.9 969.0C476.9 969.5 473.7 971.2 472.9 970.4C472.1 969.6 471.1 961.8 469.9 961.1C468.7 960.3 461.8 963.0 461.1 962.8C460.4 962.7 463.1 960.2 462.8 959.3C462.6 958.4 459.8 954.8 458.8 954.0C457.7 953.2 452.4 951.9 452.2 951.3C452.0 950.7 456.9 948.7 457.0 947.8C457.1 946.9 452.6 943.1 453.1 942.5Z" fill="#34472a" stroke="#2f3728" stroke-width="1"/>
<path d="M474.3 978.8C474.9 977.3 481.3 970.5 483.2 969.9C485.0 969.3 491.4 971.5 492.9 972.6C494.4 973.6 497.1 978.8 498.2 980.5C499.4 982.3 504.3 989.1 504.4 990.3C504.5 991.4 499.9 991.3 499.1 992.0C498.3 992.7 497.5 997.5 496.5 997.3C495.4 997.2 489.5 991.5 488.5 990.3C487.5 989.0 487.8 985.6 486.7 985.0C485.7 984.3 479.1 984.7 477.9 984.1C476.6 983.5 473.8 980.2 474.3 978.8Z" fill="#34472a" stroke="#2f3728" stroke-width="1"/>
<path d="M474.3 994.7C475.4 994.3 483.4 998.9 485.0 999.1C486.5 999.3 489.8 995.9 490.3 996.5C490.7 997.0 488.2 1003.8 489.4 1004.4C490.5 1005.0 499.7 1002.7 501.8 1002.7C503.8 1002.6 508.3 1002.9 509.7 1003.5C511.2 1004.2 515.4 1007.3 515.9 1008.8C516.5 1010.4 515.4 1017.8 515.0 1018.6C514.7 1019.4 512.6 1016.5 512.4 1016.8C512.2 1017.2 512.7 1020.9 513.3 1022.1C513.8 1023.4 516.6 1028.7 517.7 1029.2C518.8 1029.7 523.2 1028.2 523.9 1027.4C524.6 1026.6 524.4 1021.6 524.8 1021.2C525.1 1020.9 526.3 1024.1 527.4 1023.9C528.6 1023.7 534.5 1019.5 536.3 1018.9C538.1 1018.4 544.3 1017.6 545.1 1018.2C545.9 1018.9 545.4 1024.7 544.2 1025.7C543.1 1026.7 534.4 1027.2 533.6 1028.3C532.8 1029.5 535.5 1036.4 536.3 1037.2C537.1 1038.0 539.5 1036.8 541.6 1036.3C543.7 1035.8 555.4 1032.0 557.5 1031.9C559.6 1031.7 562.2 1033.7 562.8 1034.5C563.5 1035.3 564.0 1038.9 563.7 1039.8C563.5 1040.7 559.6 1042.6 560.2 1043.4C560.8 1044.2 567.6 1048.0 569.9 1047.8C572.2 1047.6 581.8 1041.3 583.2 1041.6C584.6 1041.9 582.7 1049.6 584.1 1050.4C585.4 1051.3 595.1 1049.9 596.5 1050.4C597.8 1051.0 596.5 1055.2 597.3 1055.8C598.2 1056.3 604.7 1054.9 605.3 1055.8C605.9 1056.6 604.8 1064.2 603.5 1064.6C602.3 1065.0 594.9 1060.2 592.9 1060.2C591.0 1060.2 585.8 1064.7 584.1 1064.6C582.3 1064.5 577.2 1059.1 575.2 1059.3C573.3 1059.5 566.8 1065.8 564.6 1066.4C562.4 1067.0 554.5 1065.0 553.1 1065.5C551.7 1066.0 551.6 1071.1 550.4 1071.7C549.3 1072.3 543.0 1072.1 541.6 1071.7C540.2 1071.2 537.4 1067.2 536.3 1067.3C535.1 1067.3 531.7 1072.0 530.1 1072.6C528.5 1073.1 521.2 1073.3 520.4 1072.6C519.5 1071.9 521.9 1066.4 521.2 1065.5C520.5 1064.6 513.9 1064.5 513.3 1063.7C512.7 1062.9 515.8 1058.7 515.0 1057.5C514.3 1056.4 507.4 1051.7 506.2 1052.2C505.0 1052.7 503.7 1061.3 502.7 1062.8C501.6 1064.3 497.3 1067.2 495.6 1067.3C493.8 1067.3 487.1 1064.2 485.0 1063.7C482.8 1063.3 476.1 1063.6 474.3 1062.8C472.6 1062.0 468.8 1055.7 467.3 1055.8C465.7 1055.8 459.9 1062.5 458.4 1063.7C456.9 1065.0 453.4 1067.8 452.2 1068.1C451.1 1068.5 447.3 1068.3 446.9 1067.3C446.5 1066.2 447.2 1058.8 447.8 1057.5C448.4 1056.2 452.8 1054.9 453.1 1054.0C453.4 1053.1 449.6 1049.3 450.4 1048.7C451.2 1048.1 460.3 1049.7 461.1 1047.8C461.9 1045.8 458.1 1031.3 458.4 1029.2C458.8 1027.1 464.0 1027.8 464.6 1026.5C465.2 1025.3 464.0 1018.5 464.6 1016.8C465.2 1015.1 470.6 1010.9 470.8 1009.7C471.0 1008.6 466.0 1006.0 466.4 1005.3C466.7 1004.6 473.5 1003.7 474.3 1002.7C475.1 1001.6 473.3 995.0 474.3 994.7Z" fill="#34472a" stroke="#2f3728" stroke-width="1"/>
<path d="M471.7 1050.4C471.8 1048.9 473.4 1043.0 474.3 1041.6C475.3 1040.2 480.0 1036.6 481.4 1036.3C482.8 1035.9 487.3 1038.9 488.5 1038.1C489.7 1037.2 492.9 1028.8 493.8 1027.4C494.7 1026.0 496.7 1023.5 497.3 1023.9C498.0 1024.2 499.3 1029.8 500.0 1031.0C500.7 1032.1 503.6 1035.1 504.4 1035.4C505.2 1035.7 507.3 1033.7 508.0 1034.2C508.6 1034.6 510.2 1038.7 510.6 1039.8C511.0 1040.9 512.5 1044.2 511.9 1045.1C511.2 1046.0 505.3 1047.2 504.4 1048.7C503.6 1050.2 504.2 1058.8 503.5 1060.2C502.8 1061.6 498.0 1062.1 497.3 1062.8C496.7 1063.5 498.2 1067.1 497.0 1067.3C495.8 1067.4 486.9 1065.1 485.0 1064.6C483.0 1064.1 479.1 1062.7 477.9 1061.9C476.7 1061.2 473.5 1057.8 472.9 1056.6C472.3 1055.5 471.5 1051.9 471.7 1050.4Z" fill="#151a12" stroke="#2f3728" stroke-width="1"/>
<path d="M1300 1051.5H216.500" stroke="#000" stroke-width="1" fill="none"/>
<path d="M1300 164.500H204.500V1063.500H1300" stroke="#f00" stroke-width="1.200" fill="none"/>
</svg>
</div>
<svg style="left:0;top:0" width="1695" height="1164" viewBox="0 0 1695 1164">
<rect x="57" y="136" width="16" height="16" fill="#292929"/>
<path d="M57 141.500H73M61.500 137V152" stroke="#8a8a8a" stroke-width="1" stroke-dasharray="1 1.2" fill="none"/>
<path d="M76.50 148V152M92.50 148V152M101.50 148V152M109.50 148V152M117.50 148V152M134.50 148V152M142.50 148V152M151.50 148V152M159.50 148V152M176.50 148V152M184.50 148V152M192.50 148V152M201.50 148V152M217.50 148V152M226.50 148V152M234.50 148V152M242.50 148V152M259.50 148V152M267.50 148V152M276.50 148V152M284.50 148V152M301.50 148V152M309.50 148V152M318.50 148V152M326.50 148V152M343.50 148V152M351.50 148V152M359.50 148V152M368.50 148V152M384.50 148V152M393.50 148V152M401.50 148V152M409.50 148V152M426.50 148V152M434.50 148V152M443.50 148V152M451.50 148V152M468.50 148V152M476.50 148V152M484.50 148V152M493.50 148V152M509.50 148V152M518.50 148V152M526.50 148V152M534.50 148V152M551.50 148V152M559.50 148V152M568.50 148V152M576.50 148V152M593.50 148V152M601.50 148V152M609.50 148V152M618.50 148V152M634.50 148V152M643.50 148V152M651.50 148V152M659.50 148V152M676.50 148V152M684.50 148V152M693.50 148V152M701.50 148V152M718.50 148V152M726.50 148V152M735.50 148V152M743.50 148V152M760.50 148V152M768.50 148V152M776.50 148V152M785.50 148V152M801.50 148V152M810.50 148V152M818.50 148V152M826.50 148V152M843.50 148V152M851.50 148V152M860.50 148V152M868.50 148V152M885.50 148V152M893.50 148V152M901.50 148V152M910.50 148V152M926.50 148V152M935.50 148V152M943.50 148V152M951.50 148V152M968.50 148V152M976.50 148V152M985.50 148V152M993.50 148V152M1010.50 148V152M1018.50 148V152M1026.50 148V152M1035.50 148V152M1051.50 148V152M1060.50 148V152M1068.50 148V152M1076.50 148V152M1093.50 148V152M1101.50 148V152M1110.50 148V152M1118.50 148V152M1135.50 148V152M1143.50 148V152M1152.50 148V152M1160.50 148V152M1177.50 148V152M1185.50 148V152M1193.50 148V152M1202.50 148V152M1218.50 148V152M1227.50 148V152M1235.50 148V152M1243.50 148V152" stroke="#858585" stroke-width="1" fill="none" shape-rendering="crispEdges"/>
<path d="M84.50 136V152M126.50 136V152M167.50 136V152M209.50 136V152M251.50 136V152M293.50 136V152M334.50 136V152M376.50 136V152M418.50 136V152M459.50 136V152M501.50 136V152M543.50 136V152M584.50 136V152M626.50 136V152M668.50 136V152M710.50 136V152M751.50 136V152M793.50 136V152M835.50 136V152M876.50 136V152M918.50 136V152M960.50 136V152M1001.50 136V152M1043.50 136V152M1085.50 136V152M1127.50 136V152M1168.50 136V152M1210.50 136V152M1252.50 136V152" stroke="#757575" stroke-width="1" fill="none" shape-rendering="crispEdges"/>
<rect x="85.5" y="137" width="28.1" height="13" fill="#292929"/>
<text x="87.7" y="149.9" class="rt" letter-spacing=".35">120</text>
<rect x="127.2" y="137" width="28.1" height="13" fill="#292929"/>
<text x="129.4" y="149.9" class="rt" letter-spacing=".35">130</text>
<rect x="168.9" y="137" width="28.1" height="13" fill="#292929"/>
<text x="171.1" y="149.9" class="rt" letter-spacing=".35">140</text>
<rect x="210.6" y="137" width="28.1" height="13" fill="#292929"/>
<text x="212.8" y="149.9" class="rt" letter-spacing=".35">150</text>
<rect x="252.3" y="137" width="28.1" height="13" fill="#292929"/>
<text x="254.5" y="149.9" class="rt" letter-spacing=".35">160</text>
<rect x="294.0" y="137" width="28.1" height="13" fill="#292929"/>
<text x="296.2" y="149.9" class="rt" letter-spacing=".35">170</text>
<rect x="335.7" y="137" width="28.1" height="13" fill="#292929"/>
<text x="337.9" y="149.9" class="rt" letter-spacing=".35">180</text>
<rect x="377.4" y="137" width="28.1" height="13" fill="#292929"/>
<text x="379.6" y="149.9" class="rt" letter-spacing=".35">190</text>
<rect x="419.1" y="137" width="28.1" height="13" fill="#292929"/>
<text x="421.3" y="149.9" class="rt" letter-spacing=".35">200</text>
<rect x="460.8" y="137" width="28.1" height="13" fill="#292929"/>
<text x="463.0" y="149.9" class="rt" letter-spacing=".35">210</text>
<rect x="502.5" y="137" width="28.1" height="13" fill="#292929"/>
<text x="504.7" y="149.9" class="rt" letter-spacing=".35">220</text>
<rect x="544.2" y="137" width="28.1" height="13" fill="#292929"/>
<text x="546.4" y="149.9" class="rt" letter-spacing=".35">230</text>
<rect x="585.9" y="137" width="28.1" height="13" fill="#292929"/>
<text x="588.1" y="149.9" class="rt" letter-spacing=".35">240</text>
<rect x="627.6" y="137" width="28.1" height="13" fill="#292929"/>
<text x="629.8" y="149.9" class="rt" letter-spacing=".35">250</text>
<rect x="669.3" y="137" width="28.1" height="13" fill="#292929"/>
<text x="671.5" y="149.9" class="rt" letter-spacing=".35">260</text>
<rect x="711.0" y="137" width="28.1" height="13" fill="#292929"/>
<text x="713.2" y="149.9" class="rt" letter-spacing=".35">270</text>
<rect x="752.7" y="137" width="28.1" height="13" fill="#292929"/>
<text x="754.9" y="149.9" class="rt" letter-spacing=".35">280</text>
<rect x="794.4" y="137" width="28.1" height="13" fill="#292929"/>
<text x="796.6" y="149.9" class="rt" letter-spacing=".35">290</text>
<rect x="836.1" y="137" width="28.1" height="13" fill="#292929"/>
<text x="838.3" y="149.9" class="rt" letter-spacing=".35">300</text>
<rect x="877.8" y="137" width="28.1" height="13" fill="#292929"/>
<text x="880.0" y="149.9" class="rt" letter-spacing=".35">310</text>
<rect x="919.5" y="137" width="28.1" height="13" fill="#292929"/>
<text x="921.7" y="149.9" class="rt" letter-spacing=".35">320</text>
<rect x="961.2" y="137" width="28.1" height="13" fill="#292929"/>
<text x="963.4" y="149.9" class="rt" letter-spacing=".35">330</text>
<rect x="1002.9" y="137" width="28.1" height="13" fill="#292929"/>
<text x="1005.1" y="149.9" class="rt" letter-spacing=".35">340</text>
<rect x="1044.6" y="137" width="28.1" height="13" fill="#292929"/>
<text x="1046.8" y="149.9" class="rt" letter-spacing=".35">350</text>
<rect x="1086.3" y="137" width="28.1" height="13" fill="#292929"/>
<text x="1088.5" y="149.9" class="rt" letter-spacing=".35">360</text>
<rect x="1128.0" y="137" width="28.1" height="13" fill="#292929"/>
<text x="1130.2" y="149.9" class="rt" letter-spacing=".35">370</text>
<rect x="1169.7" y="137" width="28.1" height="13" fill="#292929"/>
<text x="1171.9" y="149.9" class="rt" letter-spacing=".35">380</text>
<rect x="1211.4" y="137" width="28.1" height="13" fill="#292929"/>
<text x="1213.6" y="149.9" class="rt" letter-spacing=".35">390</text>
<rect x="1253.1" y="137" width="28.1" height="13" fill="#292929"/>
<text x="1255.3" y="149.9" class="rt" letter-spacing=".35">400</text>
<path d="M69 159.5H73M69 168.5H73M69 184.5H73M69 193.5H73M69 201.5H73M69 209.5H73M69 226.5H73M69 234.5H73M69 243.5H73M69 251.5H73M69 268.5H73M69 276.5H73M69 284.5H73M69 293.5H73M69 309.5H73M69 318.5H73M69 326.5H73M69 334.5H73M69 351.5H73M69 359.5H73M69 368.5H73M69 376.5H73M69 393.5H73M69 401.5H73M69 409.5H73M69 418.5H73M69 434.5H73M69 443.5H73M69 451.5H73M69 459.5H73M69 476.5H73M69 484.5H73M69 493.5H73M69 501.5H73M69 518.5H73M69 526.5H73M69 534.5H73M69 543.5H73M69 559.5H73M69 568.5H73M69 576.5H73M69 584.5H73M69 601.5H73M69 609.5H73M69 618.5H73M69 626.5H73M69 643.5H73M69 651.5H73M69 659.5H73M69 668.5H73M69 684.5H73M69 693.5H73M69 701.5H73M69 709.5H73M69 726.5H73M69 734.5H73M69 743.5H73M69 751.5H73M69 768.5H73M69 776.5H73M69 784.5H73M69 793.5H73M69 809.5H73M69 818.5H73M69 826.5H73M69 834.5H73M69 851.5H73M69 859.5H73M69 868.5H73M69 876.5H73M69 893.5H73M69 901.5H73M69 909.5H73M69 918.5H73M69 934.5H73M69 943.5H73M69 951.5H73M69 959.5H73M69 976.5H73M69 984.5H73M69 993.5H73M69 1001.5H73M69 1018.5H73M69 1026.5H73M69 1034.5H73M69 1043.5H73M69 1059.5H73M69 1068.5H73" stroke="#858585" stroke-width="1" fill="none" shape-rendering="crispEdges"/>
<path d="M57 176.5H73M57 218.5H73M57 259.5H73M57 301.5H73M57 343.5H73M57 384.5H73M57 426.5H73M57 468.5H73M57 509.5H73M57 551.5H73M57 593.5H73M57 634.5H73M57 676.5H73M57 718.5H73M57 759.5H73M57 801.5H73M57 843.5H73M57 884.5H73M57 926.5H73M57 968.5H73M57 1009.5H73M57 1051.5H73" stroke="#757575" stroke-width="1" fill="none" shape-rendering="crispEdges"/>
<text x="63" y="160.5" class="rt" text-anchor="middle">3</text>
<text x="63" y="169.8" class="rt" text-anchor="middle">0</text>
<text x="63" y="202.2" class="rt" text-anchor="middle">2</text>
<text x="63" y="211.5" class="rt" text-anchor="middle">0</text>
<text x="63" y="243.8" class="rt" text-anchor="middle">1</text>
<text x="63" y="253.1" class="rt" text-anchor="middle">0</text>
<text x="63" y="294.8" class="rt" text-anchor="middle">0</text>
<text x="63" y="327.2" class="rt" text-anchor="middle">1</text>
<text x="63" y="336.5" class="rt" text-anchor="middle">0</text>
<text x="63" y="368.8" class="rt" text-anchor="middle">2</text>
<text x="63" y="378.1" class="rt" text-anchor="middle">0</text>
<text x="63" y="410.5" class="rt" text-anchor="middle">3</text>
<text x="63" y="419.8" class="rt" text-anchor="middle">0</text>
<text x="63" y="452.2" class="rt" text-anchor="middle">4</text>
<text x="63" y="461.5" class="rt" text-anchor="middle">0</text>
<text x="63" y="493.8" class="rt" text-anchor="middle">5</text>
<text x="63" y="503.1" class="rt" text-anchor="middle">0</text>
<text x="63" y="535.5" class="rt" text-anchor="middle">6</text>
<text x="63" y="544.8" class="rt" text-anchor="middle">0</text>
<text x="63" y="577.2" class="rt" text-anchor="middle">7</text>
<text x="63" y="586.5" class="rt" text-anchor="middle">0</text>
<text x="63" y="618.8" class="rt" text-anchor="middle">8</text>
<text x="63" y="628.1" class="rt" text-anchor="middle">0</text>
<text x="63" y="660.5" class="rt" text-anchor="middle">9</text>
<text x="63" y="669.8" class="rt" text-anchor="middle">0</text>
<text x="63" y="692.9" class="rt" text-anchor="middle">1</text>
<text x="63" y="702.2" class="rt" text-anchor="middle">0</text>
<text x="63" y="711.5" class="rt" text-anchor="middle">0</text>
<text x="63" y="734.5" class="rt" text-anchor="middle">1</text>
<text x="63" y="743.8" class="rt" text-anchor="middle">1</text>
<text x="63" y="753.1" class="rt" text-anchor="middle">0</text>
<text x="63" y="776.2" class="rt" text-anchor="middle">1</text>
<text x="63" y="785.5" class="rt" text-anchor="middle">2</text>
<text x="63" y="794.8" class="rt" text-anchor="middle">0</text>
<text x="63" y="817.9" class="rt" text-anchor="middle">1</text>
<text x="63" y="827.2" class="rt" text-anchor="middle">3</text>
<text x="63" y="836.5" class="rt" text-anchor="middle">0</text>
<text x="63" y="859.5" class="rt" text-anchor="middle">1</text>
<text x="63" y="868.8" class="rt" text-anchor="middle">4</text>
<text x="63" y="878.1" class="rt" text-anchor="middle">0</text>
<text x="63" y="901.2" class="rt" text-anchor="middle">1</text>
<text x="63" y="910.5" class="rt" text-anchor="middle">5</text>
<text x="63" y="919.8" class="rt" text-anchor="middle">0</text>
<text x="63" y="942.9" class="rt" text-anchor="middle">1</text>
<text x="63" y="952.2" class="rt" text-anchor="middle">6</text>
<text x="63" y="961.5" class="rt" text-anchor="middle">0</text>
<text x="63" y="984.5" class="rt" text-anchor="middle">1</text>
<text x="63" y="993.8" class="rt" text-anchor="middle">7</text>
<text x="63" y="1003.1" class="rt" text-anchor="middle">0</text>
<text x="63" y="1026.2" class="rt" text-anchor="middle">1</text>
<text x="63" y="1035.5" class="rt" text-anchor="middle">8</text>
<text x="63" y="1044.8" class="rt" text-anchor="middle">0</text>
</svg>
<!-- vertical scrollbar -->
<div id="vs">
  <svg style="left:3px;top:6px" width="10" height="6" viewBox="0 0 10 6"><path d="M1 5L5 1L9 5" stroke="#9a9a9a" stroke-width="1.2" fill="none"/></svg>
  <i style="left:1.500px;top:456px;width:13.5px;height:26px;border-radius:7px;background:#565656"></i>
  <svg style="left:3px;top:925px" width="10" height="6" viewBox="0 0 10 6"><path d="M1 1L5 5L9 1" stroke="#9a9a9a" stroke-width="1.2" fill="none"/></svg>
  <i style="left:0;top:937px;width:16px;height:17px;background:#4a4a4a"></i>
</div>
<!-- status bar -->
<div id="status">
<div class="fld" style="left:5px;top:1px;width:69px;height:20px;background:#3e3e3e;border-color:#5a5a5a"></div>
<i style="left:55px;top:2px;width:1px;height:18px;background:#5a5a5a"></i><i style="left:56px;top:2px;width:17px;height:15px;background:#464646"></i>
<div class="lbl" style="left:9px;top:4.5px;font-size:11px;color:#e6e6e6">147%</div>
<svg style="left:59px;top:7px" width="9" height="6" viewBox="0 0 9 6"><path d="M1 1L4.5 4.5L8 1" stroke="#dcdcdc" stroke-width="1.3" fill="none"/></svg>
<div class="fld" style="left:78px;top:1px;width:69px;height:20px;background:#3e3e3e;border-color:#5a5a5a"></div>
<i style="left:128px;top:2px;width:1px;height:18px;background:#5a5a5a"></i><i style="left:129px;top:2px;width:17px;height:15px;background:#464646"></i>
<div class="lbl" style="left:82px;top:5px;font-size:11px;color:#e6e6e6">0°</div>
<svg style="left:132px;top:7px" width="9" height="6" viewBox="0 0 9 6"><path d="M1 1L4.5 4.5L8 1" stroke="#dcdcdc" stroke-width="1.3" fill="none"/></svg>
<svg style="left:154px;top:4px" width="26" height="9" viewBox="0 0 26 9"><path d="M1.2 0.5V8.5" stroke="#707070" stroke-width="1.4"/><path d="M8 0.5V8.5L2.6 4.5Z" fill="#707070"/><path d="M23.5 0.5V8.5L18 4.5Z" fill="#707070"/></svg>
<div class="fld" style="left:187px;top:1px;width:59px;height:20px;background:#3e3e3e;border-color:#5a5a5a"></div>
<i style="left:227px;top:2px;width:1px;height:18px;background:#5a5a5a"></i><i style="left:228px;top:2px;width:17px;height:15px;background:#464646"></i>
<div class="lbl" style="left:192px;top:5px;font-size:11px;color:#e6e6e6">1</div>
<svg style="left:231px;top:7px" width="9" height="6" viewBox="0 0 9 6"><path d="M1 1L4.5 4.5L8 1" stroke="#dcdcdc" stroke-width="1.3" fill="none"/></svg>
<svg style="left:254px;top:4px" width="26" height="9" viewBox="0 0 26 9"><path d="M1.5 0.5V8.5L7 4.5Z" fill="#707070"/><path d="M17 0.5V8.5L22.4 4.5Z" fill="#707070"/><path d="M23.8 0.5V8.5" stroke="#707070" stroke-width="1.4"/></svg>
<div class="fld" style="left:288px;top:1px;width:219px;height:20px;background:#4c4c4c;border-color:#5a5a5a"></div>
<i style="left:488px;top:2px;width:1px;height:18px;background:#5a5a5a"></i>
<div class="lbl" style="left:288px;top:1.500px;width:200px;text-align:center;font-size:11px;color:#dadada">選択</div>
<svg style="left:493px;top:3.5px" width="8" height="10" viewBox="0 0 8 10"><path d="M1 0.5V9.5L7.4 5Z" fill="#e0e0e0"/></svg>
<svg style="left:511px;top:3px" width="6" height="9" viewBox="0 0 6 9"><path d="M5 1L1.4 4.5L5 8" stroke="#9a9a9a" stroke-width="1.2" fill="none"/></svg>
<i style="left:836px;top:2px;width:26px;height:12.5px;border-radius:6.5px;background:#585858"></i>
<svg style="left:1190px;top:4px" width="6" height="9" viewBox="0 0 6 9"><path d="M1 1L4.6 4.5L1 8" stroke="#9a9a9a" stroke-width="1.2" fill="none"/></svg>

</div>
<!-- dock -->
<div id="dock"></div>
<!-- dock header strip -->
<div style="left:1275px;top:107px;width:364px;height:12px;background:#3a3a3a"></div>
<svg style="left:1503px;top:109px" width="9" height="6" viewBox="0 0 9 6"><path d="M1 .6L3.4 3L1 5.4M5.4 .6L7.8 3L5.4 5.4" stroke="#b4b4b4" stroke-width="1.1" fill="none"/></svg>
<svg style="left:1545px;top:109px" width="9" height="6" viewBox="0 0 9 6"><path d="M3.6 .6L1.2 3L3.6 5.4M8 .6L5.6 3L8 5.4" stroke="#b4b4b4" stroke-width="1.1" fill="none"/></svg>
<svg style="left:1585px;top:109px" width="9" height="6" viewBox="0 0 9 6"><path d="M3.6 .6L1.2 3L3.6 5.4M8 .6L5.6 3L8 5.4" stroke="#b4b4b4" stroke-width="1.1" fill="none"/></svg>
<svg style="left:1625px;top:109px" width="9" height="6" viewBox="0 0 9 6"><path d="M3.6 .6L1.2 3L3.6 5.4M8 .6L5.6 3L8 5.4" stroke="#b4b4b4" stroke-width="1.1" fill="none"/></svg>
<i style="left:1275px;top:106px;width:3px;height:984px;background:#353535"></i>
<i style="left:1278px;top:118px;width:361px;height:1px;background:#333"></i>
<!-- layers panel -->
<div class="pn" style="left:1278px;top:119px;width:240px;height:971px"></div>
<div style="left:1278px;top:119px;width:240px;height:26.5px;background:#3a3a3a"></div>
<div style="left:1361px;top:119px;width:61px;height:27px;background:#4a4a4a"></div>
<div style="left:1287.500px;top:123px;font-size:11.500px;color:#a6a6a6;font-weight:500;white-space:nowrap;letter-spacing:-.55px">アートボード</div>
<div style="left:1371.500px;top:123px;font-size:11.5px;color:#e4e4e4;white-space:nowrap;font-weight:500;letter-spacing:-.5px">レイヤー</div>
<svg style="left:1501.5px;top:128.5px" width="11" height="9" viewBox="0 0 11 9"><path d="M0 1H10.5M0 4.2H10.5M0 7.4H10.5" stroke="#d2d2d2" stroke-width="1.1"/></svg>
<div style="left:1283px;top:152px;width:229px;height:917px;border:1px solid #585858;border-radius:2px"></div>
<i style="left:1304px;top:153px;width:1px;height:252.5px;background:#585858"></i>
<i style="left:1325px;top:153px;width:1px;height:252.5px;background:#585858"></i>
<i style="left:1476px;top:153px;width:1px;height:252.5px;background:#585858"></i>
<div class="lrow" style="top:154.00px">
<i class="cb" style="background:#0e9494"></i>
<svg class="chev" width="5" height="7.500" viewBox="0 0 6 9"><path d="M1 0.8L4.8 4.5L1 8.2" stroke="#d6d6d6" stroke-width="1.3" fill="none"/></svg>
<span class="th"></span>
<span class="ln">サイン</span>
<i class="tc"></i>
</div>
<div class="lrow" style="top:175.05px">
<svg class="eye" width="12" height="7.800" viewBox="0 0 14 9"><path d="M0.3 4.5C2 1.6 4.4 0.4 7 0.4S12 1.6 13.7 4.5C12 7.4 9.6 8.6 7 8.6S2 7.4 0.3 4.5Z" fill="#cfcfcf"/><circle cx="7" cy="4.3" r="2.9" fill="#4a4a4a"/><circle cx="7" cy="4.3" r="1.7" fill="#cfcfcf"/><circle cx="6.3" cy="3.7" r="0.7" fill="#4a4a4a"/></svg>
<i class="cb" style="background:#f248e6"></i>
<svg class="chev" width="5" height="7.500" viewBox="0 0 6 9"><path d="M1 0.8L4.8 4.5L1 8.2" stroke="#d6d6d6" stroke-width="1.3" fill="none"/></svg>
<span class="th"><svg width="16" height="16" viewBox="0 0 16 16"><path d="M0 10.500L3 9L6 8.500L9 5.500L11.500 4.500L16 6V10L12 9.500L8 10.500L4 11L0 11.500Z" fill="#5d6d49"/><path d="M7 8L10 5.500L13 6.500L16 7V9L12 9L8.500 10Z" fill="#39452f"/><path d="M0 10.800L3 9.600L5 9.800L2 11Z" fill="#3b4630"/></svg></span>
<span class="ln">レイヤー 5</span>
<i class="tc"></i>
</div>
<div class="lrow" style="top:196.10px">
<i class="cb" style="background:#4a4af2"></i>
<svg class="chev" width="5" height="7.500" viewBox="0 0 6 9"><path d="M1 0.8L4.8 4.5L1 8.2" stroke="#d6d6d6" stroke-width="1.3" fill="none"/></svg>
<span class="th"><svg width="16" height="16" viewBox="0 0 16 16"><path d="M1 10L5 9L8.500 8L9 9.500L4 11L1 11Z" fill="#5b664c"/><path d="M8 8.500L11 6.500L12.500 7L13.500 5L15 6.500L15 10L12 10.500L9.500 11L8.500 10Z" fill="#16181a"/></svg></span>
<span class="ln">柵</span>
<i class="tc"></i>
</div>
<div class="lrow" style="top:217.15px">
<i class="cb" style="background:#cf9a62"></i>
<svg class="chev" width="5" height="7.500" viewBox="0 0 6 9"><path d="M1 0.8L4.8 4.5L1 8.2" stroke="#d6d6d6" stroke-width="1.3" fill="none"/></svg>
<span class="th"><svg width="16" height="16" viewBox="0 0 16 16"><path d="M1.500 8.500C3 7 6 7.500 8 6.500S13 5 15 6V8.500C12 9 10 9.500 8 10S3 11 1.500 10.500Z" fill="#d9d6d2"/></svg></span>
<span class="ln">てくす2</span>
<i class="tc"></i>
</div>
<div class="lrow" style="top:238.20px">
<i class="cb" style="background:#f24848"></i>
<svg class="chev" width="5" height="7.500" viewBox="0 0 6 9"><path d="M1 0.8L4.8 4.5L1 8.2" stroke="#d6d6d6" stroke-width="1.3" fill="none"/></svg>
<span class="th"><svg width="16" height="16" viewBox="0 0 16 16"><path d="M0 9L3 8L7 7L11 6L14 5.500L13 7.500L9 9L5 10.500L1 11L0 11Z" fill="#39434c"/><path d="M0 9.500L4 8.500L5 9.500L1 11Z" fill="#1e2a3a"/><path d="M5 9L9 7.500L10 8.500L6 10Z" fill="#5a6455"/></svg></span>
<span class="ln">レイヤー 2</span>
<i class="tc"></i>
</div>
<div class="lrow" style="top:259.25px">
<i class="cb" style="background:#0c5a0c"></i>
<svg class="chev" width="5" height="7.500" viewBox="0 0 6 9"><path d="M1 0.8L4.8 4.5L1 8.2" stroke="#d6d6d6" stroke-width="1.3" fill="none"/></svg>
<span class="th"><svg width="16" height="16" viewBox="0 0 16 16"><path d="M0.500 6.500C3 5.500 8 6 14.500 6L15 10.500C10 11.500 4 11 0.500 11Z" fill="#241b17"/></svg></span>
<span class="ln">背景ブッ...</span>
<i class="tc"></i>
</div>
<div class="lrow" style="top:280.30px">
<i class="cb" style="background:#48f248"></i>
<svg class="chev" width="5" height="7.500" viewBox="0 0 6 9"><path d="M1 0.8L4.8 4.5L1 8.2" stroke="#d6d6d6" stroke-width="1.3" fill="none"/></svg>
<span class="th"><svg width="16" height="16" viewBox="0 0 16 16"><path d="M0.500 8.500L3 7.500L6 7L9 6L12 4.500L14 4.500L13 5.500L10 7.500L7 8.500L5 10L2 10.500L0.500 10.500Z" fill="#4f5348"/><path d="M11.500 4.800L14.500 4.300L14 5.500L12 6Z" fill="#2a2d2a"/></svg></span>
<span class="ln">海1</span>
<i class="tc"></i>
</div>
<div class="lrow" style="top:301.35px">
<i class="cb" style="background:#48f2f2"></i>
<svg class="chev" width="5" height="7.500" viewBox="0 0 6 9"><path d="M1 0.8L4.8 4.5L1 8.2" stroke="#d6d6d6" stroke-width="1.3" fill="none"/></svg>
<span class="th"><svg width="16" height="16" viewBox="0 0 16 16"><path d="M1 7.500H10L15 7V8.500L9 9L1 8.800Z" fill="#23272b"/><path d="M9 7.300L15 7V7.800L10 8Z" fill="#4a5a40"/></svg></span>
<span class="ln">海2（0.1）</span>
<i class="tc"></i>
</div>
<div class="lrow" style="top:322.40px">
<i class="cb" style="background:#8a2be8"></i>
<svg class="chev" width="5" height="7.500" viewBox="0 0 6 9"><path d="M1 0.8L4.8 4.5L1 8.2" stroke="#d6d6d6" stroke-width="1.3" fill="none"/></svg>
<span class="th"><svg width="16" height="16" viewBox="0 0 16 16"><path d="M0.500 7.500L5 7L10 6.500L15 6.500V8L10 8.500L5 9L0.500 9.500Z" fill="#5c5a48"/><path d="M1 8.200L7 7.600L7 8.600L1 9.200Z" fill="#2f2f28"/></svg></span>
<span class="ln">ハマ</span>
<i class="tc"></i>
</div>
<div class="lrow" style="top:343.45px">
<i class="cb" style="background:#4a4af2"></i>
<svg class="chev" width="5" height="7.500" viewBox="0 0 6 9"><path d="M1 0.8L4.8 4.5L1 8.2" stroke="#d6d6d6" stroke-width="1.3" fill="none"/></svg>
<span class="th"><svg width="16" height="16" viewBox="0 0 16 16"><path d="M0 7.300H2M3.500 7.300H5M6.500 7.300H8M9.500 7.300H11" stroke="#1a1a1a" stroke-width="1"/><path d="M11.500 6.500L14 6L15.500 8.500L15.500 10L13 8.500Z" fill="#16181a"/></svg></span>
<span class="ln">車列</span>
<i class="tc"></i>
</div>
<div class="lrow" style="top:364.50px">
<i class="cb" style="background:#808080"></i>
<svg class="chev" width="5" height="7.500" viewBox="0 0 6 9"><path d="M1 0.8L4.8 4.5L1 8.2" stroke="#d6d6d6" stroke-width="1.3" fill="none"/></svg>
<span class="th"><svg width="16" height="16" viewBox="0 0 16 16"><path d="M1 8.200H15V9.400H1Z" fill="#2c2c2c"/><path d="M6 8.200H15V8.800H6Z" fill="#55574c"/></svg></span>
<span class="ln">道路向こ...</span>
<i class="tc"></i>
</div>
<div class="lrow" style="top:385.55px">
<i class="cb" style="background:#f26410"></i>
<svg class="chev" width="5" height="7.500" viewBox="0 0 6 9"><path d="M1 0.8L4.8 4.5L1 8.2" stroke="#d6d6d6" stroke-width="1.3" fill="none"/></svg>
<span class="th"><svg width="16" height="16" viewBox="0 0 16 16"><rect x="0" y="4.500" width="16" height="4.500" fill="#5bbdee"/><path d="M0.500 8.500H12L14.500 10L11 9.800H0.500Z" fill="#3a4a4a"/></svg></span>
<span class="ln">山</span>
<i class="tc"></i>
</div>
<svg style="left:1506px;top:217.500px" width="7" height="7" viewBox="0 0 7 7"><path d="M0 0H6.5V6.5Z" fill="#d2d2d2"/></svg>
<!-- layers footer -->
<div style="left:1284.500px;top:1070px;font-size:12.500px;font-weight:500;color:#dcdcdc;white-space:nowrap;letter-spacing:-.3px">12レ...</div>
<svg style="left:1347px;top:1072px" width="14" height="14" viewBox="0 0 14 14"><path d="M6 3H1.600V12.400H11V8" stroke="#6a6a6a" stroke-width="1.100" fill="none"/><path d="M6.400 7.600L12.400 1.600M8.400 1.400H12.600V5.600" stroke="#6a6a6a" stroke-width="1.100" fill="none"/></svg>
<svg style="left:1374px;top:1072px" width="14" height="14" viewBox="0 0 14 14"><circle cx="5.400" cy="5.400" r="3.900" stroke="#6a6a6a" stroke-width="1.100" fill="none"/><path d="M8.200 8.200L12.800 12.800" stroke="#6a6a6a" stroke-width="1.500"/></svg>
<svg style="left:1399px;top:1073px" width="13" height="13" viewBox="0 0 13 13"><rect x="1" y="1" width="7.600" height="7.600" fill="#646464" stroke="#6e6e6e" stroke-width="1"/><rect x="4.600" y="4.600" width="7.400" height="7.400" fill="none" stroke="#6e6e6e" stroke-width="1"/></svg>
<svg style="left:1423px;top:1072px" width="18" height="14" viewBox="0 0 18 14"><path d="M1.400 1V5.400H6.600M4.600 3L7 5.400L4.600 7.800" stroke="#6a6a6a" stroke-width="1.100" fill="none"/><rect x="8.400" y="3" width="8.400" height="9.400" stroke="#6a6a6a" stroke-width="1" fill="none"/><path d="M10.400 7.700H14.800M12.600 5.500V9.900" stroke="#6a6a6a" stroke-width="1"/></svg>
<svg style="left:1452px;top:1072px" width="14" height="14" viewBox="0 0 14 14"><rect x="1.200" y="1.200" width="11.400" height="11.400" stroke="#dcdcdc" stroke-width="1.200" fill="none"/><path d="M4 6.900H9.800M6.900 4V9.800" stroke="#dcdcdc" stroke-width="1.200"/></svg>
<svg style="left:1478px;top:1071px" width="14" height="15" viewBox="0 0 14 15"><path d="M1 3.400H13M5 3.200V1.400H9V3.200" stroke="#686868" stroke-width="1.100" fill="none"/><path d="M2.400 4L3 14H11L11.600 4" stroke="#686868" stroke-width="1.100" fill="none"/><path d="M5 6V12M7 6V12M9 6V12" stroke="#686868" stroke-width=".9"/></svg>

<!-- icon columns -->
<div class="pn" style="left:1521px;top:119px;width:37px;height:40.3px"></div>
<div class="pn" style="left:1521px;top:160px;width:37px;height:40.3px"></div>
<div class="pn" style="left:1521px;top:201px;width:37px;height:40.3px"></div>
<div class="pn" style="left:1521px;top:242px;width:37px;height:40.3px"></div>
<div class="pn" style="left:1521px;top:283px;width:37px;height:96.3px"></div>
<div class="pn" style="left:1521px;top:380px;width:37px;height:710px"></div>
<div class="pn" style="left:1561px;top:119px;width:37px;height:40.3px"></div>
<div class="pn" style="left:1561px;top:160px;width:37px;height:40.3px"></div>
<div class="pn" style="left:1561px;top:201px;width:37px;height:68.3px"></div>
<div class="pn" style="left:1561px;top:270px;width:37px;height:820px"></div>
<div class="pn" style="left:1601px;top:119px;width:38px;height:40.3px"></div>
<div class="pn" style="left:1601px;top:160px;width:38px;height:95.500px"></div>
<div class="pn" style="left:1601px;top:256.500px;width:38px;height:834px"></div>
<i class="grip" style="left:1530px;top:122px"></i><i class="grip" style="left:1530px;top:163px"></i><i class="grip" style="left:1530px;top:204px"></i><i class="grip" style="left:1530px;top:245px"></i><i class="grip" style="left:1530px;top:286px"></i>
<i class="grip" style="left:1570px;top:122px"></i><i class="grip" style="left:1570px;top:163px"></i><i class="grip" style="left:1570px;top:204px"></i>
<i class="grip" style="left:1610px;top:122px"></i><i class="grip" style="left:1610px;top:163px"></i>
<!-- col1 -->
<svg style="left:1531px;top:133px" width="20" height="19" viewBox="0 0 20 19"><path d="M3.4 1H15.6A2.4 2.4 0 0 1 18 3.400V10.600A2.400 2.400 0 0 1 15.600 13H9.200L4.400 18V13H3.400A2.400 2.400 0 0 1 1 10.600V3.400A2.400 2.400 0 0 1 3.400 1Z" fill="#bdbdbd"/></svg>
<svg style="left:1531px;top:174px" width="18" height="18" viewBox="0 0 18 18"><rect x="1" y="1.2" width="13" height="14.2" rx="1" fill="none" stroke="#c4c4c4" stroke-width="1.1"/><rect x="3.600" y="3.400" width="13" height="13.600" rx=".6" fill="#4a4a4a" stroke="#c4c4c4" stroke-width="1.1"/><path d="M9.400 3.400H13V10.400L11.200 8.800L9.400 10.400Z" fill="#c4c4c4"/></svg>
<svg style="left:1531px;top:216px" width="19" height="17" viewBox="0 0 19 17"><path d="M1 3.400H18M1 8.500H18M1 13.600H18" stroke="#c4c4c4" stroke-width="1"/><circle cx="6" cy="3.400" r="2" fill="#4a4a4a" stroke="#c4c4c4" stroke-width="1"/><circle cx="13" cy="8.500" r="2" fill="#4a4a4a" stroke="#c4c4c4" stroke-width="1"/><circle cx="8" cy="13.600" r="2" fill="#4a4a4a" stroke="#c4c4c4" stroke-width="1"/></svg>
<svg style="left:1532px;top:257px" width="18" height="17" viewBox="0 0 18 17"><defs><linearGradient id="cg" x1="0" y1="0" x2="1" y2="1"><stop offset="0" stop-color="#161616"/><stop offset=".45" stop-color="#6c6c6c"/><stop offset="1" stop-color="#f0f0f0"/></linearGradient></defs><path d="M1.200 1C9.600 2 15.400 7.600 16.600 15.600H1.200Z" fill="url(#cg)" stroke="#c8c8c8" stroke-width="1"/><path d="M1.200 15.600L6 2.400M1.200 15.600L10 4.600M1.200 15.600L13.400 8M1.200 15.600L15.600 12" stroke="#4a4a4a" stroke-width=".5" opacity=".6"/></svg>
<svg style="left:1532px;top:296px" width="18" height="21" viewBox="0 0 18 21"><path d="M1.500 .8V19.800" stroke="#c8c8c8" stroke-width="1.2"/><rect x="3.200" y="4" width="7.800" height="5.600" fill="#c4c4c4"/><rect x="3.200" y="12.200" width="13" height="4.800" fill="#c4c4c4"/></svg>
<svg style="left:1530px;top:328px" width="22" height="12" viewBox="0 0 22 12"><path d="M10.200 8.600H5.600A3.100 3.100 0 0 1 5.600 2.400H10.200A3.100 3.100 0 0 1 13.200 4.600" stroke="#c4c4c4" stroke-width="1.800" fill="none" stroke-linecap="round"/><path d="M11.400 2.800H16.200A3.100 3.100 0 0 1 16.200 9H11.600A3.100 3.100 0 0 1 8.600 6.800" stroke="#c4c4c4" stroke-width="1.800" fill="none" stroke-linecap="round"/></svg>
<svg style="left:1532px;top:354px" width="17" height="17" viewBox="0 0 17 17"><rect x="2.800" y="2.800" width="11" height="11" fill="none" stroke="#c4c4c4" stroke-width="1.100"/><g fill="#c4c4c4"><rect x="1" y="1" width="3" height="3"/><rect x="7" y="1" width="2.800" height="3"/><rect x="13" y="1" width="3" height="3"/><rect x="1" y="7" width="3" height="2.800"/><rect x="13" y="7" width="3" height="2.800"/><rect x="1" y="13" width="3" height="3"/><rect x="7" y="13" width="2.800" height="3"/><rect x="13" y="13" width="3" height="3"/></g><path d="M7.300 8.400H9.500M8.400 7.300V9.500" stroke="#c4c4c4" stroke-width=".7"/></svg>
<!-- col2 -->
<div style="left:1570px;top:128px;width:20px;height:30px;font-family:'Liberation Serif',serif;font-style:italic;font-weight:700;font-size:23px;line-height:30px;color:#a4a4a4;text-align:center">O</div>
<svg style="left:1573px;top:176px" width="14" height="17" viewBox="0 0 14 17"><path d="M12.600 1H6A4.400 4.400 0 0 0 6 9.800H8.200V16.400" stroke="none" fill="none"/><path d="M8.400 1H5.800A4.500 4.500 0 0 0 5.800 10H8.400Z" fill="#c4c4c4"/><path d="M8.900 1V16.400M12 1V16.400M8.400 1.500H12.500" stroke="#c4c4c4" stroke-width="1.100" fill="none"/></svg>
<svg style="left:1571px;top:213px" width="20" height="22" viewBox="0 0 20 22"><rect x="5.200" y="13.600" width="8.600" height="7.200" rx=".8" fill="#c4c4c4"/><path d="M8.600 13.600L7.600 4.800M10.600 13.600L11.800 7M12.400 13.600L15 8" stroke="#c4c4c4" stroke-width="1.100"/><path d="M6.400 12.400C3.200 11 1.600 8.400 3 5.600C5.400 7 6.800 9.600 6.400 12.400Z" fill="#c4c4c4"/><path d="M6.600 2.400C6.800 1 8.400 1 8.600 2.400L8.800 5.600H6.600Z" fill="#c4c4c4"/><path d="M11.600 7.600C12.400 5 15.800 4.400 17.800 7.600C16.600 8.400 14 7.200 12.800 8.400Z" fill="#c4c4c4"/></svg>
<svg style="left:1571px;top:242px" width="20" height="19" viewBox="0 0 20 19"><circle cx="10" cy="5" r="4.100" fill="#c4c4c4"/><circle cx="5.200" cy="10.200" r="4.100" fill="#c4c4c4"/><circle cx="14.800" cy="10.200" r="4.100" fill="#c4c4c4"/><path d="M9 8H11C11 12.600 11.600 15.800 14.800 17.200V18H5.200V17.200C8.400 15.800 9 12.600 9 8Z" fill="#c4c4c4"/></svg>
<!-- col3 -->
<svg style="left:1613px;top:134px" width="16" height="17" viewBox="0 0 16 17"><path d="M1.600 1.400V15.600L14.600 8.500Z" fill="#c4c4c4"/></svg>
<svg style="left:1611px;top:176px" width="19" height="14" viewBox="0 0 19 14"><defs><linearGradient id="gg" x1="0" y1="0" x2="1" y2="0"><stop offset="0" stop-color="#141414"/><stop offset="1" stop-color="#f2f2f2"/></linearGradient></defs><rect x="1" y="1" width="16.800" height="11.800" fill="url(#gg)" stroke="#c8c8c8" stroke-width="1.100"/></svg>
<svg style="left:1611px;top:202px" width="19" height="19" viewBox="0 0 19 19"><path d="M9.500 1.400L17 5.400V13.600L9.500 17.800L2 13.600V5.400ZM2 5.400L9.500 9.400L17 5.400M9.500 9.400V17.800" stroke="#c4c4c4" stroke-width="1.100" fill="none" stroke-linejoin="round"/></svg>
<div style="left:1612px;top:228px;font-size:19px;line-height:22px;color:#c4c4c4;font-family:'Liberation Sans',sans-serif">A</div>
<i style="left:1626.500px;top:230px;width:1.200px;height:18px;background:#c4c4c4"></i>


</div></div>

</body></html>
